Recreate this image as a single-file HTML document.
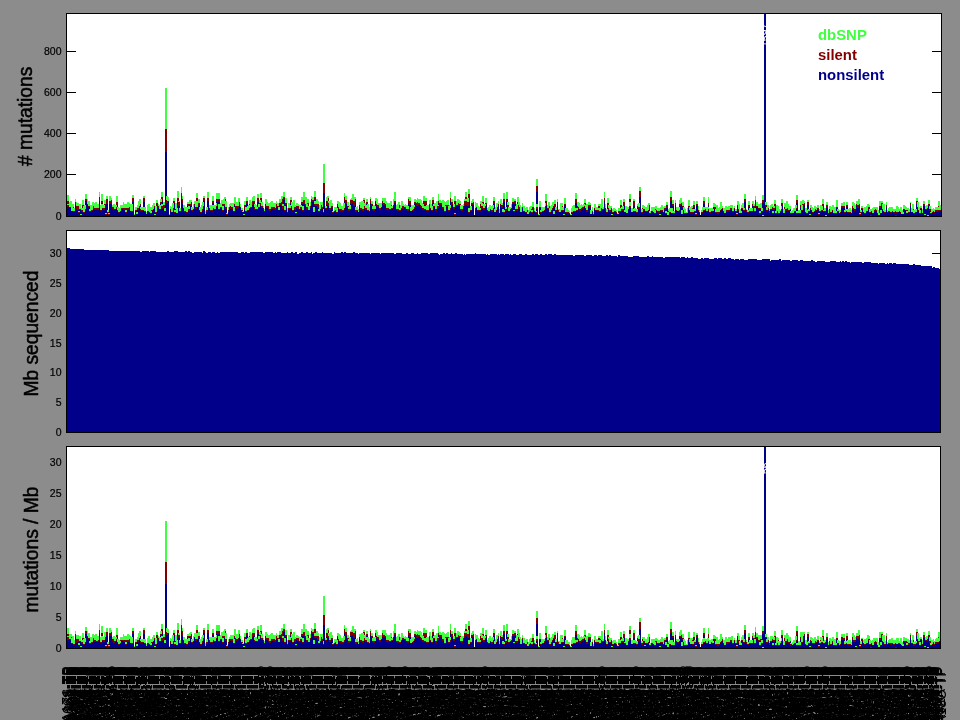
<!DOCTYPE html>
<html lang="en"><head><meta charset="utf-8"><title>Mutation rates</title>
<style>
html,body{margin:0;padding:0;background:#8c8c8c;}
body{width:960px;height:720px;overflow:hidden;}
svg{display:block;will-change:transform;font-family:"Liberation Sans",Arial,Helvetica,sans-serif;}
.tk{font-size:10.5px;fill:#000;text-anchor:end;stroke:#000;stroke-width:0.2px;}
.yl{font-size:19.2px;fill:#000;text-anchor:middle;stroke:#000;stroke-width:0.45px;}
.lg{font-size:14.9px;font-weight:bold;}
.xl{font-size:14px;fill:#000;text-anchor:end;}
.ax{fill:none;stroke:#000;stroke-width:1;shape-rendering:crispEdges;}
.bar{shape-rendering:crispEdges;stroke:none;}
</style></head><body>
<svg width="960" height="720" viewBox="0 0 960 720">
<rect width="960" height="720" fill="#8c8c8c"/>
<rect x="66.5" y="13.5" width="875" height="203" fill="#fff" stroke="none"/>
<rect x="66.5" y="230.5" width="874" height="202" fill="#fff" stroke="none"/>
<rect x="66.5" y="446.5" width="874" height="202" fill="#fff" stroke="none"/>
<path class="ax" d="M67 174.5h9M941 174.5H932M67 133.5h9M941 133.5H932M67 92.5h9M941 92.5H932M67 51.5h9M941 51.5H932"/>
<path class="ax" d="M67 402.5h9M940 402.5H932M67 372.5h9M940 372.5H932M67 343.5h9M940 343.5H932M67 313.5h9M940 313.5H932M67 283.5h9M940 283.5H932M67 253.5h9M940 253.5H932"/>
<path class="bar" fill="#00008b" d="M67 207h2V216h-2zM67 204h2V216h-2zM69 208h2V216h-2zM70 208h2V216h-2zM71 211h2V216h-2zM72 209h2V216h-2zM73 212h2V216h-2zM75 205h1V216h-1zM76 210h1V216h-1zM77 210h2V216h-2zM78 213h2V216h-2zM79 210h2V216h-2zM80 215h2V216h-2zM81 212h2V216h-2zM82 208h2V216h-2zM83 213h2V216h-2zM84 210h2V216h-2zM85 201h2V216h-2zM87 205h1V216h-1zM88 207h2V216h-2zM89 212h2V216h-2zM90 212h2V216h-2zM91 211h2V216h-2zM92 208h2V216h-2zM93 209h2V216h-2zM94 210h2V216h-2zM95 208h2V216h-2zM96 210h2V216h-2zM97 210h2V216h-2zM99 201h1V216h-1zM100 211h2V216h-2zM101 209h2V216h-2zM101 203h2V216h-2zM103 210h2V216h-2zM104 208h2V216h-2zM105 215h2V216h-2zM106 204h2V216h-2zM107 214h2V216h-2zM108 215h2V216h-2zM109 204h2V216h-2zM111 204h1V216h-1zM112 209h2V216h-2zM113 210h2V216h-2zM114 210h2V216h-2zM115 209h2V216h-2zM116 205h2V216h-2zM117 211h2V216h-2zM118 213h2V216h-2zM119 212h2V216h-2zM120 209h2V216h-2zM122 209h1V216h-1zM123 210h1V216h-1zM124 210h2V216h-2zM125 213h2V216h-2zM126 210h2V216h-2zM127 210h2V216h-2zM128 210h2V216h-2zM129 208h2V216h-2zM130 211h2V216h-2zM131 212h2V216h-2zM132 202h2V216h-2zM134 215h1V216h-1zM135 211h2V216h-2zM136 214h2V216h-2zM137 210h2V216h-2zM138 208h2V216h-2zM139 206h2V216h-2zM140 211h2V216h-2zM141 211h2V216h-2zM142 211h2V216h-2zM143 202h2V216h-2zM144 212h2V216h-2zM146 214h1V216h-1zM147 212h2V216h-2zM148 209h2V216h-2zM149 213h2V216h-2zM150 214h2V216h-2zM151 211h2V216h-2zM152 210h2V216h-2zM153 208h2V216h-2zM154 215h2V216h-2zM155 213h2V216h-2zM156 206h2V216h-2zM158 208h1V216h-1zM159 210h2V216h-2zM160 204h2V216h-2zM161 209h2V216h-2zM161 201h2V216h-2zM163 208h2V216h-2zM164 211h2V216h-2zM165 152h2V216h-2zM166 203h2V216h-2zM167 202h2V216h-2zM169 215h1V216h-1zM170 211h1V216h-1zM171 212h2V216h-2zM172 210h2V216h-2zM173 203h2V216h-2zM174 213h2V216h-2zM175 211h2V216h-2zM176 213h2V216h-2zM177 202h2V216h-2zM178 206h2V216h-2zM179 212h2V216h-2zM181 199h1V216h-1zM182 204h1V216h-1zM183 209h2V216h-2zM184 212h2V216h-2zM185 212h2V216h-2zM186 213h2V216h-2zM187 206h2V216h-2zM188 211h2V216h-2zM189 205h2V216h-2zM190 206h2V216h-2zM191 211h2V216h-2zM193 210h1V216h-1zM194 206h2V216h-2zM195 209h2V216h-2zM196 208h2V216h-2zM196 202h2V216h-2zM198 206h2V216h-2zM199 211h2V216h-2zM200 213h2V216h-2zM201 211h2V216h-2zM202 207h2V216h-2zM203 201h2V216h-2zM205 214h1V216h-1zM206 212h2V216h-2zM207 201h2V216h-2zM207 201h2V216h-2zM209 210h2V216h-2zM210 211h2V216h-2zM211 211h2V216h-2zM212 203h2V216h-2zM213 210h2V216h-2zM214 210h2V216h-2zM216 207h1V216h-1zM216 202h2V216h-2zM218 210h2V216h-2zM218 202h2V216h-2zM220 208h2V216h-2zM221 208h2V216h-2zM222 211h2V216h-2zM223 206h2V216h-2zM224 204h2V216h-2zM225 209h2V216h-2zM226 215h2V216h-2zM228 212h1V216h-1zM229 208h1V216h-1zM230 209h2V216h-2zM231 209h2V216h-2zM232 209h2V216h-2zM233 212h2V216h-2zM234 206h2V216h-2zM235 208h2V216h-2zM236 209h2V216h-2zM237 208h2V216h-2zM238 205h2V216h-2zM240 208h1V216h-1zM241 211h2V216h-2zM242 212h2V216h-2zM243 215h2V216h-2zM244 210h2V216h-2zM245 212h2V216h-2zM246 204h2V216h-2zM247 211h2V216h-2zM248 210h2V216h-2zM249 207h2V216h-2zM250 208h2V216h-2zM252 205h1V216h-1zM253 204h2V216h-2zM254 210h2V216h-2zM255 209h2V216h-2zM256 210h2V216h-2zM257 202h2V216h-2zM258 208h2V216h-2zM259 206h2V216h-2zM260 202h2V216h-2zM261 208h2V216h-2zM263 210h1V216h-1zM264 212h1V216h-1zM265 207h2V216h-2zM266 208h2V216h-2zM267 208h2V216h-2zM268 210h2V216h-2zM269 211h2V216h-2zM270 209h2V216h-2zM271 208h2V216h-2zM272 209h2V216h-2zM273 209h2V216h-2zM275 210h1V216h-1zM276 207h1V216h-1zM277 207h2V216h-2zM278 210h2V216h-2zM279 205h2V216h-2zM280 205h2V216h-2zM281 206h2V216h-2zM282 209h2V216h-2zM283 200h2V216h-2zM284 211h2V216h-2zM285 205h2V216h-2zM287 213h1V216h-1zM288 209h2V216h-2zM289 209h2V216h-2zM290 204h2V216h-2zM291 208h2V216h-2zM292 211h2V216h-2zM293 209h2V216h-2zM294 210h2V216h-2zM295 214h2V216h-2zM296 208h2V216h-2zM297 209h2V216h-2zM299 210h1V216h-1zM300 209h2V216h-2zM301 204h2V216h-2zM302 211h2V216h-2zM303 204h2V216h-2zM303 202h2V216h-2zM305 206h2V216h-2zM306 210h2V216h-2zM307 206h2V216h-2zM308 210h2V216h-2zM310 208h1V216h-1zM311 202h1V216h-1zM312 202h2V216h-2zM313 212h2V216h-2zM314 206h2V216h-2zM314 200h2V216h-2zM316 206h2V216h-2zM317 208h2V216h-2zM318 212h2V216h-2zM319 210h2V216h-2zM320 207h2V216h-2zM322 209h1V216h-1zM323 213h1V216h-1zM323 193h2V216h-2zM325 209h2V216h-2zM326 205h2V216h-2zM327 201h2V216h-2zM328 206h2V216h-2zM329 210h2V216h-2zM330 207h2V216h-2zM331 208h2V216h-2zM332 213h2V216h-2zM334 212h1V216h-1zM335 211h2V216h-2zM336 213h2V216h-2zM337 206h2V216h-2zM338 209h2V216h-2zM339 210h2V216h-2zM340 211h2V216h-2zM341 210h2V216h-2zM342 211h2V216h-2zM343 210h2V216h-2zM344 201h1V216h-1zM345 204h2V216h-2zM347 208h2V216h-2zM348 211h2V216h-2zM349 210h2V216h-2zM350 204h2V216h-2zM351 203h2V216h-2zM352 202h2V216h-2zM353 206h2V216h-2zM354 203h2V216h-2zM355 212h2V216h-2zM357 211h1V216h-1zM358 212h1V216h-1zM359 207h2V216h-2zM360 210h2V216h-2zM361 207h2V216h-2zM362 211h2V216h-2zM363 203h2V216h-2zM364 209h2V216h-2zM365 210h2V216h-2zM366 204h2V216h-2zM367 211h2V216h-2zM369 212h1V216h-1zM370 203h1V216h-1zM371 206h2V216h-2zM372 210h2V216h-2zM373 211h2V216h-2zM374 209h2V216h-2zM375 202h2V216h-2zM376 206h2V216h-2zM377 207h2V216h-2zM378 215h2V216h-2zM379 210h2V216h-2zM381 208h1V216h-1zM382 204h2V216h-2zM383 205h2V216h-2zM384 205h2V216h-2zM385 206h2V216h-2zM386 210h2V216h-2zM387 209h2V216h-2zM388 209h2V216h-2zM389 210h2V216h-2zM390 209h2V216h-2zM391 209h2V216h-2zM393 206h1V216h-1zM394 203h2V216h-2zM394 202h2V216h-2zM396 210h2V216h-2zM397 211h2V216h-2zM398 208h2V216h-2zM399 211h2V216h-2zM400 209h2V216h-2zM401 208h2V216h-2zM402 209h2V216h-2zM404 208h1V216h-1zM405 209h1V216h-1zM406 209h2V216h-2zM407 211h2V216h-2zM408 203h2V216h-2zM409 205h2V216h-2zM410 211h2V216h-2zM411 211h2V216h-2zM412 211h2V216h-2zM413 209h2V216h-2zM414 204h2V216h-2zM416 206h1V216h-1zM417 206h1V216h-1zM418 205h2V216h-2zM419 205h2V216h-2zM420 207h2V216h-2zM421 208h2V216h-2zM422 210h2V216h-2zM423 205h2V216h-2zM424 210h2V216h-2zM425 205h2V216h-2zM426 211h2V216h-2zM428 211h1V216h-1zM429 206h2V216h-2zM430 209h2V216h-2zM431 211h2V216h-2zM432 203h2V216h-2zM433 207h2V216h-2zM434 207h2V216h-2zM435 211h2V216h-2zM436 208h2V216h-2zM437 208h2V216h-2zM438 203h1V216h-1zM439 205h2V216h-2zM441 205h2V216h-2zM442 209h2V216h-2zM443 207h2V216h-2zM444 212h2V216h-2zM445 207h2V216h-2zM446 207h2V216h-2zM447 207h2V216h-2zM448 211h2V216h-2zM449 210h2V216h-2zM450 201h1V216h-1zM451 205h2V216h-2zM453 209h2V216h-2zM454 215h2V216h-2zM454 204h2V216h-2zM456 206h2V216h-2zM457 206h2V216h-2zM458 206h2V216h-2zM459 206h2V216h-2zM460 210h2V216h-2zM461 211h2V216h-2zM463 208h1V216h-1zM464 206h1V216h-1zM465 205h2V216h-2zM465 201h2V216h-2zM467 206h2V216h-2zM468 213h2V216h-2zM468 199h2V216h-2zM470 211h2V216h-2zM471 205h2V216h-2zM472 205h2V216h-2zM473 215h2V216h-2zM475 210h1V216h-1zM476 208h2V216h-2zM477 211h2V216h-2zM478 211h2V216h-2zM479 211h2V216h-2zM480 207h2V216h-2zM481 209h2V216h-2zM482 205h2V216h-2zM483 210h2V216h-2zM484 208h2V216h-2zM485 205h2V216h-2zM487 211h1V216h-1zM488 212h2V216h-2zM489 209h2V216h-2zM490 210h2V216h-2zM491 212h2V216h-2zM492 210h2V216h-2zM493 204h2V216h-2zM494 212h2V216h-2zM495 211h2V216h-2zM496 208h2V216h-2zM498 206h1V216h-1zM499 213h1V216h-1zM500 206h2V216h-2zM501 208h2V216h-2zM502 212h2V216h-2zM503 213h2V216h-2zM503 202h2V216h-2zM505 211h2V216h-2zM506 202h2V216h-2zM507 208h2V216h-2zM508 211h2V216h-2zM510 210h1V216h-1zM511 209h1V216h-1zM512 204h2V216h-2zM513 212h2V216h-2zM514 204h2V216h-2zM515 210h2V216h-2zM516 211h2V216h-2zM517 204h2V216h-2zM518 209h2V216h-2zM519 209h2V216h-2zM520 212h2V216h-2zM522 208h1V216h-1zM523 212h2V216h-2zM524 211h2V216h-2zM525 213h2V216h-2zM526 212h2V216h-2zM527 214h2V216h-2zM528 213h2V216h-2zM529 212h2V216h-2zM530 211h2V216h-2zM531 213h2V216h-2zM532 211h2V216h-2zM534 212h1V216h-1zM535 213h2V216h-2zM536 209h2V216h-2zM536 192h2V216h-2zM538 215h2V216h-2zM539 208h2V216h-2zM540 213h2V216h-2zM541 211h2V216h-2zM542 212h2V216h-2zM543 211h2V216h-2zM545 209h1V216h-1zM545 205h2V216h-2zM547 209h2V216h-2zM548 208h2V216h-2zM549 213h2V216h-2zM550 212h2V216h-2zM551 210h2V216h-2zM552 208h2V216h-2zM553 214h2V216h-2zM554 207h2V216h-2zM555 211h2V216h-2zM557 206h1V216h-1zM558 212h1V216h-1zM559 212h2V216h-2zM560 211h2V216h-2zM561 208h2V216h-2zM562 211h2V216h-2zM563 215h2V216h-2zM564 205h2V216h-2zM565 213h2V216h-2zM566 213h2V216h-2zM567 213h2V216h-2zM569 214h1V216h-1zM570 215h2V216h-2zM571 213h2V216h-2zM572 212h2V216h-2zM573 211h2V216h-2zM574 212h2V216h-2zM575 203h2V216h-2zM576 211h2V216h-2zM577 208h2V216h-2zM578 209h2V216h-2zM579 211h2V216h-2zM581 210h1V216h-1zM582 209h2V216h-2zM583 207h2V216h-2zM584 206h2V216h-2zM585 209h2V216h-2zM586 212h2V216h-2zM587 207h2V216h-2zM588 207h2V216h-2zM589 207h2V216h-2zM590 214h2V216h-2zM592 212h1V216h-1zM593 215h1V216h-1zM594 209h2V216h-2zM595 211h2V216h-2zM596 211h2V216h-2zM597 211h2V216h-2zM598 208h2V216h-2zM599 212h2V216h-2zM600 209h2V216h-2zM601 210h2V216h-2zM602 210h2V216h-2zM604 201h1V216h-1zM605 211h1V216h-1zM606 213h2V216h-2zM607 206h2V216h-2zM608 210h2V216h-2zM609 212h2V216h-2zM610 210h2V216h-2zM611 215h2V216h-2zM612 213h2V216h-2zM613 212h2V216h-2zM614 212h2V216h-2zM616 213h1V216h-1zM617 214h2V216h-2zM618 213h2V216h-2zM619 212h2V216h-2zM620 208h2V216h-2zM621 211h2V216h-2zM622 211h2V216h-2zM623 206h2V216h-2zM624 212h2V216h-2zM625 211h2V216h-2zM626 213h2V216h-2zM628 210h1V216h-1zM629 208h2V216h-2zM629 202h2V216h-2zM631 212h2V216h-2zM632 212h2V216h-2zM633 206h2V216h-2zM634 212h2V216h-2zM635 215h2V216h-2zM636 213h2V216h-2zM637 208h2V216h-2zM638 209h2V216h-2zM639 197h2V216h-2zM641 213h2V216h-2zM642 209h2V216h-2zM643 211h2V216h-2zM644 214h2V216h-2zM645 212h2V216h-2zM646 212h2V216h-2zM647 211h2V216h-2zM648 208h2V216h-2zM649 214h2V216h-2zM651 212h1V216h-1zM652 212h1V216h-1zM653 213h2V216h-2zM654 214h2V216h-2zM655 210h2V216h-2zM656 211h2V216h-2zM657 212h2V216h-2zM658 213h2V216h-2zM659 215h2V216h-2zM660 211h2V216h-2zM661 211h2V216h-2zM663 213h1V216h-1zM664 210h2V216h-2zM665 214h2V216h-2zM666 208h2V216h-2zM667 215h2V216h-2zM668 212h2V216h-2zM669 213h2V216h-2zM670 201h2V216h-2zM671 214h2V216h-2zM672 206h2V216h-2zM673 214h2V216h-2zM675 205h1V216h-1zM676 211h2V216h-2zM677 211h2V216h-2zM678 211h2V216h-2zM679 206h2V216h-2zM680 205h2V216h-2zM681 214h2V216h-2zM682 208h2V216h-2zM683 211h2V216h-2zM684 214h2V216h-2zM685 214h2V216h-2zM687 213h1V216h-1zM688 208h2V216h-2zM689 211h2V216h-2zM690 213h2V216h-2zM691 210h2V216h-2zM692 213h2V216h-2zM693 208h2V216h-2zM694 212h2V216h-2zM695 215h2V216h-2zM696 206h2V216h-2zM698 211h1V216h-1zM699 213h1V216h-1zM700 215h2V216h-2zM701 213h2V216h-2zM702 211h2V216h-2zM703 211h2V216h-2zM703 204h2V216h-2zM705 211h2V216h-2zM706 212h2V216h-2zM707 211h2V216h-2zM708 205h1V216h-1zM709 213h2V216h-2zM711 212h2V216h-2zM712 211h2V216h-2zM713 208h2V216h-2zM714 209h2V216h-2zM715 213h2V216h-2zM716 211h2V216h-2zM717 214h2V216h-2zM718 213h2V216h-2zM719 211h2V216h-2zM720 210h2V216h-2zM722 209h1V216h-1zM723 212h2V216h-2zM724 213h2V216h-2zM725 211h2V216h-2zM726 212h2V216h-2zM727 211h2V216h-2zM728 211h2V216h-2zM729 210h2V216h-2zM730 210h2V216h-2zM731 210h2V216h-2zM732 212h2V216h-2zM734 209h1V216h-1zM735 212h2V216h-2zM736 215h2V216h-2zM737 206h2V216h-2zM738 211h2V216h-2zM739 213h2V216h-2zM740 213h2V216h-2zM741 209h2V216h-2zM742 209h2V216h-2zM743 211h2V216h-2zM744 202h2V216h-2zM746 212h1V216h-1zM747 213h2V216h-2zM748 207h2V216h-2zM749 212h2V216h-2zM750 212h2V216h-2zM751 212h2V216h-2zM752 206h2V216h-2zM753 209h2V216h-2zM754 212h2V216h-2zM755 203h1V216h-1zM756 207h2V216h-2zM758 209h2V216h-2zM759 214h2V216h-2zM760 209h2V216h-2zM761 212h2V216h-2zM762 203h2V216h-2zM764 14h2V216h-2zM765 207h2V216h-2zM766 211h2V216h-2zM767 210h2V216h-2zM769 213h1V216h-1zM770 210h2V216h-2zM771 210h2V216h-2zM772 214h2V216h-2zM773 210h2V216h-2zM774 207h2V216h-2zM775 214h2V216h-2zM776 212h2V216h-2zM777 210h2V216h-2zM778 214h2V216h-2zM779 212h2V216h-2zM781 211h1V216h-1zM781 206h2V216h-2zM783 213h2V216h-2zM784 209h2V216h-2zM785 211h2V216h-2zM786 209h2V216h-2zM787 209h2V216h-2zM788 211h2V216h-2zM789 210h2V216h-2zM790 214h2V216h-2zM792 213h1V216h-1zM793 213h1V216h-1zM794 212h2V216h-2zM795 209h2V216h-2zM796 214h2V216h-2zM796 203h2V216h-2zM798 213h2V216h-2zM799 214h2V216h-2zM800 208h2V216h-2zM801 211h2V216h-2zM802 207h2V216h-2zM804 205h1V216h-1zM805 213h2V216h-2zM806 214h2V216h-2zM807 205h2V216h-2zM808 212h2V216h-2zM809 215h2V216h-2zM810 210h2V216h-2zM811 211h2V216h-2zM812 213h2V216h-2zM813 212h2V216h-2zM814 211h2V216h-2zM816 211h1V216h-1zM817 210h2V216h-2zM818 215h2V216h-2zM819 212h2V216h-2zM820 210h2V216h-2zM821 211h2V216h-2zM822 206h2V216h-2zM823 212h2V216h-2zM824 212h2V216h-2zM826 208h2V216h-2zM828 214h1V216h-1zM829 211h2V216h-2zM830 213h2V216h-2zM831 211h2V216h-2zM832 210h2V216h-2zM833 214h2V216h-2zM834 212h2V216h-2zM835 214h2V216h-2zM836 208h2V216h-2zM837 212h2V216h-2zM839 214h1V216h-1zM840 213h1V216h-1zM841 208h2V216h-2zM842 208h2V216h-2zM843 208h2V216h-2zM844 213h2V216h-2zM845 212h2V216h-2zM846 207h2V216h-2zM847 213h2V216h-2zM848 212h2V216h-2zM849 213h2V216h-2zM851 213h1V216h-1zM852 209h2V216h-2zM853 210h2V216h-2zM854 211h2V216h-2zM855 215h2V216h-2zM856 206h2V216h-2zM857 208h2V216h-2zM858 206h2V216h-2zM859 215h2V216h-2zM860 213h2V216h-2zM861 209h2V216h-2zM863 212h1V216h-1zM864 214h2V216h-2zM865 212h2V216h-2zM866 211h2V216h-2zM867 210h2V216h-2zM868 209h2V216h-2zM869 213h2V216h-2zM871 212h2V216h-2zM872 213h2V216h-2zM873 212h2V216h-2zM875 211h1V216h-1zM876 211h2V216h-2zM877 214h2V216h-2zM878 215h2V216h-2zM879 208h2V216h-2zM880 213h2V216h-2zM881 206h2V216h-2zM882 210h2V216h-2zM883 212h2V216h-2zM884 213h2V216h-2zM886 208h1V216h-1zM887 213h1V216h-1zM888 212h2V216h-2zM889 211h2V216h-2zM890 213h2V216h-2zM891 212h2V216h-2zM892 212h2V216h-2zM893 213h2V216h-2zM894 212h2V216h-2zM896 213h2V216h-2zM898 212h1V216h-1zM899 212h2V216h-2zM900 213h2V216h-2zM901 214h2V216h-2zM902 214h2V216h-2zM903 210h2V216h-2zM904 210h2V216h-2zM905 211h2V216h-2zM906 213h2V216h-2zM907 211h2V216h-2zM908 213h2V216h-2zM910 206h1V216h-1zM911 212h2V216h-2zM912 210h2V216h-2zM913 214h2V216h-2zM914 213h2V216h-2zM915 212h2V216h-2zM916 204h2V216h-2zM917 208h2V216h-2zM918 211h2V216h-2zM919 214h2V216h-2zM920 209h2V216h-2zM922 213h1V216h-1zM923 206h2V216h-2zM924 215h2V216h-2zM925 210h2V216h-2zM926 209h2V216h-2zM928 206h2V216h-2zM929 211h2V216h-2zM930 214h2V216h-2zM931 213h2V216h-2zM933 212h1V216h-1zM934 213h1V216h-1zM935 212h2V216h-2zM936 212h2V216h-2zM937 211h2V216h-2zM938 208h2V216h-2zM939 211h2V216h-2zM940 211h1V216h-1z"/>
<path class="bar" fill="#800000" d="M67 205h2V207h-2zM67 201h2V204h-2zM69 207h2V208h-2zM70 205h2V208h-2zM72 207h2V209h-2zM73 211h2V212h-2zM75 202h1V205h-1zM76 206h1V210h-1zM77 206h2V210h-2zM78 212h2V213h-2zM79 209h2V210h-2zM81 210h2V212h-2zM82 205h2V208h-2zM83 212h2V213h-2zM84 209h2V210h-2zM85 199h2V201h-2zM87 204h1V205h-1zM88 206h2V207h-2zM89 211h2V212h-2zM90 210h2V212h-2zM91 210h2V211h-2zM92 206h2V208h-2zM93 206h2V209h-2zM94 208h2V210h-2zM95 206h2V208h-2zM96 208h2V210h-2zM97 208h2V210h-2zM99 197h1V201h-1zM100 210h2V211h-2zM101 208h2V209h-2zM101 201h2V203h-2zM103 208h2V210h-2zM104 204h2V208h-2zM105 214h2V215h-2zM106 199h2V204h-2zM107 212h2V214h-2zM108 214h2V215h-2zM109 201h2V204h-2zM111 200h1V204h-1zM112 207h2V209h-2zM113 207h2V210h-2zM114 209h2V210h-2zM115 207h2V209h-2zM116 202h2V205h-2zM117 210h2V211h-2zM118 212h2V213h-2zM119 211h2V212h-2zM120 208h2V209h-2zM122 208h1V209h-1zM123 208h1V210h-1zM124 208h2V210h-2zM125 212h2V213h-2zM126 208h2V210h-2zM127 208h2V210h-2zM128 207h2V210h-2zM129 207h2V208h-2zM131 211h2V212h-2zM132 198h2V202h-2zM135 210h2V211h-2zM137 208h2V210h-2zM138 206h2V208h-2zM139 204h2V206h-2zM140 209h2V211h-2zM141 210h2V211h-2zM142 210h2V211h-2zM143 198h2V202h-2zM144 211h2V212h-2zM147 211h2V212h-2zM148 207h2V209h-2zM149 212h2V213h-2zM150 213h2V214h-2zM151 210h2V211h-2zM152 209h2V210h-2zM153 206h2V208h-2zM155 212h2V213h-2zM156 203h2V206h-2zM158 206h1V208h-1zM159 209h2V210h-2zM160 202h2V204h-2zM161 206h2V209h-2zM161 197h2V201h-2zM163 205h2V208h-2zM165 129h2V152h-2zM166 200h2V203h-2zM167 201h2V202h-2zM170 209h1V211h-1zM172 208h2V210h-2zM173 201h2V203h-2zM174 212h2V213h-2zM175 209h2V211h-2zM177 198h2V202h-2zM178 202h2V206h-2zM179 211h2V212h-2zM181 193h1V199h-1zM182 199h1V204h-1zM183 208h2V209h-2zM184 211h2V212h-2zM185 211h2V212h-2zM186 212h2V213h-2zM187 204h2V206h-2zM188 209h2V211h-2zM189 204h2V205h-2zM190 202h2V206h-2zM191 210h2V211h-2zM193 209h1V210h-1zM194 204h2V206h-2zM195 207h2V209h-2zM196 207h2V208h-2zM196 198h2V202h-2zM198 203h2V206h-2zM199 210h2V211h-2zM200 212h2V213h-2zM201 209h2V211h-2zM202 206h2V207h-2zM203 198h2V201h-2zM206 210h2V212h-2zM207 198h2V201h-2zM207 198h2V201h-2zM209 208h2V210h-2zM210 210h2V211h-2zM211 210h2V211h-2zM212 201h2V203h-2zM213 208h2V210h-2zM214 209h2V210h-2zM216 206h1V207h-1zM216 199h2V202h-2zM218 209h2V210h-2zM218 199h2V202h-2zM220 207h2V208h-2zM221 204h2V208h-2zM222 210h2V211h-2zM223 204h2V206h-2zM224 199h2V204h-2zM225 207h2V209h-2zM226 214h2V215h-2zM228 210h1V212h-1zM229 207h1V208h-1zM230 206h2V209h-2zM231 207h2V209h-2zM232 207h2V209h-2zM233 211h2V212h-2zM234 204h2V206h-2zM235 206h2V208h-2zM236 206h2V209h-2zM237 206h2V208h-2zM238 202h2V205h-2zM240 207h1V208h-1zM241 210h2V211h-2zM244 205h2V210h-2zM245 211h2V212h-2zM246 201h2V204h-2zM247 210h2V211h-2zM248 208h2V210h-2zM249 204h2V207h-2zM250 207h2V208h-2zM252 201h1V205h-1zM253 201h2V204h-2zM254 207h2V210h-2zM256 209h2V210h-2zM257 198h2V202h-2zM258 207h2V208h-2zM259 203h2V206h-2zM260 198h2V202h-2zM261 206h2V208h-2zM263 208h1V210h-1zM264 211h1V212h-1zM265 204h2V207h-2zM266 206h2V208h-2zM267 206h2V208h-2zM268 205h2V210h-2zM269 209h2V211h-2zM270 207h2V209h-2zM271 205h2V208h-2zM272 207h2V209h-2zM273 207h2V209h-2zM275 208h1V210h-1zM276 204h1V207h-1zM277 206h2V207h-2zM279 203h2V205h-2zM280 202h2V205h-2zM281 199h2V206h-2zM282 206h2V209h-2zM283 197h2V200h-2zM284 210h2V211h-2zM285 203h2V205h-2zM287 212h1V213h-1zM288 208h2V209h-2zM289 208h2V209h-2zM290 200h2V204h-2zM291 206h2V208h-2zM292 210h2V211h-2zM293 207h2V209h-2zM294 207h2V210h-2zM295 213h2V214h-2zM296 206h2V208h-2zM297 206h2V209h-2zM299 209h1V210h-1zM300 207h2V209h-2zM301 202h2V204h-2zM302 210h2V211h-2zM303 200h2V204h-2zM303 198h2V202h-2zM305 204h2V206h-2zM306 207h2V210h-2zM307 203h2V206h-2zM310 206h1V208h-1zM311 199h1V202h-1zM312 200h2V202h-2zM314 204h2V206h-2zM314 197h2V200h-2zM316 204h2V206h-2zM317 204h2V208h-2zM318 211h2V212h-2zM319 209h2V210h-2zM320 205h2V207h-2zM322 207h1V209h-1zM323 212h1V213h-1zM323 183h2V193h-2zM325 208h2V209h-2zM326 201h2V205h-2zM327 198h2V201h-2zM328 203h2V206h-2zM329 208h2V210h-2zM330 206h2V207h-2zM331 206h2V208h-2zM332 212h2V213h-2zM334 211h1V212h-1zM335 210h2V211h-2zM336 212h2V213h-2zM337 204h2V206h-2zM338 207h2V209h-2zM339 209h2V210h-2zM340 209h2V211h-2zM341 209h2V210h-2zM342 210h2V211h-2zM343 208h2V210h-2zM344 197h1V201h-1zM345 200h2V204h-2zM347 206h2V208h-2zM348 209h2V211h-2zM349 209h2V210h-2zM350 200h2V204h-2zM351 200h2V203h-2zM352 199h2V202h-2zM353 201h2V206h-2zM354 199h2V203h-2zM355 210h2V212h-2zM357 210h1V211h-1zM359 205h2V207h-2zM360 208h2V210h-2zM361 205h2V207h-2zM362 209h2V211h-2zM363 200h2V203h-2zM364 206h2V209h-2zM365 208h2V210h-2zM366 202h2V204h-2zM367 210h2V211h-2zM369 211h1V212h-1zM370 199h1V203h-1zM371 204h2V206h-2zM372 209h2V210h-2zM373 209h2V211h-2zM375 201h2V202h-2zM376 204h2V206h-2zM377 205h2V207h-2zM379 208h2V210h-2zM381 207h1V208h-1zM382 201h2V204h-2zM383 203h2V205h-2zM384 203h2V205h-2zM385 204h2V206h-2zM386 208h2V210h-2zM387 208h2V209h-2zM388 208h2V209h-2zM389 209h2V210h-2zM390 205h2V209h-2zM391 208h2V209h-2zM393 205h1V206h-1zM394 201h2V203h-2zM394 198h2V202h-2zM396 209h2V210h-2zM397 209h2V211h-2zM398 205h2V208h-2zM399 210h2V211h-2zM400 208h2V209h-2zM401 206h2V208h-2zM402 206h2V209h-2zM404 207h1V208h-1zM405 207h1V209h-1zM407 209h2V211h-2zM408 199h2V203h-2zM409 201h2V205h-2zM411 210h2V211h-2zM412 209h2V211h-2zM413 207h2V209h-2zM414 202h2V204h-2zM416 203h1V206h-1zM417 202h1V206h-1zM418 203h2V205h-2zM419 203h2V205h-2zM420 205h2V207h-2zM421 206h2V208h-2zM422 208h2V210h-2zM423 201h2V205h-2zM424 209h2V210h-2zM425 201h2V205h-2zM426 210h2V211h-2zM428 210h1V211h-1zM429 204h2V206h-2zM430 208h2V209h-2zM431 210h2V211h-2zM432 200h2V203h-2zM433 206h2V207h-2zM434 205h2V207h-2zM435 209h2V211h-2zM436 205h2V208h-2zM437 206h2V208h-2zM438 201h1V203h-1zM439 203h2V205h-2zM441 203h2V205h-2zM442 207h2V209h-2zM443 206h2V207h-2zM444 211h2V212h-2zM445 205h2V207h-2zM446 205h2V207h-2zM447 205h2V207h-2zM448 210h2V211h-2zM449 208h2V210h-2zM450 198h1V201h-1zM451 202h2V205h-2zM453 207h2V209h-2zM454 214h2V215h-2zM454 201h2V204h-2zM456 205h2V206h-2zM457 202h2V206h-2zM458 203h2V206h-2zM459 204h2V206h-2zM460 209h2V210h-2zM461 209h2V211h-2zM463 206h1V208h-1zM464 201h1V206h-1zM465 201h2V205h-2zM465 197h2V201h-2zM467 202h2V206h-2zM468 212h2V213h-2zM468 194h2V199h-2zM470 210h2V211h-2zM471 203h2V205h-2zM472 202h2V205h-2zM475 208h1V210h-1zM476 207h2V208h-2zM477 210h2V211h-2zM478 210h2V211h-2zM479 210h2V211h-2zM480 204h2V207h-2zM481 206h2V209h-2zM482 202h2V205h-2zM483 208h2V210h-2zM484 206h2V208h-2zM485 203h2V205h-2zM487 210h1V211h-1zM488 211h2V212h-2zM489 207h2V209h-2zM490 209h2V210h-2zM491 210h2V212h-2zM492 208h2V210h-2zM493 201h2V204h-2zM495 210h2V211h-2zM496 207h2V208h-2zM498 204h1V206h-1zM500 204h2V206h-2zM501 205h2V208h-2zM503 212h2V213h-2zM503 199h2V202h-2zM505 209h2V211h-2zM506 199h2V202h-2zM507 205h2V208h-2zM510 209h1V210h-1zM511 208h1V209h-1zM512 202h2V204h-2zM513 211h2V212h-2zM514 201h2V204h-2zM515 209h2V210h-2zM516 209h2V211h-2zM517 202h2V204h-2zM518 205h2V209h-2zM519 207h2V209h-2zM522 207h1V208h-1zM523 211h2V212h-2zM524 210h2V211h-2zM525 212h2V213h-2zM526 210h2V212h-2zM528 212h2V213h-2zM529 211h2V212h-2zM530 209h2V211h-2zM531 212h2V213h-2zM532 207h2V211h-2zM534 211h1V212h-1zM535 212h2V213h-2zM536 207h2V209h-2zM536 186h2V192h-2zM539 207h2V208h-2zM540 212h2V213h-2zM541 210h2V211h-2zM542 211h2V212h-2zM543 210h2V211h-2zM545 206h1V209h-1zM545 201h2V205h-2zM547 208h2V209h-2zM548 206h2V208h-2zM549 212h2V213h-2zM550 210h2V212h-2zM551 208h2V210h-2zM552 206h2V208h-2zM554 204h2V207h-2zM555 210h2V211h-2zM557 202h1V206h-1zM558 210h1V212h-1zM560 210h2V211h-2zM561 206h2V208h-2zM562 210h2V211h-2zM564 204h2V205h-2zM565 212h2V213h-2zM566 211h2V213h-2zM567 212h2V213h-2zM569 213h1V214h-1zM571 212h2V213h-2zM572 211h2V212h-2zM573 210h2V211h-2zM574 211h2V212h-2zM575 199h2V203h-2zM576 210h2V211h-2zM577 206h2V208h-2zM578 207h2V209h-2zM579 209h2V211h-2zM581 208h1V210h-1zM582 207h2V209h-2zM583 206h2V207h-2zM584 203h2V206h-2zM585 208h2V209h-2zM586 210h2V212h-2zM587 205h2V207h-2zM588 204h2V207h-2zM589 205h2V207h-2zM592 211h1V212h-1zM593 214h1V215h-1zM594 208h2V209h-2zM595 210h2V211h-2zM596 210h2V211h-2zM597 210h2V211h-2zM598 206h2V208h-2zM599 211h2V212h-2zM600 208h2V209h-2zM601 208h2V210h-2zM602 209h2V210h-2zM604 198h1V201h-1zM605 208h1V211h-1zM606 212h2V213h-2zM607 203h2V206h-2zM608 208h2V210h-2zM609 210h2V212h-2zM610 208h2V210h-2zM612 212h2V213h-2zM613 211h2V212h-2zM614 211h2V212h-2zM616 212h1V213h-1zM618 211h2V213h-2zM619 211h2V212h-2zM620 205h2V208h-2zM621 209h2V211h-2zM622 209h2V211h-2zM623 202h2V206h-2zM625 210h2V211h-2zM628 209h1V210h-1zM629 206h2V208h-2zM629 199h2V202h-2zM632 211h2V212h-2zM633 201h2V206h-2zM634 211h2V212h-2zM636 212h2V213h-2zM637 206h2V208h-2zM638 207h2V209h-2zM639 191h2V197h-2zM641 212h2V213h-2zM642 208h2V209h-2zM643 209h2V211h-2zM645 211h2V212h-2zM646 211h2V212h-2zM647 210h2V211h-2zM648 205h2V208h-2zM649 213h2V214h-2zM651 211h1V212h-1zM652 211h1V212h-1zM653 212h2V213h-2zM654 213h2V214h-2zM655 209h2V210h-2zM656 210h2V211h-2zM657 211h2V212h-2zM658 211h2V213h-2zM660 210h2V211h-2zM661 210h2V211h-2zM663 212h1V213h-1zM664 208h2V210h-2zM665 213h2V214h-2zM666 205h2V208h-2zM668 211h2V212h-2zM669 212h2V213h-2zM670 197h2V201h-2zM671 213h2V214h-2zM672 204h2V206h-2zM673 213h2V214h-2zM675 203h1V205h-1zM676 210h2V211h-2zM678 210h2V211h-2zM679 204h2V206h-2zM680 203h2V205h-2zM682 206h2V208h-2zM683 210h2V211h-2zM684 213h2V214h-2zM685 213h2V214h-2zM688 206h2V208h-2zM689 210h2V211h-2zM690 212h2V213h-2zM691 208h2V210h-2zM692 212h2V213h-2zM693 205h2V208h-2zM694 211h2V212h-2zM695 214h2V215h-2zM696 204h2V206h-2zM698 210h1V211h-1zM699 212h1V213h-1zM701 212h2V213h-2zM702 210h2V211h-2zM703 210h2V211h-2zM703 201h2V204h-2zM705 209h2V211h-2zM706 211h2V212h-2zM707 209h2V211h-2zM708 203h1V205h-1zM709 212h2V213h-2zM711 211h2V212h-2zM713 207h2V208h-2zM714 207h2V209h-2zM715 212h2V213h-2zM716 210h2V211h-2zM717 212h2V214h-2zM718 212h2V213h-2zM719 210h2V211h-2zM720 209h2V210h-2zM722 208h1V209h-1zM723 211h2V212h-2zM725 210h2V211h-2zM726 210h2V212h-2zM727 210h2V211h-2zM728 210h2V211h-2zM729 208h2V210h-2zM730 208h2V210h-2zM731 208h2V210h-2zM732 211h2V212h-2zM734 208h1V209h-1zM735 211h2V212h-2zM736 214h2V215h-2zM737 205h2V206h-2zM738 209h2V211h-2zM741 208h2V209h-2zM742 208h2V209h-2zM743 210h2V211h-2zM744 199h2V202h-2zM746 210h1V212h-1zM747 212h2V213h-2zM748 205h2V207h-2zM749 211h2V212h-2zM750 211h2V212h-2zM751 211h2V212h-2zM752 204h2V206h-2zM753 206h2V209h-2zM754 211h2V212h-2zM755 200h1V203h-1zM756 206h2V207h-2zM758 208h2V209h-2zM759 213h2V214h-2zM760 208h2V209h-2zM761 211h2V212h-2zM762 200h2V203h-2zM765 205h2V207h-2zM766 210h2V211h-2zM767 208h2V210h-2zM769 211h1V213h-1zM770 209h2V210h-2zM771 207h2V210h-2zM772 213h2V214h-2zM773 208h2V210h-2zM774 204h2V207h-2zM775 213h2V214h-2zM776 211h2V212h-2zM777 209h2V210h-2zM778 213h2V214h-2zM779 211h2V212h-2zM781 209h1V211h-1zM781 203h2V206h-2zM784 207h2V209h-2zM785 209h2V211h-2zM786 207h2V209h-2zM787 208h2V209h-2zM788 210h2V211h-2zM789 209h2V210h-2zM790 213h2V214h-2zM794 211h2V212h-2zM795 208h2V209h-2zM796 213h2V214h-2zM796 200h2V203h-2zM799 213h2V214h-2zM800 205h2V208h-2zM801 210h2V211h-2zM802 204h2V207h-2zM804 203h1V205h-1zM805 212h2V213h-2zM806 213h2V214h-2zM807 202h2V205h-2zM808 211h2V212h-2zM810 208h2V210h-2zM811 210h2V211h-2zM812 212h2V213h-2zM813 211h2V212h-2zM814 209h2V211h-2zM816 210h1V211h-1zM817 208h2V210h-2zM818 214h2V215h-2zM819 211h2V212h-2zM820 209h2V210h-2zM821 210h2V211h-2zM822 204h2V206h-2zM823 211h2V212h-2zM824 211h2V212h-2zM826 205h2V208h-2zM828 213h1V214h-1zM829 209h2V211h-2zM830 212h2V213h-2zM831 210h2V211h-2zM832 208h2V210h-2zM833 213h2V214h-2zM834 211h2V212h-2zM835 213h2V214h-2zM836 207h2V208h-2zM837 211h2V212h-2zM839 213h1V214h-1zM840 212h1V213h-1zM841 206h2V208h-2zM842 206h2V208h-2zM843 206h2V208h-2zM844 212h2V213h-2zM845 211h2V212h-2zM846 205h2V207h-2zM847 212h2V213h-2zM848 211h2V212h-2zM849 212h2V213h-2zM852 206h2V209h-2zM853 208h2V210h-2zM854 209h2V211h-2zM856 204h2V206h-2zM857 205h2V208h-2zM858 204h2V206h-2zM859 214h2V215h-2zM860 212h2V213h-2zM861 208h2V209h-2zM864 213h2V214h-2zM865 211h2V212h-2zM867 207h2V210h-2zM868 207h2V209h-2zM869 212h2V213h-2zM870 215h2V216h-2zM871 211h2V212h-2zM873 210h2V212h-2zM875 209h1V211h-1zM876 210h2V211h-2zM877 213h2V214h-2zM879 206h2V208h-2zM881 203h2V206h-2zM882 209h2V210h-2zM883 211h2V212h-2zM884 212h2V213h-2zM886 205h1V208h-1zM887 212h1V213h-1zM888 211h2V212h-2zM889 210h2V211h-2zM890 212h2V213h-2zM891 211h2V212h-2zM892 211h2V212h-2zM893 212h2V213h-2zM894 211h2V212h-2zM895 215h2V216h-2zM896 212h2V213h-2zM899 211h2V212h-2zM900 212h2V213h-2zM903 209h2V210h-2zM904 209h2V210h-2zM905 210h2V211h-2zM907 210h2V211h-2zM908 212h2V213h-2zM910 203h1V206h-1zM912 209h2V210h-2zM913 213h2V214h-2zM914 212h2V213h-2zM916 201h2V204h-2zM917 207h2V208h-2zM918 210h2V211h-2zM919 213h2V214h-2zM920 208h2V209h-2zM923 204h2V206h-2zM925 209h2V210h-2zM926 208h2V209h-2zM928 204h2V206h-2zM929 209h2V211h-2zM930 213h2V214h-2zM931 212h2V213h-2zM933 211h1V212h-1zM934 212h1V213h-1zM935 210h2V212h-2zM936 210h2V212h-2zM937 210h2V211h-2zM938 206h2V208h-2zM939 210h2V211h-2zM940 210h1V211h-1z"/>
<path class="bar" fill="#40ff40" d="M67 204h2V205h-2zM67 195h2V201h-2zM69 202h2V207h-2zM70 201h2V205h-2zM71 205h2V211h-2zM72 204h2V207h-2zM73 208h2V211h-2zM75 199h1V202h-1zM76 202h1V206h-1zM77 203h2V206h-2zM78 211h2V212h-2zM79 204h2V209h-2zM80 214h2V215h-2zM81 208h2V210h-2zM82 200h2V205h-2zM83 206h2V212h-2zM84 205h2V209h-2zM85 194h2V199h-2zM87 199h1V204h-1zM88 201h2V206h-2zM89 209h2V211h-2zM90 205h2V210h-2zM91 206h2V210h-2zM92 202h2V206h-2zM93 203h2V206h-2zM94 205h2V208h-2zM95 202h2V206h-2zM96 206h2V208h-2zM97 204h2V208h-2zM99 192h1V197h-1zM100 205h2V210h-2zM101 204h2V208h-2zM101 194h2V201h-2zM103 205h2V208h-2zM104 200h2V204h-2zM105 213h2V214h-2zM106 196h2V199h-2zM107 210h2V212h-2zM108 213h2V214h-2zM109 196h2V201h-2zM111 198h1V200h-1zM112 205h2V207h-2zM113 204h2V207h-2zM114 207h2V209h-2zM115 205h2V207h-2zM116 196h2V202h-2zM117 207h2V210h-2zM118 208h2V212h-2zM119 208h2V211h-2zM120 205h2V208h-2zM122 205h1V208h-1zM123 202h1V208h-1zM124 204h2V208h-2zM125 210h2V212h-2zM126 204h2V208h-2zM127 202h2V208h-2zM128 203h2V207h-2zM129 204h2V207h-2zM130 207h2V211h-2zM131 204h2V211h-2zM132 195h2V198h-2zM134 214h1V215h-1zM135 207h2V210h-2zM136 212h2V214h-2zM137 205h2V208h-2zM138 201h2V206h-2zM139 199h2V204h-2zM140 207h2V209h-2zM141 207h2V210h-2zM142 207h2V210h-2zM143 196h2V198h-2zM144 207h2V211h-2zM146 212h1V214h-1zM147 205h2V211h-2zM148 204h2V207h-2zM149 207h2V212h-2zM150 211h2V213h-2zM151 207h2V210h-2zM152 205h2V209h-2zM153 203h2V206h-2zM154 214h2V215h-2zM155 206h2V212h-2zM156 200h2V203h-2zM158 204h1V206h-1zM159 205h2V209h-2zM160 199h2V202h-2zM161 204h2V206h-2zM161 192h2V197h-2zM163 202h2V205h-2zM164 208h2V211h-2zM165 88h2V129h-2zM166 196h2V200h-2zM167 197h2V201h-2zM169 214h1V215h-1zM170 206h1V209h-1zM171 207h2V212h-2zM172 203h2V208h-2zM173 198h2V201h-2zM174 210h2V212h-2zM175 203h2V209h-2zM176 208h2V213h-2zM177 191h2V198h-2zM178 201h2V202h-2zM179 208h2V211h-2zM181 187h1V193h-1zM182 196h1V199h-1zM183 205h2V208h-2zM184 208h2V211h-2zM185 207h2V211h-2zM186 207h2V212h-2zM187 202h2V204h-2zM188 206h2V209h-2zM189 200h2V204h-2zM190 200h2V202h-2zM191 207h2V210h-2zM193 204h1V209h-1zM194 201h2V204h-2zM195 203h2V207h-2zM196 201h2V207h-2zM196 193h2V198h-2zM198 199h2V203h-2zM199 207h2V210h-2zM200 209h2V212h-2zM201 205h2V209h-2zM202 202h2V206h-2zM203 196h2V198h-2zM205 211h1V214h-1zM206 207h2V210h-2zM207 196h2V198h-2zM207 192h2V198h-2zM209 205h2V208h-2zM210 206h2V210h-2zM211 205h2V210h-2zM212 196h2V201h-2zM213 205h2V208h-2zM214 205h2V209h-2zM216 203h1V206h-1zM216 193h2V199h-2zM218 204h2V209h-2zM218 193h2V199h-2zM220 203h2V207h-2zM221 200h2V204h-2zM222 206h2V210h-2zM223 199h2V204h-2zM224 197h2V199h-2zM225 201h2V207h-2zM226 213h2V214h-2zM228 207h1V210h-1zM229 204h1V207h-1zM230 203h2V206h-2zM231 204h2V207h-2zM232 203h2V207h-2zM233 207h2V211h-2zM234 197h2V204h-2zM235 202h2V206h-2zM236 203h2V206h-2zM237 202h2V206h-2zM238 198h2V202h-2zM240 204h1V207h-1zM241 208h2V210h-2zM242 211h2V212h-2zM243 214h2V215h-2zM244 201h2V205h-2zM245 207h2V211h-2zM246 197h2V201h-2zM247 206h2V210h-2zM248 205h2V208h-2zM249 200h2V204h-2zM250 202h2V207h-2zM252 197h1V201h-1zM253 196h2V201h-2zM254 204h2V207h-2zM255 205h2V209h-2zM256 207h2V209h-2zM257 194h2V198h-2zM258 204h2V207h-2zM259 200h2V203h-2zM260 193h2V198h-2zM261 202h2V206h-2zM263 206h1V208h-1zM264 209h1V211h-1zM265 199h2V204h-2zM266 202h2V206h-2zM267 203h2V206h-2zM268 203h2V205h-2zM269 203h2V209h-2zM270 202h2V207h-2zM271 201h2V205h-2zM272 205h2V207h-2zM273 203h2V207h-2zM275 203h1V208h-1zM276 201h1V204h-1zM277 203h2V206h-2zM278 207h2V210h-2zM279 199h2V203h-2zM280 199h2V202h-2zM281 196h2V199h-2zM282 204h2V206h-2zM283 192h2V197h-2zM284 206h2V210h-2zM285 198h2V203h-2zM287 208h1V212h-1zM288 203h2V208h-2zM289 205h2V208h-2zM290 197h2V200h-2zM291 202h2V206h-2zM292 206h2V210h-2zM293 200h2V207h-2zM294 205h2V207h-2zM295 212h2V213h-2zM296 203h2V206h-2zM297 204h2V206h-2zM299 205h1V209h-1zM300 205h2V207h-2zM301 197h2V202h-2zM302 206h2V210h-2zM303 196h2V200h-2zM303 192h2V198h-2zM305 197h2V204h-2zM306 204h2V207h-2zM307 199h2V203h-2zM308 206h2V210h-2zM310 202h1V206h-1zM311 196h1V199h-1zM312 197h2V200h-2zM313 207h2V212h-2zM314 201h2V204h-2zM314 191h2V197h-2zM316 199h2V204h-2zM317 201h2V204h-2zM318 209h2V211h-2zM319 205h2V209h-2zM320 202h2V205h-2zM322 202h1V207h-1zM323 209h1V212h-1zM323 164h2V183h-2zM325 206h2V208h-2zM326 197h2V201h-2zM327 196h2V198h-2zM328 201h2V203h-2zM329 202h2V208h-2zM330 200h2V206h-2zM331 203h2V206h-2zM332 211h2V212h-2zM334 207h1V211h-1zM335 207h2V210h-2zM336 208h2V212h-2zM337 201h2V204h-2zM338 202h2V207h-2zM339 203h2V209h-2zM340 207h2V209h-2zM341 206h2V209h-2zM342 208h2V210h-2zM343 203h2V208h-2zM344 193h1V197h-1zM345 196h2V200h-2zM347 202h2V206h-2zM348 207h2V209h-2zM349 205h2V209h-2zM350 199h2V200h-2zM351 198h2V200h-2zM352 194h2V199h-2zM353 197h2V201h-2zM354 197h2V199h-2zM355 207h2V210h-2zM357 206h1V210h-1zM358 209h1V212h-1zM359 202h2V205h-2zM360 205h2V208h-2zM361 201h2V205h-2zM362 201h2V209h-2zM363 198h2V200h-2zM364 203h2V206h-2zM365 205h2V208h-2zM366 199h2V202h-2zM367 204h2V210h-2zM369 207h1V211h-1zM370 197h1V199h-1zM371 201h2V204h-2zM372 206h2V209h-2zM373 205h2V209h-2zM374 206h2V209h-2zM375 198h2V201h-2zM376 199h2V204h-2zM377 203h2V205h-2zM379 203h2V208h-2zM381 203h1V207h-1zM382 198h2V201h-2zM383 200h2V203h-2zM384 198h2V203h-2zM385 201h2V204h-2zM386 203h2V208h-2zM387 204h2V208h-2zM388 203h2V208h-2zM389 204h2V209h-2zM390 201h2V205h-2zM391 206h2V208h-2zM393 199h1V205h-1zM394 198h2V201h-2zM394 192h2V198h-2zM396 205h2V209h-2zM397 204h2V209h-2zM398 202h2V205h-2zM399 208h2V210h-2zM400 205h2V208h-2zM401 201h2V206h-2zM402 204h2V206h-2zM404 205h1V207h-1zM405 204h1V207h-1zM406 205h2V209h-2zM407 206h2V209h-2zM408 197h2V199h-2zM409 197h2V201h-2zM410 207h2V211h-2zM411 205h2V210h-2zM412 205h2V209h-2zM413 205h2V207h-2zM414 199h2V202h-2zM416 200h1V203h-1zM417 198h1V202h-1zM418 199h2V203h-2zM419 199h2V203h-2zM420 200h2V205h-2zM421 203h2V206h-2zM422 204h2V208h-2zM423 196h2V201h-2zM424 206h2V209h-2zM425 198h2V201h-2zM426 205h2V210h-2zM428 205h1V210h-1zM429 200h2V204h-2zM430 204h2V208h-2zM431 206h2V210h-2zM432 197h2V200h-2zM433 204h2V206h-2zM434 203h2V205h-2zM435 204h2V209h-2zM436 201h2V205h-2zM437 205h2V206h-2zM438 194h1V201h-1zM439 200h2V203h-2zM441 201h2V203h-2zM442 200h2V207h-2zM443 201h2V206h-2zM444 206h2V211h-2zM445 202h2V205h-2zM446 201h2V205h-2zM447 200h2V205h-2zM448 206h2V210h-2zM449 205h2V208h-2zM450 192h1V198h-1zM451 199h2V202h-2zM453 204h2V207h-2zM454 213h2V214h-2zM454 196h2V201h-2zM456 201h2V205h-2zM457 199h2V202h-2zM458 200h2V203h-2zM459 201h2V204h-2zM460 205h2V209h-2zM461 205h2V209h-2zM463 204h1V206h-1zM464 199h1V201h-1zM465 199h2V201h-2zM465 192h2V197h-2zM467 198h2V202h-2zM468 208h2V212h-2zM468 189h2V194h-2zM470 206h2V210h-2zM471 201h2V203h-2zM472 199h2V202h-2zM475 202h1V208h-1zM476 203h2V207h-2zM477 206h2V210h-2zM478 207h2V210h-2zM479 208h2V210h-2zM480 201h2V204h-2zM481 203h2V206h-2zM482 196h2V202h-2zM483 204h2V208h-2zM484 204h2V206h-2zM485 198h2V203h-2zM487 208h1V210h-1zM488 207h2V211h-2zM489 205h2V207h-2zM490 206h2V209h-2zM491 207h2V210h-2zM492 205h2V208h-2zM493 197h2V201h-2zM494 209h2V212h-2zM495 207h2V210h-2zM496 203h2V207h-2zM498 201h1V204h-1zM499 209h1V213h-1zM500 199h2V204h-2zM501 203h2V205h-2zM502 209h2V212h-2zM503 210h2V212h-2zM503 193h2V199h-2zM505 207h2V209h-2zM506 192h2V199h-2zM507 202h2V205h-2zM508 207h2V211h-2zM510 207h1V209h-1zM511 204h1V208h-1zM512 198h2V202h-2zM513 210h2V211h-2zM514 199h2V201h-2zM515 206h2V209h-2zM516 204h2V209h-2zM517 197h2V202h-2zM518 202h2V205h-2zM519 205h2V207h-2zM520 207h2V212h-2zM522 203h1V207h-1zM523 206h2V211h-2zM524 208h2V210h-2zM525 209h2V212h-2zM526 207h2V210h-2zM527 212h2V214h-2zM528 210h2V212h-2zM529 207h2V211h-2zM530 206h2V209h-2zM531 210h2V212h-2zM532 202h2V207h-2zM534 208h1V211h-1zM535 211h2V212h-2zM536 204h2V207h-2zM536 179h2V186h-2zM538 214h2V215h-2zM539 201h2V207h-2zM540 210h2V212h-2zM541 207h2V210h-2zM542 209h2V211h-2zM543 207h2V210h-2zM545 203h1V206h-1zM545 194h2V201h-2zM547 205h2V208h-2zM548 202h2V206h-2zM549 208h2V212h-2zM550 206h2V210h-2zM551 205h2V208h-2zM552 202h2V206h-2zM553 211h2V214h-2zM554 200h2V204h-2zM555 207h2V210h-2zM557 199h1V202h-1zM558 209h1V210h-1zM559 209h2V212h-2zM560 203h2V210h-2zM561 203h2V206h-2zM562 207h2V210h-2zM563 214h2V215h-2zM564 198h2V204h-2zM565 208h2V212h-2zM566 208h2V211h-2zM567 210h2V212h-2zM569 211h1V213h-1zM570 214h2V215h-2zM571 208h2V212h-2zM572 206h2V211h-2zM573 205h2V210h-2zM574 208h2V211h-2zM575 193h2V199h-2zM576 208h2V210h-2zM577 202h2V206h-2zM578 203h2V207h-2zM579 205h2V209h-2zM581 204h1V208h-1zM582 205h2V207h-2zM583 204h2V206h-2zM584 199h2V203h-2zM585 205h2V208h-2zM586 204h2V210h-2zM587 204h2V205h-2zM588 202h2V204h-2zM589 203h2V205h-2zM590 210h2V214h-2zM592 207h1V211h-1zM593 212h1V214h-1zM594 204h2V208h-2zM595 208h2V210h-2zM596 207h2V210h-2zM597 208h2V210h-2zM598 204h2V206h-2zM599 208h2V211h-2zM600 204h2V208h-2zM601 199h2V208h-2zM602 207h2V209h-2zM604 192h1V198h-1zM605 204h1V208h-1zM606 209h2V212h-2zM607 198h2V203h-2zM608 205h2V208h-2zM609 207h2V210h-2zM610 206h2V208h-2zM611 214h2V215h-2zM612 209h2V212h-2zM613 208h2V211h-2zM614 209h2V211h-2zM616 210h1V212h-1zM617 213h2V214h-2zM618 208h2V211h-2zM619 208h2V211h-2zM620 200h2V205h-2zM621 207h2V209h-2zM622 206h2V209h-2zM623 199h2V202h-2zM624 210h2V212h-2zM625 206h2V210h-2zM626 207h2V213h-2zM628 207h1V209h-1zM629 202h2V206h-2zM629 194h2V199h-2zM631 208h2V212h-2zM632 209h2V211h-2zM633 199h2V201h-2zM634 208h2V211h-2zM636 209h2V212h-2zM637 204h2V206h-2zM638 203h2V207h-2zM639 187h2V191h-2zM641 209h2V212h-2zM642 205h2V208h-2zM643 206h2V209h-2zM645 207h2V211h-2zM646 207h2V211h-2zM647 205h2V210h-2zM648 203h2V205h-2zM649 211h2V213h-2zM651 207h1V211h-1zM652 207h1V211h-1zM653 207h2V212h-2zM654 210h2V213h-2zM655 206h2V209h-2zM656 208h2V210h-2zM657 208h2V211h-2zM658 208h2V211h-2zM659 214h2V215h-2zM660 207h2V210h-2zM661 205h2V210h-2zM663 207h1V212h-1zM664 206h2V208h-2zM665 211h2V213h-2zM666 202h2V205h-2zM667 212h2V215h-2zM668 209h2V211h-2zM669 208h2V212h-2zM670 191h2V197h-2zM671 208h2V213h-2zM672 200h2V204h-2zM673 211h2V213h-2zM675 200h1V203h-1zM676 207h2V210h-2zM677 207h2V211h-2zM678 207h2V210h-2zM679 200h2V204h-2zM680 198h2V203h-2zM681 210h2V214h-2zM682 202h2V206h-2zM683 207h2V210h-2zM684 209h2V213h-2zM685 212h2V213h-2zM687 208h1V213h-1zM688 200h2V206h-2zM689 207h2V210h-2zM690 207h2V212h-2zM691 206h2V208h-2zM692 209h2V212h-2zM693 201h2V205h-2zM694 209h2V211h-2zM695 213h2V214h-2zM696 201h2V204h-2zM698 206h1V210h-1zM699 210h1V212h-1zM701 210h2V212h-2zM702 207h2V210h-2zM703 207h2V210h-2zM703 197h2V201h-2zM705 207h2V209h-2zM706 207h2V211h-2zM707 207h2V209h-2zM708 197h1V203h-1zM709 208h2V212h-2zM711 208h2V211h-2zM712 209h2V211h-2zM713 203h2V207h-2zM714 204h2V207h-2zM715 209h2V212h-2zM716 205h2V210h-2zM717 210h2V212h-2zM718 208h2V212h-2zM719 207h2V210h-2zM720 202h2V209h-2zM722 206h1V208h-1zM723 208h2V211h-2zM724 210h2V213h-2zM725 206h2V210h-2zM726 207h2V210h-2zM727 207h2V210h-2zM728 206h2V210h-2zM729 206h2V208h-2zM730 205h2V208h-2zM731 205h2V208h-2zM732 208h2V211h-2zM734 206h1V208h-1zM735 209h2V211h-2zM736 213h2V214h-2zM737 201h2V205h-2zM738 204h2V209h-2zM739 209h2V213h-2zM740 211h2V213h-2zM741 205h2V208h-2zM742 203h2V208h-2zM743 208h2V210h-2zM744 194h2V199h-2zM746 209h1V210h-1zM747 210h2V212h-2zM748 201h2V205h-2zM749 208h2V211h-2zM750 210h2V211h-2zM751 208h2V211h-2zM752 201h2V204h-2zM753 204h2V206h-2zM754 208h2V211h-2zM755 196h1V200h-1zM756 202h2V206h-2zM758 204h2V208h-2zM759 211h2V213h-2zM760 203h2V208h-2zM761 208h2V211h-2zM762 215h2V216h-2zM762 195h2V200h-2zM765 202h2V205h-2zM766 207h2V210h-2zM767 205h2V208h-2zM769 209h1V211h-1zM770 205h2V209h-2zM771 204h2V207h-2zM772 211h2V213h-2zM773 206h2V208h-2zM774 200h2V204h-2zM775 211h2V213h-2zM776 205h2V211h-2zM777 206h2V209h-2zM778 209h2V213h-2zM779 210h2V211h-2zM781 206h1V209h-1zM781 199h2V203h-2zM783 209h2V213h-2zM784 203h2V207h-2zM785 207h2V209h-2zM786 201h2V207h-2zM787 204h2V208h-2zM788 208h2V210h-2zM789 206h2V209h-2zM790 211h2V213h-2zM792 210h1V213h-1zM793 208h1V213h-1zM794 208h2V211h-2zM795 205h2V208h-2zM796 211h2V213h-2zM796 195h2V200h-2zM798 210h2V213h-2zM799 210h2V213h-2zM800 201h2V205h-2zM801 205h2V210h-2zM802 200h2V204h-2zM804 201h1V203h-1zM805 208h2V212h-2zM806 210h2V213h-2zM807 200h2V202h-2zM808 209h2V211h-2zM809 214h2V215h-2zM810 205h2V208h-2zM811 207h2V210h-2zM812 209h2V212h-2zM813 208h2V211h-2zM814 206h2V209h-2zM816 207h1V210h-1zM817 205h2V208h-2zM818 213h2V214h-2zM819 209h2V211h-2zM820 205h2V209h-2zM821 206h2V210h-2zM822 199h2V204h-2zM823 210h2V211h-2zM824 208h2V211h-2zM825 215h2V216h-2zM826 202h2V205h-2zM828 210h1V213h-1zM829 206h2V209h-2zM830 208h2V212h-2zM831 207h2V210h-2zM832 205h2V208h-2zM833 208h2V213h-2zM834 207h2V211h-2zM835 211h2V213h-2zM836 200h2V207h-2zM837 209h2V211h-2zM839 210h1V213h-1zM840 210h1V212h-1zM841 203h2V206h-2zM842 203h2V206h-2zM843 202h2V206h-2zM844 210h2V212h-2zM845 209h2V211h-2zM846 202h2V205h-2zM847 209h2V212h-2zM848 209h2V211h-2zM849 208h2V212h-2zM851 210h1V213h-1zM852 202h2V206h-2zM853 203h2V208h-2zM854 205h2V209h-2zM856 201h2V204h-2zM857 202h2V205h-2zM858 199h2V204h-2zM859 213h2V214h-2zM860 210h2V212h-2zM861 206h2V208h-2zM863 208h1V212h-1zM864 207h2V213h-2zM865 208h2V211h-2zM866 206h2V211h-2zM867 204h2V207h-2zM868 205h2V207h-2zM869 209h2V212h-2zM871 209h2V211h-2zM872 208h2V213h-2zM873 207h2V210h-2zM875 207h1V209h-1zM876 207h2V210h-2zM877 210h2V213h-2zM878 213h2V215h-2zM879 201h2V206h-2zM880 210h2V213h-2zM881 201h2V203h-2zM882 204h2V209h-2zM883 204h2V211h-2zM884 210h2V212h-2zM886 202h1V205h-1zM887 210h1V212h-1zM888 208h2V211h-2zM889 207h2V210h-2zM890 209h2V212h-2zM891 207h2V211h-2zM892 209h2V211h-2zM893 210h2V212h-2zM894 209h2V211h-2zM896 206h2V212h-2zM898 207h1V212h-1zM899 209h2V211h-2zM900 207h2V212h-2zM901 210h2V214h-2zM902 212h2V214h-2zM903 205h2V209h-2zM904 206h2V209h-2zM905 207h2V210h-2zM906 211h2V213h-2zM907 208h2V210h-2zM908 209h2V212h-2zM910 202h1V203h-1zM911 208h2V212h-2zM912 204h2V209h-2zM913 210h2V213h-2zM914 210h2V212h-2zM915 209h2V212h-2zM916 198h2V201h-2zM917 202h2V207h-2zM918 207h2V210h-2zM919 210h2V213h-2zM920 206h2V208h-2zM922 209h1V213h-1zM923 201h2V204h-2zM924 214h2V215h-2zM925 206h2V209h-2zM926 205h2V208h-2zM927 215h2V216h-2zM928 200h2V204h-2zM929 206h2V209h-2zM930 212h2V213h-2zM931 209h2V212h-2zM933 208h1V211h-1zM934 209h1V212h-1zM935 207h2V210h-2zM936 207h2V210h-2zM937 207h2V210h-2zM938 201h2V206h-2zM939 206h2V210h-2zM940 205h1V210h-1z"/>
<path class="bar" fill="#00008b" d="M67 248h2V432h-2zM68 248h2V432h-2zM69 249h2V432h-2zM70 249h2V432h-2zM71 249h2V432h-2zM72 249h2V432h-2zM73 249h2V432h-2zM75 249h1V432h-1zM76 249h1V432h-1zM77 249h2V432h-2zM78 249h2V432h-2zM79 249h2V432h-2zM80 249h2V432h-2zM81 249h2V432h-2zM82 249h2V432h-2zM83 250h2V432h-2zM84 250h2V432h-2zM85 250h2V432h-2zM87 250h1V432h-1zM88 250h2V432h-2zM89 250h2V432h-2zM90 250h2V432h-2zM91 250h2V432h-2zM92 250h2V432h-2zM93 250h2V432h-2zM94 250h2V432h-2zM95 250h2V432h-2zM96 250h2V432h-2zM97 250h2V432h-2zM99 250h1V432h-1zM100 250h2V432h-2zM101 250h2V432h-2zM102 250h2V432h-2zM103 250h2V432h-2zM104 250h2V432h-2zM105 250h2V432h-2zM106 250h2V432h-2zM107 250h2V432h-2zM108 251h2V432h-2zM109 251h2V432h-2zM111 251h1V432h-1zM112 251h2V432h-2zM113 251h2V432h-2zM114 251h2V432h-2zM115 251h2V432h-2zM116 251h2V432h-2zM117 251h2V432h-2zM118 251h2V432h-2zM119 251h2V432h-2zM120 251h2V432h-2zM122 251h1V432h-1zM123 251h1V432h-1zM124 251h2V432h-2zM125 251h2V432h-2zM126 251h2V432h-2zM127 251h2V432h-2zM128 251h2V432h-2zM129 251h2V432h-2zM130 251h2V432h-2zM131 251h2V432h-2zM132 251h2V432h-2zM134 251h1V432h-1zM135 251h2V432h-2zM136 251h2V432h-2zM137 251h2V432h-2zM138 251h2V432h-2zM139 252h2V432h-2zM140 252h2V432h-2zM141 252h2V432h-2zM142 251h2V432h-2zM143 252h2V432h-2zM144 251h2V432h-2zM146 251h1V432h-1zM147 251h2V432h-2zM148 252h2V432h-2zM149 252h2V432h-2zM150 251h2V432h-2zM151 251h2V432h-2zM152 251h2V432h-2zM153 251h2V432h-2zM154 251h2V432h-2zM155 252h2V432h-2zM156 252h2V432h-2zM158 252h1V432h-1zM159 252h2V432h-2zM160 252h2V432h-2zM161 252h2V432h-2zM162 252h2V432h-2zM163 252h2V432h-2zM164 252h2V432h-2zM165 252h2V432h-2zM166 252h2V432h-2zM167 251h2V432h-2zM169 252h1V432h-1zM170 252h1V432h-1zM171 252h2V432h-2zM172 252h2V432h-2zM173 252h2V432h-2zM174 251h2V432h-2zM175 252h2V432h-2zM176 251h2V432h-2zM177 252h2V432h-2zM178 252h2V432h-2zM179 252h2V432h-2zM181 252h1V432h-1zM182 252h1V432h-1zM183 252h2V432h-2zM184 252h2V432h-2zM185 251h2V432h-2zM186 252h2V432h-2zM187 252h2V432h-2zM188 251h2V432h-2zM189 252h2V432h-2zM190 252h2V432h-2zM191 253h2V432h-2zM193 253h1V432h-1zM194 252h2V432h-2zM195 252h2V432h-2zM196 252h2V432h-2zM197 252h2V432h-2zM198 252h2V432h-2zM199 252h2V432h-2zM200 252h2V432h-2zM201 253h2V432h-2zM202 253h2V432h-2zM203 251h2V432h-2zM205 252h1V432h-1zM206 253h2V432h-2zM207 253h2V432h-2zM208 252h2V432h-2zM209 252h2V432h-2zM210 253h2V432h-2zM211 253h2V432h-2zM212 252h2V432h-2zM213 252h2V432h-2zM214 253h2V432h-2zM216 253h1V432h-1zM217 252h1V432h-1zM218 253h2V432h-2zM219 253h2V432h-2zM220 252h2V432h-2zM221 252h2V432h-2zM222 252h2V432h-2zM223 252h2V432h-2zM224 253h2V432h-2zM225 252h2V432h-2zM226 252h2V432h-2zM228 252h1V432h-1zM229 252h1V432h-1zM230 252h2V432h-2zM231 252h2V432h-2zM232 252h2V432h-2zM233 253h2V432h-2zM234 252h2V432h-2zM235 252h2V432h-2zM236 252h2V432h-2zM237 253h2V432h-2zM238 253h2V432h-2zM240 253h1V432h-1zM241 252h2V432h-2zM242 252h2V432h-2zM243 253h2V432h-2zM244 253h2V432h-2zM245 252h2V432h-2zM246 253h2V432h-2zM247 253h2V432h-2zM248 253h2V432h-2zM249 253h2V432h-2zM250 252h2V432h-2zM252 252h1V432h-1zM253 252h2V432h-2zM254 252h2V432h-2zM255 253h2V432h-2zM256 252h2V432h-2zM257 253h2V432h-2zM258 252h2V432h-2zM259 252h2V432h-2zM260 252h2V432h-2zM261 252h2V432h-2zM263 253h1V432h-1zM264 253h1V432h-1zM265 252h2V432h-2zM266 253h2V432h-2zM267 252h2V432h-2zM268 252h2V432h-2zM269 252h2V432h-2zM270 252h2V432h-2zM271 252h2V432h-2zM272 253h2V432h-2zM273 253h2V432h-2zM275 252h1V432h-1zM276 253h1V432h-1zM277 252h2V432h-2zM278 253h2V432h-2zM279 252h2V432h-2zM280 253h2V432h-2zM281 253h2V432h-2zM282 253h2V432h-2zM283 253h2V432h-2zM284 253h2V432h-2zM285 253h2V432h-2zM287 252h1V432h-1zM288 253h2V432h-2zM289 253h2V432h-2zM290 253h2V432h-2zM291 252h2V432h-2zM292 253h2V432h-2zM293 253h2V432h-2zM294 253h2V432h-2zM295 252h2V432h-2zM296 254h2V432h-2zM297 254h2V432h-2zM299 253h1V432h-1zM300 253h2V432h-2zM301 252h2V432h-2zM302 254h2V432h-2zM303 253h2V432h-2zM304 253h2V432h-2zM305 253h2V432h-2zM306 252h2V432h-2zM307 253h2V432h-2zM308 253h2V432h-2zM310 253h1V432h-1zM311 252h1V432h-1zM312 254h2V432h-2zM313 253h2V432h-2zM314 253h2V432h-2zM315 252h2V432h-2zM316 253h2V432h-2zM317 253h2V432h-2zM318 253h2V432h-2zM319 253h2V432h-2zM320 253h2V432h-2zM322 252h1V432h-1zM323 253h1V432h-1zM324 253h2V432h-2zM325 253h2V432h-2zM326 253h2V432h-2zM327 253h2V432h-2zM328 253h2V432h-2zM329 254h2V432h-2zM330 253h2V432h-2zM331 254h2V432h-2zM332 254h2V432h-2zM334 252h1V432h-1zM335 253h2V432h-2zM336 253h2V432h-2zM337 253h2V432h-2zM338 253h2V432h-2zM339 253h2V432h-2zM340 254h2V432h-2zM341 252h2V432h-2zM342 253h2V432h-2zM343 253h2V432h-2zM344 252h2V432h-2zM346 253h1V432h-1zM347 253h2V432h-2zM348 254h2V432h-2zM349 253h2V432h-2zM350 253h2V432h-2zM351 254h2V432h-2zM352 253h2V432h-2zM353 252h2V432h-2zM354 254h2V432h-2zM355 253h2V432h-2zM357 253h1V432h-1zM358 254h1V432h-1zM359 253h2V432h-2zM360 254h2V432h-2zM361 253h2V432h-2zM362 253h2V432h-2zM363 253h2V432h-2zM364 253h2V432h-2zM365 254h2V432h-2zM366 253h2V432h-2zM367 253h2V432h-2zM369 253h1V432h-1zM370 254h1V432h-1zM371 253h2V432h-2zM372 254h2V432h-2zM373 253h2V432h-2zM374 254h2V432h-2zM375 253h2V432h-2zM376 253h2V432h-2zM377 254h2V432h-2zM378 253h2V432h-2zM379 254h2V432h-2zM381 253h1V432h-1zM382 253h2V432h-2zM383 253h2V432h-2zM384 253h2V432h-2zM385 253h2V432h-2zM386 253h2V432h-2zM387 253h2V432h-2zM388 254h2V432h-2zM389 253h2V432h-2zM390 253h2V432h-2zM391 253h2V432h-2zM393 253h1V432h-1zM394 254h2V432h-2zM395 254h2V432h-2zM396 253h2V432h-2zM397 253h2V432h-2zM398 254h2V432h-2zM399 253h2V432h-2zM400 253h2V432h-2zM401 254h2V432h-2zM402 254h2V432h-2zM404 254h1V432h-1zM405 254h1V432h-1zM406 253h2V432h-2zM407 254h2V432h-2zM408 254h2V432h-2zM409 254h2V432h-2zM410 254h2V432h-2zM411 253h2V432h-2zM412 253h2V432h-2zM413 254h2V432h-2zM414 254h2V432h-2zM416 254h1V432h-1zM417 253h1V432h-1zM418 254h2V432h-2zM419 254h2V432h-2zM420 254h2V432h-2zM421 253h2V432h-2zM422 254h2V432h-2zM423 253h2V432h-2zM424 253h2V432h-2zM425 254h2V432h-2zM426 253h2V432h-2zM428 254h1V432h-1zM429 254h2V432h-2zM430 253h2V432h-2zM431 254h2V432h-2zM432 253h2V432h-2zM433 254h2V432h-2zM434 253h2V432h-2zM435 254h2V432h-2zM436 253h2V432h-2zM437 254h2V432h-2zM438 255h2V432h-2zM440 254h1V432h-1zM441 254h2V432h-2zM442 254h2V432h-2zM443 253h2V432h-2zM444 254h2V432h-2zM445 255h2V432h-2zM446 253h2V432h-2zM447 254h2V432h-2zM448 254h2V432h-2zM449 254h2V432h-2zM451 253h1V432h-1zM452 254h1V432h-1zM453 254h2V432h-2zM454 254h2V432h-2zM455 253h2V432h-2zM456 255h2V432h-2zM457 254h2V432h-2zM458 254h2V432h-2zM459 254h2V432h-2zM460 254h2V432h-2zM461 254h2V432h-2zM463 255h1V432h-1zM464 254h1V432h-1zM465 255h2V432h-2zM466 254h2V432h-2zM467 254h2V432h-2zM468 254h2V432h-2zM469 254h2V432h-2zM470 254h2V432h-2zM471 254h2V432h-2zM472 254h2V432h-2zM473 254h2V432h-2zM475 253h1V432h-1zM476 254h2V432h-2zM477 254h2V432h-2zM478 254h2V432h-2zM479 255h2V432h-2zM480 254h2V432h-2zM481 254h2V432h-2zM482 254h2V432h-2zM483 254h2V432h-2zM484 254h2V432h-2zM485 255h2V432h-2zM487 254h1V432h-1zM488 255h2V432h-2zM489 255h2V432h-2zM490 254h2V432h-2zM491 255h2V432h-2zM492 254h2V432h-2zM493 254h2V432h-2zM494 255h2V432h-2zM495 254h2V432h-2zM496 255h2V432h-2zM498 254h1V432h-1zM499 255h1V432h-1zM500 254h2V432h-2zM501 254h2V432h-2zM502 254h2V432h-2zM503 255h2V432h-2zM504 255h2V432h-2zM505 254h2V432h-2zM506 254h2V432h-2zM507 254h2V432h-2zM508 255h2V432h-2zM510 254h1V432h-1zM511 255h1V432h-1zM512 255h2V432h-2zM513 254h2V432h-2zM514 254h2V432h-2zM515 255h2V432h-2zM516 255h2V432h-2zM517 255h2V432h-2zM518 255h2V432h-2zM519 254h2V432h-2zM520 254h2V432h-2zM522 255h1V432h-1zM523 255h2V432h-2zM524 255h2V432h-2zM525 254h2V432h-2zM526 255h2V432h-2zM527 255h2V432h-2zM528 255h2V432h-2zM529 255h2V432h-2zM530 255h2V432h-2zM531 255h2V432h-2zM532 254h2V432h-2zM534 255h1V432h-1zM535 254h2V432h-2zM536 254h2V432h-2zM537 255h2V432h-2zM538 255h2V432h-2zM539 255h2V432h-2zM540 254h2V432h-2zM541 255h2V432h-2zM542 255h2V432h-2zM543 255h2V432h-2zM545 254h1V432h-1zM546 254h1V432h-1zM547 255h2V432h-2zM548 254h2V432h-2zM549 255h2V432h-2zM550 254h2V432h-2zM551 255h2V432h-2zM552 256h2V432h-2zM553 255h2V432h-2zM554 254h2V432h-2zM555 255h2V432h-2zM557 255h1V432h-1zM558 255h1V432h-1zM559 255h2V432h-2zM560 255h2V432h-2zM561 255h2V432h-2zM562 255h2V432h-2zM563 256h2V432h-2zM564 255h2V432h-2zM565 255h2V432h-2zM566 255h2V432h-2zM567 255h2V432h-2zM569 255h1V432h-1zM570 255h2V432h-2zM571 255h2V432h-2zM572 256h2V432h-2zM573 256h2V432h-2zM574 256h2V432h-2zM575 255h2V432h-2zM576 255h2V432h-2zM577 255h2V432h-2zM578 255h2V432h-2zM579 255h2V432h-2zM581 255h1V432h-1zM582 255h2V432h-2zM583 256h2V432h-2zM584 256h2V432h-2zM585 256h2V432h-2zM586 255h2V432h-2zM587 255h2V432h-2zM588 255h2V432h-2zM589 255h2V432h-2zM590 255h2V432h-2zM592 256h1V432h-1zM593 256h1V432h-1zM594 255h2V432h-2zM595 255h2V432h-2zM596 256h2V432h-2zM597 256h2V432h-2zM598 255h2V432h-2zM599 256h2V432h-2zM600 255h2V432h-2zM601 256h2V432h-2zM602 256h2V432h-2zM604 256h1V432h-1zM605 256h1V432h-1zM606 255h2V432h-2zM607 256h2V432h-2zM608 257h2V432h-2zM609 255h2V432h-2zM610 256h2V432h-2zM611 256h2V432h-2zM612 256h2V432h-2zM613 257h2V432h-2zM614 256h2V432h-2zM616 256h1V432h-1zM617 257h2V432h-2zM618 255h2V432h-2zM619 257h2V432h-2zM620 256h2V432h-2zM621 256h2V432h-2zM622 256h2V432h-2zM623 256h2V432h-2zM624 256h2V432h-2zM625 256h2V432h-2zM626 256h2V432h-2zM628 257h1V432h-1zM629 257h2V432h-2zM630 257h2V432h-2zM631 257h2V432h-2zM632 257h2V432h-2zM633 256h2V432h-2zM634 256h2V432h-2zM635 257h2V432h-2zM636 256h2V432h-2zM637 256h2V432h-2zM638 257h2V432h-2zM640 257h1V432h-1zM641 257h2V432h-2zM642 257h2V432h-2zM643 257h2V432h-2zM644 257h2V432h-2zM645 257h2V432h-2zM646 257h2V432h-2zM647 256h2V432h-2zM648 257h2V432h-2zM649 257h2V432h-2zM651 257h1V432h-1zM652 256h1V432h-1zM653 257h2V432h-2zM654 257h2V432h-2zM655 257h2V432h-2zM656 258h2V432h-2zM657 257h2V432h-2zM658 257h2V432h-2zM659 258h2V432h-2zM660 257h2V432h-2zM661 257h2V432h-2zM663 258h1V432h-1zM664 258h2V432h-2zM665 257h2V432h-2zM666 258h2V432h-2zM667 257h2V432h-2zM668 257h2V432h-2zM669 257h2V432h-2zM670 257h2V432h-2zM671 257h2V432h-2zM672 258h2V432h-2zM673 257h2V432h-2zM675 257h1V432h-1zM676 257h2V432h-2zM677 257h2V432h-2zM678 257h2V432h-2zM679 258h2V432h-2zM680 258h2V432h-2zM681 257h2V432h-2zM682 258h2V432h-2zM683 257h2V432h-2zM684 258h2V432h-2zM685 258h2V432h-2zM687 257h1V432h-1zM688 258h2V432h-2zM689 258h2V432h-2zM690 258h2V432h-2zM691 257h2V432h-2zM692 258h2V432h-2zM693 258h2V432h-2zM694 259h2V432h-2zM695 258h2V432h-2zM696 258h2V432h-2zM698 259h1V432h-1zM699 259h1V432h-1zM700 259h2V432h-2zM701 258h2V432h-2zM702 259h2V432h-2zM703 259h2V432h-2zM704 258h2V432h-2zM705 258h2V432h-2zM706 259h2V432h-2zM707 258h2V432h-2zM708 259h2V432h-2zM710 259h1V432h-1zM711 259h2V432h-2zM712 259h2V432h-2zM713 259h2V432h-2zM714 258h2V432h-2zM715 258h2V432h-2zM716 259h2V432h-2zM717 259h2V432h-2zM718 258h2V432h-2zM719 258h2V432h-2zM720 258h2V432h-2zM722 259h1V432h-1zM723 259h2V432h-2zM724 258h2V432h-2zM725 259h2V432h-2zM726 259h2V432h-2zM727 259h2V432h-2zM728 258h2V432h-2zM729 258h2V432h-2zM730 259h2V432h-2zM731 259h2V432h-2zM732 259h2V432h-2zM734 260h1V432h-1zM735 259h2V432h-2zM736 259h2V432h-2zM737 259h2V432h-2zM738 260h2V432h-2zM739 260h2V432h-2zM740 259h2V432h-2zM741 260h2V432h-2zM742 259h2V432h-2zM743 260h2V432h-2zM745 260h1V432h-1zM746 260h1V432h-1zM747 260h2V432h-2zM748 259h2V432h-2zM749 260h2V432h-2zM750 259h2V432h-2zM751 260h2V432h-2zM752 259h2V432h-2zM753 259h2V432h-2zM754 260h2V432h-2zM755 259h2V432h-2zM757 260h1V432h-1zM758 260h2V432h-2zM759 260h2V432h-2zM760 260h2V432h-2zM761 260h2V432h-2zM762 259h2V432h-2zM763 259h2V432h-2zM764 260h2V432h-2zM765 259h2V432h-2zM766 260h2V432h-2zM767 259h2V432h-2zM769 259h1V432h-1zM770 261h2V432h-2zM771 260h2V432h-2zM772 260h2V432h-2zM773 260h2V432h-2zM774 261h2V432h-2zM775 260h2V432h-2zM776 260h2V432h-2zM777 260h2V432h-2zM778 261h2V432h-2zM779 259h2V432h-2zM781 261h1V432h-1zM782 260h2V432h-2zM783 260h2V432h-2zM784 261h2V432h-2zM785 260h2V432h-2zM786 260h2V432h-2zM787 260h2V432h-2zM788 260h2V432h-2zM789 261h2V432h-2zM790 261h2V432h-2zM792 260h1V432h-1zM793 260h1V432h-1zM794 260h2V432h-2zM795 261h2V432h-2zM796 260h2V432h-2zM797 261h2V432h-2zM798 261h2V432h-2zM799 261h2V432h-2zM800 260h2V432h-2zM801 260h2V432h-2zM802 261h2V432h-2zM804 261h1V432h-1zM805 261h2V432h-2zM806 261h2V432h-2zM807 261h2V432h-2zM808 261h2V432h-2zM809 261h2V432h-2zM810 261h2V432h-2zM811 260h2V432h-2zM812 261h2V432h-2zM813 261h2V432h-2zM814 262h2V432h-2zM816 262h1V432h-1zM817 261h2V432h-2zM818 261h2V432h-2zM819 262h2V432h-2zM820 261h2V432h-2zM821 261h2V432h-2zM822 261h2V432h-2zM823 261h2V432h-2zM824 262h2V432h-2zM825 262h2V432h-2zM826 262h2V432h-2zM828 262h1V432h-1zM829 262h2V432h-2zM830 261h2V432h-2zM831 261h2V432h-2zM832 261h2V432h-2zM833 262h2V432h-2zM834 261h2V432h-2zM835 262h2V432h-2zM836 262h2V432h-2zM837 262h2V432h-2zM839 262h1V432h-1zM840 261h1V432h-1zM841 262h2V432h-2zM842 261h2V432h-2zM843 262h2V432h-2zM844 262h2V432h-2zM845 261h2V432h-2zM846 263h2V432h-2zM847 262h2V432h-2zM848 262h2V432h-2zM849 263h2V432h-2zM851 262h1V432h-1zM852 262h2V432h-2zM853 263h2V432h-2zM854 262h2V432h-2zM855 263h2V432h-2zM856 262h2V432h-2zM857 262h2V432h-2zM858 263h2V432h-2zM859 262h2V432h-2zM860 262h2V432h-2zM861 263h2V432h-2zM863 263h1V432h-1zM864 262h2V432h-2zM865 262h2V432h-2zM866 263h2V432h-2zM867 262h2V432h-2zM868 263h2V432h-2zM869 262h2V432h-2zM870 263h2V432h-2zM871 263h2V432h-2zM872 263h2V432h-2zM873 263h2V432h-2zM875 263h1V432h-1zM876 263h2V432h-2zM877 264h2V432h-2zM878 264h2V432h-2zM879 263h2V432h-2zM880 264h2V432h-2zM881 263h2V432h-2zM882 263h2V432h-2zM883 263h2V432h-2zM884 264h2V432h-2zM886 264h1V432h-1zM887 263h1V432h-1zM888 264h2V432h-2zM889 263h2V432h-2zM890 263h2V432h-2zM891 264h2V432h-2zM892 264h2V432h-2zM893 263h2V432h-2zM894 263h2V432h-2zM895 264h2V432h-2zM896 264h2V432h-2zM898 264h1V432h-1zM899 264h2V432h-2zM900 264h2V432h-2zM901 264h2V432h-2zM902 265h2V432h-2zM903 264h2V432h-2zM904 265h2V432h-2zM905 264h2V432h-2zM906 264h2V432h-2zM907 264h2V432h-2zM908 265h2V432h-2zM910 265h1V432h-1zM911 265h2V432h-2zM912 265h2V432h-2zM913 264h2V432h-2zM914 265h2V432h-2zM915 265h2V432h-2zM916 265h2V432h-2zM917 265h2V432h-2zM918 265h2V432h-2zM919 265h2V432h-2zM920 266h2V432h-2zM922 266h1V432h-1zM923 266h2V432h-2zM924 266h2V432h-2zM925 266h2V432h-2zM926 267h2V432h-2zM927 266h2V432h-2zM928 267h2V432h-2zM929 266h2V432h-2zM930 266h2V432h-2zM931 268h2V432h-2zM933 267h1V432h-1zM934 267h1V432h-1zM935 268h2V432h-2zM936 268h2V432h-2zM937 268h2V432h-2zM938 269h2V432h-2zM939 269h1V432h-1z"/>
<path class="bar" fill="#00008b" d="M67 640h2V648h-2zM67 636h2V648h-2zM69 640h2V648h-2zM70 640h2V648h-2zM71 644h2V648h-2zM72 641h2V648h-2zM73 645h2V648h-2zM75 637h1V648h-1zM76 643h1V648h-1zM77 642h2V648h-2zM78 645h2V648h-2zM79 642h2V648h-2zM80 647h2V648h-2zM81 644h2V648h-2zM82 640h2V648h-2zM83 645h2V648h-2zM84 642h2V648h-2zM85 634h2V648h-2zM87 637h1V648h-1zM88 639h2V648h-2zM89 644h2V648h-2zM90 644h2V648h-2zM91 643h2V648h-2zM92 640h2V648h-2zM93 641h2V648h-2zM94 642h2V648h-2zM95 640h2V648h-2zM96 642h2V648h-2zM97 642h2V648h-2zM99 633h1V648h-1zM100 643h2V648h-2zM101 641h2V648h-2zM101 636h2V648h-2zM103 642h2V648h-2zM104 640h2V648h-2zM105 647h2V648h-2zM106 636h2V648h-2zM107 646h2V648h-2zM108 647h2V648h-2zM109 636h2V648h-2zM111 636h1V648h-1zM112 641h2V648h-2zM113 643h2V648h-2zM114 642h2V648h-2zM115 641h2V648h-2zM116 637h2V648h-2zM117 643h2V648h-2zM118 645h2V648h-2zM119 644h2V648h-2zM120 641h2V648h-2zM122 641h1V648h-1zM123 642h1V648h-1zM124 642h2V648h-2zM125 645h2V648h-2zM126 642h2V648h-2zM127 642h2V648h-2zM128 642h2V648h-2zM129 641h2V648h-2zM130 643h2V648h-2zM131 644h2V648h-2zM132 634h2V648h-2zM134 647h1V648h-1zM135 643h2V648h-2zM136 646h2V648h-2zM137 642h2V648h-2zM138 640h2V648h-2zM139 638h2V648h-2zM140 643h2V648h-2zM141 643h2V648h-2zM142 643h2V648h-2zM143 634h2V648h-2zM144 644h2V648h-2zM146 646h1V648h-1zM147 644h2V648h-2zM148 641h2V648h-2zM149 645h2V648h-2zM150 646h2V648h-2zM151 643h2V648h-2zM152 642h2V648h-2zM153 640h2V648h-2zM154 647h2V648h-2zM155 645h2V648h-2zM156 638h2V648h-2zM158 640h1V648h-1zM159 642h2V648h-2zM160 636h2V648h-2zM161 641h2V648h-2zM161 633h2V648h-2zM163 640h2V648h-2zM164 643h2V648h-2zM165 584h2V648h-2zM166 635h2V648h-2zM167 634h2V648h-2zM169 647h1V648h-1zM170 643h1V648h-1zM171 644h2V648h-2zM172 642h2V648h-2zM173 635h2V648h-2zM174 645h2V648h-2zM175 643h2V648h-2zM176 645h2V648h-2zM177 634h2V648h-2zM178 638h2V648h-2zM179 644h2V648h-2zM181 631h1V648h-1zM182 636h1V648h-1zM183 641h2V648h-2zM184 644h2V648h-2zM185 644h2V648h-2zM186 645h2V648h-2zM187 639h2V648h-2zM188 643h2V648h-2zM189 637h2V648h-2zM190 638h2V648h-2zM191 643h2V648h-2zM193 642h1V648h-1zM194 638h2V648h-2zM195 641h2V648h-2zM196 640h2V648h-2zM196 634h2V648h-2zM198 638h2V648h-2zM199 643h2V648h-2zM200 645h2V648h-2zM201 643h2V648h-2zM202 640h2V648h-2zM203 633h2V648h-2zM205 646h1V648h-1zM206 644h2V648h-2zM207 633h2V648h-2zM207 633h2V648h-2zM209 642h2V648h-2zM210 643h2V648h-2zM211 643h2V648h-2zM212 635h2V648h-2zM213 642h2V648h-2zM214 642h2V648h-2zM216 639h1V648h-1zM216 634h2V648h-2zM218 642h2V648h-2zM218 634h2V648h-2zM220 640h2V648h-2zM221 640h2V648h-2zM222 643h2V648h-2zM223 638h2V648h-2zM224 636h2V648h-2zM225 641h2V648h-2zM226 647h2V648h-2zM228 644h1V648h-1zM229 640h1V648h-1zM230 641h2V648h-2zM231 641h2V648h-2zM232 641h2V648h-2zM233 644h2V648h-2zM234 638h2V648h-2zM235 640h2V648h-2zM236 641h2V648h-2zM237 640h2V648h-2zM238 637h2V648h-2zM240 640h1V648h-1zM241 643h2V648h-2zM242 644h2V648h-2zM243 647h2V648h-2zM244 642h2V648h-2zM245 644h2V648h-2zM246 636h2V648h-2zM247 643h2V648h-2zM248 642h2V648h-2zM249 639h2V648h-2zM250 640h2V648h-2zM252 637h1V648h-1zM253 636h2V648h-2zM254 642h2V648h-2zM255 641h2V648h-2zM256 642h2V648h-2zM257 634h2V648h-2zM258 640h2V648h-2zM259 638h2V648h-2zM260 634h2V648h-2zM261 640h2V648h-2zM263 642h1V648h-1zM264 644h1V648h-1zM265 639h2V648h-2zM266 640h2V648h-2zM267 640h2V648h-2zM268 642h2V648h-2zM269 643h2V648h-2zM270 641h2V648h-2zM271 640h2V648h-2zM272 641h2V648h-2zM273 641h2V648h-2zM275 642h1V648h-1zM276 639h1V648h-1zM277 640h2V648h-2zM278 642h2V648h-2zM279 637h2V648h-2zM280 637h2V648h-2zM281 638h2V648h-2zM282 641h2V648h-2zM283 632h2V648h-2zM284 643h2V648h-2zM285 637h2V648h-2zM287 645h1V648h-1zM288 641h2V648h-2zM289 641h2V648h-2zM290 636h2V648h-2zM291 640h2V648h-2zM292 643h2V648h-2zM293 641h2V648h-2zM294 642h2V648h-2zM295 646h2V648h-2zM296 640h2V648h-2zM297 641h2V648h-2zM299 642h1V648h-1zM300 641h2V648h-2zM301 636h2V648h-2zM302 643h2V648h-2zM303 636h2V648h-2zM303 634h2V648h-2zM305 638h2V648h-2zM306 642h2V648h-2zM307 638h2V648h-2zM308 642h2V648h-2zM310 640h1V648h-1zM311 634h1V648h-1zM312 634h2V648h-2zM313 644h2V648h-2zM314 638h2V648h-2zM314 633h2V648h-2zM316 638h2V648h-2zM317 640h2V648h-2zM318 644h2V648h-2zM319 642h2V648h-2zM320 639h2V648h-2zM322 641h1V648h-1zM323 645h1V648h-1zM323 625h2V648h-2zM325 641h2V648h-2zM326 637h2V648h-2zM327 634h2V648h-2zM328 638h2V648h-2zM329 642h2V648h-2zM330 639h2V648h-2zM331 640h2V648h-2zM332 645h2V648h-2zM334 644h1V648h-1zM335 643h2V648h-2zM336 645h2V648h-2zM337 638h2V648h-2zM338 641h2V648h-2zM339 642h2V648h-2zM340 643h2V648h-2zM341 642h2V648h-2zM342 643h2V648h-2zM343 642h2V648h-2zM344 633h1V648h-1zM345 636h2V648h-2zM347 640h2V648h-2zM348 643h2V648h-2zM349 642h2V648h-2zM350 636h2V648h-2zM351 635h2V648h-2zM352 634h2V648h-2zM353 638h2V648h-2zM354 635h2V648h-2zM355 644h2V648h-2zM357 643h1V648h-1zM358 644h1V648h-1zM359 639h2V648h-2zM360 642h2V648h-2zM361 639h2V648h-2zM362 643h2V648h-2zM363 635h2V648h-2zM364 641h2V648h-2zM365 642h2V648h-2zM366 636h2V648h-2zM367 643h2V648h-2zM369 644h1V648h-1zM370 635h1V648h-1zM371 638h2V648h-2zM372 642h2V648h-2zM373 643h2V648h-2zM374 641h2V648h-2zM375 634h2V648h-2zM376 638h2V648h-2zM377 639h2V648h-2zM378 647h2V648h-2zM379 642h2V648h-2zM381 640h1V648h-1zM382 637h2V648h-2zM383 637h2V648h-2zM384 637h2V648h-2zM385 638h2V648h-2zM386 642h2V648h-2zM387 641h2V648h-2zM388 641h2V648h-2zM389 642h2V648h-2zM390 641h2V648h-2zM391 641h2V648h-2zM393 638h1V648h-1zM394 635h2V648h-2zM394 633h2V648h-2zM396 642h2V648h-2zM397 643h2V648h-2zM398 639h2V648h-2zM399 643h2V648h-2zM400 641h2V648h-2zM401 640h2V648h-2zM402 640h2V648h-2zM404 640h1V648h-1zM405 641h1V648h-1zM406 641h2V648h-2zM407 643h2V648h-2zM408 635h2V648h-2zM409 637h2V648h-2zM410 643h2V648h-2zM411 643h2V648h-2zM412 643h2V648h-2zM413 641h2V648h-2zM414 636h2V648h-2zM416 638h1V648h-1zM417 638h1V648h-1zM418 637h2V648h-2zM419 637h2V648h-2zM420 639h2V648h-2zM421 640h2V648h-2zM422 642h2V648h-2zM423 637h2V648h-2zM424 642h2V648h-2zM425 637h2V648h-2zM426 643h2V648h-2zM428 643h1V648h-1zM429 638h2V648h-2zM430 641h2V648h-2zM431 643h2V648h-2zM432 635h2V648h-2zM433 639h2V648h-2zM434 639h2V648h-2zM435 643h2V648h-2zM436 640h2V648h-2zM437 640h2V648h-2zM438 635h1V648h-1zM439 637h2V648h-2zM441 637h2V648h-2zM442 641h2V648h-2zM443 639h2V648h-2zM444 644h2V648h-2zM445 639h2V648h-2zM446 639h2V648h-2zM447 639h2V648h-2zM448 643h2V648h-2zM449 642h2V648h-2zM450 633h1V648h-1zM451 637h2V648h-2zM453 641h2V648h-2zM454 647h2V648h-2zM454 636h2V648h-2zM456 638h2V648h-2zM457 638h2V648h-2zM458 638h2V648h-2zM459 638h2V648h-2zM460 642h2V648h-2zM461 643h2V648h-2zM463 640h1V648h-1zM464 638h1V648h-1zM465 636h2V648h-2zM465 633h2V648h-2zM467 638h2V648h-2zM468 645h2V648h-2zM468 631h2V648h-2zM470 643h2V648h-2zM471 637h2V648h-2zM472 637h2V648h-2zM473 647h2V648h-2zM475 642h1V648h-1zM476 640h2V648h-2zM477 643h2V648h-2zM478 643h2V648h-2zM479 643h2V648h-2zM480 639h2V648h-2zM481 641h2V648h-2zM482 636h2V648h-2zM483 642h2V648h-2zM484 640h2V648h-2zM485 637h2V648h-2zM487 643h1V648h-1zM488 644h2V648h-2zM489 641h2V648h-2zM490 642h2V648h-2zM491 644h2V648h-2zM492 642h2V648h-2zM493 636h2V648h-2zM494 644h2V648h-2zM495 643h2V648h-2zM496 640h2V648h-2zM498 638h1V648h-1zM499 645h1V648h-1zM500 638h2V648h-2zM501 640h2V648h-2zM502 644h2V648h-2zM503 645h2V648h-2zM503 634h2V648h-2zM505 643h2V648h-2zM506 634h2V648h-2zM507 640h2V648h-2zM508 643h2V648h-2zM510 642h1V648h-1zM511 641h1V648h-1zM512 636h2V648h-2zM513 644h2V648h-2zM514 636h2V648h-2zM515 642h2V648h-2zM516 643h2V648h-2zM517 636h2V648h-2zM518 641h2V648h-2zM519 641h2V648h-2zM520 644h2V648h-2zM522 640h1V648h-1zM523 644h2V648h-2zM524 643h2V648h-2zM525 645h2V648h-2zM526 644h2V648h-2zM527 646h2V648h-2zM528 645h2V648h-2zM529 644h2V648h-2zM530 643h2V648h-2zM531 645h2V648h-2zM532 643h2V648h-2zM534 644h1V648h-1zM535 645h2V648h-2zM536 641h2V648h-2zM536 624h2V648h-2zM538 647h2V648h-2zM539 640h2V648h-2zM540 645h2V648h-2zM541 643h2V648h-2zM542 644h2V648h-2zM543 643h2V648h-2zM545 641h1V648h-1zM545 637h2V648h-2zM547 641h2V648h-2zM548 640h2V648h-2zM549 645h2V648h-2zM550 644h2V648h-2zM551 641h2V648h-2zM552 639h2V648h-2zM553 646h2V648h-2zM554 639h2V648h-2zM555 643h2V648h-2zM557 638h1V648h-1zM558 644h1V648h-1zM559 644h2V648h-2zM560 643h2V648h-2zM561 640h2V648h-2zM562 643h2V648h-2zM563 647h2V648h-2zM564 637h2V648h-2zM565 645h2V648h-2zM566 645h2V648h-2zM567 645h2V648h-2zM569 646h1V648h-1zM570 647h2V648h-2zM571 645h2V648h-2zM572 644h2V648h-2zM573 643h2V648h-2zM574 644h2V648h-2zM575 635h2V648h-2zM576 643h2V648h-2zM577 640h2V648h-2zM578 641h2V648h-2zM579 643h2V648h-2zM581 642h1V648h-1zM582 641h2V648h-2zM583 639h2V648h-2zM584 638h2V648h-2zM585 641h2V648h-2zM586 644h2V648h-2zM587 639h2V648h-2zM588 638h2V648h-2zM589 639h2V648h-2zM590 646h2V648h-2zM592 643h1V648h-1zM593 647h1V648h-1zM594 641h2V648h-2zM595 643h2V648h-2zM596 643h2V648h-2zM597 643h2V648h-2zM598 640h2V648h-2zM599 644h2V648h-2zM600 640h2V648h-2zM601 642h2V648h-2zM602 642h2V648h-2zM604 633h1V648h-1zM605 643h1V648h-1zM606 645h2V648h-2zM607 638h2V648h-2zM608 641h2V648h-2zM609 643h2V648h-2zM610 641h2V648h-2zM611 647h2V648h-2zM612 645h2V648h-2zM613 643h2V648h-2zM614 644h2V648h-2zM616 645h1V648h-1zM617 646h2V648h-2zM618 645h2V648h-2zM619 644h2V648h-2zM620 640h2V648h-2zM621 642h2V648h-2zM622 643h2V648h-2zM623 638h2V648h-2zM624 644h2V648h-2zM625 643h2V648h-2zM626 645h2V648h-2zM628 642h1V648h-1zM629 640h2V648h-2zM629 634h2V648h-2zM631 644h2V648h-2zM632 644h2V648h-2zM633 638h2V648h-2zM634 644h2V648h-2zM635 647h2V648h-2zM636 645h2V648h-2zM637 640h2V648h-2zM638 641h2V648h-2zM639 629h2V648h-2zM641 645h2V648h-2zM642 641h2V648h-2zM643 643h2V648h-2zM644 646h2V648h-2zM645 644h2V648h-2zM646 644h2V648h-2zM647 643h2V648h-2zM648 640h2V648h-2zM649 646h2V648h-2zM651 644h1V648h-1zM652 644h1V648h-1zM653 645h2V648h-2zM654 646h2V648h-2zM655 642h2V648h-2zM656 643h2V648h-2zM657 644h2V648h-2zM658 644h2V648h-2zM659 647h2V648h-2zM660 643h2V648h-2zM661 643h2V648h-2zM663 645h1V648h-1zM664 642h2V648h-2zM665 645h2V648h-2zM666 640h2V648h-2zM667 647h2V648h-2zM668 644h2V648h-2zM669 645h2V648h-2zM670 633h2V648h-2zM671 646h2V648h-2zM672 638h2V648h-2zM673 646h2V648h-2zM675 637h1V648h-1zM676 642h2V648h-2zM677 643h2V648h-2zM678 642h2V648h-2zM679 637h2V648h-2zM680 637h2V648h-2zM681 646h2V648h-2zM682 640h2V648h-2zM683 643h2V648h-2zM684 646h2V648h-2zM685 646h2V648h-2zM687 645h1V648h-1zM688 640h2V648h-2zM689 643h2V648h-2zM690 644h2V648h-2zM691 642h2V648h-2zM692 645h2V648h-2zM693 640h2V648h-2zM694 644h2V648h-2zM695 647h2V648h-2zM696 638h2V648h-2zM698 643h1V648h-1zM699 645h1V648h-1zM700 647h2V648h-2zM701 645h2V648h-2zM702 643h2V648h-2zM703 643h2V648h-2zM703 635h2V648h-2zM705 643h2V648h-2zM706 644h2V648h-2zM707 642h2V648h-2zM708 637h1V648h-1zM709 644h2V648h-2zM711 643h2V648h-2zM712 643h2V648h-2zM713 640h2V648h-2zM714 641h2V648h-2zM715 645h2V648h-2zM716 643h2V648h-2zM717 646h2V648h-2zM718 645h2V648h-2zM719 643h2V648h-2zM720 642h2V648h-2zM722 641h1V648h-1zM723 644h2V648h-2zM724 645h2V648h-2zM725 643h2V648h-2zM726 644h2V648h-2zM727 642h2V648h-2zM728 643h2V648h-2zM729 642h2V648h-2zM730 642h2V648h-2zM731 641h2V648h-2zM732 644h2V648h-2zM734 641h1V648h-1zM735 644h2V648h-2zM736 647h2V648h-2zM737 638h2V648h-2zM738 643h2V648h-2zM739 645h2V648h-2zM740 645h2V648h-2zM741 641h2V648h-2zM742 641h2V648h-2zM743 643h2V648h-2zM744 633h2V648h-2zM746 644h1V648h-1zM747 645h2V648h-2zM748 639h2V648h-2zM749 644h2V648h-2zM750 644h2V648h-2zM751 644h2V648h-2zM752 638h2V648h-2zM753 641h2V648h-2zM754 644h2V648h-2zM755 635h1V648h-1zM756 639h2V648h-2zM758 641h2V648h-2zM759 646h2V648h-2zM760 641h2V648h-2zM761 644h2V648h-2zM762 634h2V648h-2zM764 447h2V648h-2zM765 638h2V648h-2zM766 643h2V648h-2zM767 642h2V648h-2zM769 645h1V648h-1zM770 642h2V648h-2zM771 641h2V648h-2zM772 646h2V648h-2zM773 642h2V648h-2zM774 639h2V648h-2zM775 646h2V648h-2zM776 644h2V648h-2zM777 642h2V648h-2zM778 646h2V648h-2zM779 644h2V648h-2zM781 643h1V648h-1zM781 637h2V648h-2zM783 645h2V648h-2zM784 641h2V648h-2zM785 643h2V648h-2zM786 640h2V648h-2zM787 640h2V648h-2zM788 643h2V648h-2zM789 642h2V648h-2zM790 646h2V648h-2zM792 645h1V648h-1zM793 645h1V648h-1zM794 644h2V648h-2zM795 641h2V648h-2zM796 646h2V648h-2zM796 635h2V648h-2zM798 645h2V648h-2zM799 646h2V648h-2zM800 639h2V648h-2zM801 643h2V648h-2zM802 639h2V648h-2zM804 636h1V648h-1zM805 645h2V648h-2zM806 646h2V648h-2zM807 637h2V648h-2zM808 644h2V648h-2zM809 647h2V648h-2zM810 642h2V648h-2zM811 643h2V648h-2zM812 644h2V648h-2zM813 644h2V648h-2zM814 643h2V648h-2zM816 643h1V648h-1zM817 642h2V648h-2zM818 647h2V648h-2zM819 644h2V648h-2zM820 642h2V648h-2zM821 643h2V648h-2zM822 638h2V648h-2zM823 644h2V648h-2zM824 643h2V648h-2zM826 639h2V648h-2zM828 645h1V648h-1zM829 643h2V648h-2zM830 645h2V648h-2zM831 643h2V648h-2zM832 642h2V648h-2zM833 646h2V648h-2zM834 644h2V648h-2zM835 646h2V648h-2zM836 640h2V648h-2zM837 644h2V648h-2zM839 646h1V648h-1zM840 645h1V648h-1zM841 640h2V648h-2zM842 639h2V648h-2zM843 640h2V648h-2zM844 645h2V648h-2zM845 644h2V648h-2zM846 639h2V648h-2zM847 645h2V648h-2zM848 644h2V648h-2zM849 645h2V648h-2zM851 645h1V648h-1zM852 640h2V648h-2zM853 642h2V648h-2zM854 642h2V648h-2zM855 647h2V648h-2zM856 638h2V648h-2zM857 639h2V648h-2zM858 638h2V648h-2zM859 647h2V648h-2zM860 645h2V648h-2zM861 641h2V648h-2zM863 644h1V648h-1zM864 645h2V648h-2zM865 644h2V648h-2zM866 643h2V648h-2zM867 641h2V648h-2zM868 641h2V648h-2zM869 645h2V648h-2zM871 644h2V648h-2zM872 645h2V648h-2zM873 644h2V648h-2zM875 642h1V648h-1zM876 643h2V648h-2zM877 646h2V648h-2zM878 647h2V648h-2zM879 640h2V648h-2zM880 645h2V648h-2zM881 638h2V648h-2zM882 642h2V648h-2zM883 644h2V648h-2zM884 645h2V648h-2zM886 640h1V648h-1zM887 645h1V648h-1zM888 644h2V648h-2zM889 643h2V648h-2zM890 645h2V648h-2zM891 644h2V648h-2zM892 644h2V648h-2zM893 645h2V648h-2zM894 644h2V648h-2zM896 644h2V648h-2zM898 644h1V648h-1zM899 644h2V648h-2zM900 644h2V648h-2zM901 646h2V648h-2zM902 646h2V648h-2zM903 642h2V648h-2zM904 642h2V648h-2zM905 643h2V648h-2zM906 645h2V648h-2zM907 643h2V648h-2zM908 645h2V648h-2zM910 638h1V648h-1zM911 644h2V648h-2zM912 642h2V648h-2zM913 646h2V648h-2zM914 645h2V648h-2zM915 644h2V648h-2zM916 636h2V648h-2zM917 640h2V648h-2zM918 643h2V648h-2zM919 646h2V648h-2zM920 640h2V648h-2zM922 645h1V648h-1zM923 638h2V648h-2zM924 647h2V648h-2zM925 641h2V648h-2zM926 641h2V648h-2zM928 638h2V648h-2zM929 643h2V648h-2zM930 646h2V648h-2zM931 645h2V648h-2zM933 643h1V648h-1zM934 645h1V648h-1zM935 644h2V648h-2zM936 643h2V648h-2zM937 643h2V648h-2zM938 639h2V648h-2zM939 642h1V648h-1z"/>
<path class="bar" fill="#800000" d="M67 637h2V640h-2zM67 634h2V636h-2zM69 639h2V640h-2zM70 637h2V640h-2zM71 643h2V644h-2zM72 640h2V641h-2zM73 644h2V645h-2zM75 634h1V637h-1zM76 639h1V643h-1zM77 639h2V642h-2zM79 641h2V642h-2zM81 642h2V644h-2zM82 638h2V640h-2zM83 644h2V645h-2zM85 631h2V634h-2zM87 636h1V637h-1zM88 638h2V639h-2zM89 643h2V644h-2zM90 642h2V644h-2zM91 642h2V643h-2zM92 638h2V640h-2zM93 638h2V641h-2zM94 640h2V642h-2zM95 638h2V640h-2zM96 641h2V642h-2zM97 640h2V642h-2zM99 630h1V633h-1zM100 642h2V643h-2zM101 640h2V641h-2zM101 633h2V636h-2zM103 640h2V642h-2zM104 637h2V640h-2zM105 646h2V647h-2zM106 632h2V636h-2zM107 644h2V646h-2zM108 646h2V647h-2zM109 633h2V636h-2zM111 632h1V636h-1zM112 639h2V641h-2zM113 639h2V643h-2zM114 641h2V642h-2zM115 639h2V641h-2zM116 635h2V637h-2zM117 642h2V643h-2zM118 644h2V645h-2zM119 643h2V644h-2zM120 640h2V641h-2zM122 640h1V641h-1zM123 640h1V642h-1zM124 640h2V642h-2zM125 644h2V645h-2zM126 640h2V642h-2zM127 640h2V642h-2zM128 639h2V642h-2zM129 639h2V641h-2zM131 643h2V644h-2zM132 631h2V634h-2zM135 642h2V643h-2zM137 640h2V642h-2zM138 638h2V640h-2zM139 636h2V638h-2zM140 641h2V643h-2zM141 642h2V643h-2zM142 642h2V643h-2zM143 630h2V634h-2zM144 643h2V644h-2zM147 643h2V644h-2zM148 639h2V641h-2zM149 644h2V645h-2zM150 645h2V646h-2zM151 642h2V643h-2zM152 641h2V642h-2zM153 638h2V640h-2zM155 644h2V645h-2zM156 635h2V638h-2zM158 638h1V640h-1zM159 641h2V642h-2zM160 634h2V636h-2zM161 638h2V641h-2zM161 629h2V633h-2zM163 637h2V640h-2zM165 562h2V584h-2zM166 632h2V635h-2zM167 633h2V634h-2zM170 641h1V643h-1zM172 641h2V642h-2zM173 633h2V635h-2zM174 644h2V645h-2zM175 641h2V643h-2zM177 630h2V634h-2zM178 635h2V638h-2zM179 643h2V644h-2zM181 625h1V631h-1zM182 631h1V636h-1zM183 640h2V641h-2zM184 643h2V644h-2zM185 643h2V644h-2zM186 644h2V645h-2zM187 636h2V639h-2zM188 641h2V643h-2zM189 636h2V637h-2zM190 634h2V638h-2zM191 642h2V643h-2zM193 641h1V642h-1zM194 637h2V638h-2zM195 639h2V641h-2zM196 639h2V640h-2zM196 630h2V634h-2zM198 636h2V638h-2zM199 642h2V643h-2zM200 644h2V645h-2zM201 641h2V643h-2zM202 638h2V640h-2zM203 630h2V633h-2zM206 642h2V644h-2zM207 630h2V633h-2zM207 630h2V633h-2zM209 640h2V642h-2zM210 642h2V643h-2zM211 642h2V643h-2zM212 633h2V635h-2zM213 640h2V642h-2zM214 641h2V642h-2zM216 638h1V639h-1zM216 631h2V634h-2zM218 641h2V642h-2zM218 631h2V634h-2zM220 639h2V640h-2zM221 636h2V640h-2zM222 642h2V643h-2zM223 636h2V638h-2zM224 631h2V636h-2zM225 639h2V641h-2zM226 646h2V647h-2zM228 642h1V644h-1zM229 639h1V640h-1zM230 639h2V641h-2zM231 639h2V641h-2zM232 639h2V641h-2zM233 643h2V644h-2zM234 636h2V638h-2zM235 638h2V640h-2zM236 639h2V641h-2zM237 638h2V640h-2zM238 634h2V637h-2zM240 639h1V640h-1zM241 642h2V643h-2zM244 637h2V642h-2zM245 643h2V644h-2zM246 633h2V636h-2zM247 642h2V643h-2zM248 640h2V642h-2zM249 636h2V639h-2zM250 639h2V640h-2zM252 633h1V637h-1zM253 633h2V636h-2zM254 640h2V642h-2zM256 641h2V642h-2zM257 630h2V634h-2zM258 639h2V640h-2zM259 635h2V638h-2zM260 631h2V634h-2zM261 638h2V640h-2zM263 640h1V642h-1zM264 643h1V644h-1zM265 636h2V639h-2zM266 638h2V640h-2zM267 638h2V640h-2zM268 637h2V642h-2zM269 641h2V643h-2zM270 639h2V641h-2zM271 637h2V640h-2zM272 639h2V641h-2zM273 639h2V641h-2zM275 640h1V642h-1zM276 636h1V639h-1zM277 638h2V640h-2zM279 635h2V637h-2zM280 634h2V637h-2zM281 631h2V638h-2zM282 638h2V641h-2zM283 629h2V632h-2zM284 642h2V643h-2zM285 635h2V637h-2zM287 644h1V645h-1zM288 640h2V641h-2zM289 640h2V641h-2zM290 632h2V636h-2zM291 638h2V640h-2zM292 642h2V643h-2zM293 639h2V641h-2zM294 639h2V642h-2zM295 645h2V646h-2zM296 638h2V640h-2zM297 638h2V641h-2zM299 641h1V642h-1zM300 639h2V641h-2zM301 634h2V636h-2zM302 642h2V643h-2zM303 632h2V636h-2zM303 630h2V634h-2zM305 636h2V638h-2zM306 640h2V642h-2zM307 635h2V638h-2zM310 638h1V640h-1zM311 631h1V634h-1zM312 632h2V634h-2zM314 636h2V638h-2zM314 629h2V633h-2zM316 636h2V638h-2zM317 636h2V640h-2zM318 643h2V644h-2zM319 641h2V642h-2zM320 637h2V639h-2zM322 639h1V641h-1zM323 644h1V645h-1zM323 615h2V625h-2zM325 640h2V641h-2zM326 633h2V637h-2zM327 630h2V634h-2zM328 636h2V638h-2zM329 640h2V642h-2zM330 638h2V639h-2zM331 638h2V640h-2zM332 644h2V645h-2zM334 643h1V644h-1zM335 642h2V643h-2zM336 644h2V645h-2zM337 636h2V638h-2zM338 639h2V641h-2zM339 641h2V642h-2zM340 641h2V643h-2zM341 641h2V642h-2zM342 642h2V643h-2zM343 640h2V642h-2zM344 629h1V633h-1zM345 632h2V636h-2zM347 638h2V640h-2zM348 641h2V643h-2zM349 641h2V642h-2zM350 632h2V636h-2zM351 632h2V635h-2zM352 631h2V634h-2zM353 633h2V638h-2zM354 631h2V635h-2zM355 642h2V644h-2zM357 642h1V643h-1zM359 637h2V639h-2zM360 640h2V642h-2zM361 637h2V639h-2zM362 641h2V643h-2zM363 632h2V635h-2zM364 638h2V641h-2zM365 640h2V642h-2zM366 634h2V636h-2zM367 642h2V643h-2zM369 643h1V644h-1zM370 631h1V635h-1zM371 636h2V638h-2zM372 641h2V642h-2zM373 641h2V643h-2zM375 633h2V634h-2zM376 636h2V638h-2zM377 637h2V639h-2zM379 640h2V642h-2zM381 639h1V640h-1zM382 633h2V637h-2zM383 635h2V637h-2zM384 635h2V637h-2zM385 636h2V638h-2zM386 640h2V642h-2zM387 640h2V641h-2zM388 640h2V641h-2zM389 641h2V642h-2zM390 637h2V641h-2zM391 640h2V641h-2zM393 637h1V638h-1zM394 633h2V635h-2zM394 630h2V633h-2zM396 641h2V642h-2zM397 641h2V643h-2zM398 637h2V639h-2zM399 642h2V643h-2zM400 640h2V641h-2zM401 638h2V640h-2zM402 638h2V640h-2zM404 639h1V640h-1zM405 639h1V641h-1zM407 641h2V643h-2zM408 631h2V635h-2zM409 633h2V637h-2zM411 642h2V643h-2zM412 641h2V643h-2zM413 639h2V641h-2zM414 634h2V636h-2zM416 635h1V638h-1zM417 634h1V638h-1zM418 635h2V637h-2zM419 635h2V637h-2zM420 637h2V639h-2zM421 638h2V640h-2zM422 640h2V642h-2zM423 633h2V637h-2zM424 641h2V642h-2zM425 633h2V637h-2zM426 642h2V643h-2zM428 642h1V643h-1zM429 636h2V638h-2zM430 640h2V641h-2zM431 642h2V643h-2zM432 632h2V635h-2zM433 638h2V639h-2zM434 637h2V639h-2zM435 641h2V643h-2zM436 637h2V640h-2zM437 638h2V640h-2zM438 633h1V635h-1zM439 635h2V637h-2zM441 635h2V637h-2zM442 639h2V641h-2zM443 638h2V639h-2zM444 643h2V644h-2zM445 637h2V639h-2zM446 637h2V639h-2zM447 637h2V639h-2zM448 642h2V643h-2zM449 640h2V642h-2zM450 630h1V633h-1zM451 634h2V637h-2zM453 639h2V641h-2zM454 646h2V647h-2zM454 633h2V636h-2zM456 637h2V638h-2zM457 634h2V638h-2zM458 635h2V638h-2zM459 636h2V638h-2zM460 641h2V642h-2zM461 641h2V643h-2zM463 638h1V640h-1zM464 633h1V638h-1zM465 633h2V636h-2zM465 629h2V633h-2zM467 634h2V638h-2zM468 644h2V645h-2zM468 626h2V631h-2zM470 642h2V643h-2zM471 635h2V637h-2zM472 634h2V637h-2zM475 640h1V642h-1zM476 639h2V640h-2zM477 642h2V643h-2zM478 642h2V643h-2zM479 642h2V643h-2zM480 636h2V639h-2zM481 638h2V641h-2zM482 634h2V636h-2zM483 640h2V642h-2zM484 638h2V640h-2zM485 635h2V637h-2zM487 642h1V643h-1zM488 643h2V644h-2zM489 639h2V641h-2zM490 641h2V642h-2zM491 642h2V644h-2zM492 640h2V642h-2zM493 633h2V636h-2zM495 642h2V643h-2zM496 639h2V640h-2zM498 636h1V638h-1zM499 644h1V645h-1zM500 636h2V638h-2zM501 637h2V640h-2zM503 644h2V645h-2zM503 631h2V634h-2zM505 641h2V643h-2zM506 631h2V634h-2zM507 637h2V640h-2zM508 642h2V643h-2zM510 641h1V642h-1zM511 640h1V641h-1zM512 634h2V636h-2zM513 643h2V644h-2zM514 633h2V636h-2zM515 641h2V642h-2zM516 641h2V643h-2zM517 634h2V636h-2zM518 637h2V641h-2zM519 639h2V641h-2zM522 638h1V640h-1zM523 643h2V644h-2zM524 642h2V643h-2zM525 644h2V645h-2zM526 642h2V644h-2zM528 644h2V645h-2zM529 643h2V644h-2zM530 641h2V643h-2zM531 644h2V645h-2zM532 638h2V643h-2zM534 643h1V644h-1zM535 644h2V645h-2zM536 639h2V641h-2zM536 618h2V624h-2zM539 639h2V640h-2zM540 644h2V645h-2zM541 642h2V643h-2zM542 643h2V644h-2zM543 641h2V643h-2zM545 638h1V641h-1zM545 633h2V637h-2zM547 640h2V641h-2zM548 638h2V640h-2zM549 644h2V645h-2zM550 642h2V644h-2zM551 640h2V641h-2zM552 638h2V639h-2zM554 635h2V639h-2zM555 642h2V643h-2zM557 633h1V638h-1zM558 642h1V644h-1zM560 642h2V643h-2zM561 638h2V640h-2zM562 642h2V643h-2zM564 636h2V637h-2zM565 644h2V645h-2zM566 643h2V645h-2zM567 644h2V645h-2zM569 645h1V646h-1zM571 644h2V645h-2zM572 643h2V644h-2zM573 641h2V643h-2zM574 643h2V644h-2zM575 631h2V635h-2zM576 642h2V643h-2zM577 638h2V640h-2zM578 639h2V641h-2zM579 641h2V643h-2zM581 640h1V642h-1zM582 639h2V641h-2zM583 638h2V639h-2zM584 635h2V638h-2zM585 640h2V641h-2zM586 642h2V644h-2zM587 637h2V639h-2zM588 636h2V638h-2zM589 637h2V639h-2zM592 642h1V643h-1zM593 646h1V647h-1zM594 640h2V641h-2zM595 642h2V643h-2zM596 642h2V643h-2zM597 642h2V643h-2zM598 638h2V640h-2zM599 643h2V644h-2zM600 639h2V640h-2zM601 640h2V642h-2zM602 641h2V642h-2zM604 630h1V633h-1zM605 640h1V643h-1zM606 644h2V645h-2zM607 635h2V638h-2zM608 639h2V641h-2zM609 642h2V643h-2zM610 640h2V641h-2zM612 644h2V645h-2zM614 643h2V644h-2zM616 644h1V645h-1zM618 643h2V645h-2zM619 643h2V644h-2zM620 637h2V640h-2zM621 641h2V642h-2zM622 641h2V643h-2zM623 634h2V638h-2zM624 643h2V644h-2zM625 642h2V643h-2zM628 641h1V642h-1zM629 638h2V640h-2zM629 630h2V634h-2zM632 643h2V644h-2zM633 633h2V638h-2zM634 643h2V644h-2zM636 644h2V645h-2zM637 638h2V640h-2zM638 639h2V641h-2zM639 622h2V629h-2zM641 643h2V645h-2zM642 639h2V641h-2zM643 641h2V643h-2zM645 643h2V644h-2zM646 643h2V644h-2zM647 642h2V643h-2zM648 637h2V640h-2zM649 645h2V646h-2zM651 643h1V644h-1zM652 643h1V644h-1zM653 644h2V645h-2zM654 645h2V646h-2zM655 641h2V642h-2zM656 641h2V643h-2zM657 643h2V644h-2zM658 643h2V644h-2zM660 642h2V643h-2zM661 642h2V643h-2zM663 644h1V645h-1zM664 640h2V642h-2zM666 637h2V640h-2zM668 643h2V644h-2zM669 644h2V645h-2zM670 629h2V633h-2zM671 645h2V646h-2zM672 636h2V638h-2zM673 645h2V646h-2zM675 635h1V637h-1zM676 641h2V642h-2zM677 642h2V643h-2zM678 641h2V642h-2zM679 636h2V637h-2zM680 635h2V637h-2zM682 638h2V640h-2zM683 642h2V643h-2zM684 645h2V646h-2zM685 645h2V646h-2zM688 638h2V640h-2zM689 642h2V643h-2zM691 640h2V642h-2zM692 644h2V645h-2zM693 637h2V640h-2zM694 642h2V644h-2zM695 646h2V647h-2zM696 635h2V638h-2zM698 642h1V643h-1zM699 644h1V645h-1zM701 644h2V645h-2zM702 642h2V643h-2zM703 642h2V643h-2zM703 633h2V635h-2zM705 641h2V643h-2zM706 643h2V644h-2zM707 641h2V642h-2zM708 634h1V637h-1zM711 642h2V643h-2zM713 639h2V640h-2zM714 639h2V641h-2zM715 644h2V645h-2zM716 642h2V643h-2zM717 644h2V646h-2zM718 644h2V645h-2zM719 642h2V643h-2zM720 641h2V642h-2zM722 639h1V641h-1zM723 643h2V644h-2zM725 642h2V643h-2zM726 642h2V644h-2zM728 642h2V643h-2zM729 640h2V642h-2zM730 640h2V642h-2zM731 640h2V641h-2zM732 643h2V644h-2zM734 640h1V641h-1zM735 643h2V644h-2zM736 646h2V647h-2zM737 636h2V638h-2zM738 640h2V643h-2zM741 640h2V641h-2zM742 639h2V641h-2zM743 642h2V643h-2zM744 630h2V633h-2zM746 642h1V644h-1zM747 644h2V645h-2zM748 637h2V639h-2zM749 643h2V644h-2zM750 643h2V644h-2zM751 643h2V644h-2zM752 636h2V638h-2zM753 638h2V641h-2zM754 643h2V644h-2zM755 632h1V635h-1zM756 637h2V639h-2zM758 640h2V641h-2zM759 645h2V646h-2zM760 639h2V641h-2zM761 643h2V644h-2zM762 631h2V634h-2zM765 637h2V638h-2zM766 642h2V643h-2zM767 640h2V642h-2zM769 643h1V645h-1zM770 641h2V642h-2zM771 639h2V641h-2zM772 645h2V646h-2zM773 640h2V642h-2zM774 636h2V639h-2zM775 645h2V646h-2zM776 643h2V644h-2zM777 640h2V642h-2zM778 645h2V646h-2zM779 643h2V644h-2zM781 641h1V643h-1zM781 635h2V637h-2zM784 638h2V641h-2zM785 641h2V643h-2zM786 639h2V640h-2zM787 639h2V640h-2zM788 642h2V643h-2zM789 641h2V642h-2zM790 644h2V646h-2zM793 644h1V645h-1zM794 643h2V644h-2zM795 640h2V641h-2zM796 645h2V646h-2zM796 631h2V635h-2zM799 645h2V646h-2zM800 637h2V639h-2zM801 642h2V643h-2zM802 636h2V639h-2zM804 634h1V636h-1zM805 644h2V645h-2zM806 645h2V646h-2zM807 634h2V637h-2zM808 643h2V644h-2zM810 640h2V642h-2zM811 641h2V643h-2zM812 643h2V644h-2zM813 643h2V644h-2zM814 641h2V643h-2zM816 642h1V643h-1zM817 640h2V642h-2zM818 646h2V647h-2zM819 643h2V644h-2zM820 640h2V642h-2zM821 642h2V643h-2zM822 636h2V638h-2zM823 643h2V644h-2zM824 642h2V643h-2zM826 637h2V639h-2zM829 641h2V643h-2zM830 644h2V645h-2zM831 641h2V643h-2zM832 640h2V642h-2zM833 645h2V646h-2zM834 643h2V644h-2zM835 645h2V646h-2zM836 638h2V640h-2zM837 643h2V644h-2zM839 645h1V646h-1zM840 644h1V645h-1zM841 637h2V640h-2zM842 637h2V639h-2zM843 638h2V640h-2zM844 644h2V645h-2zM845 643h2V644h-2zM846 636h2V639h-2zM847 644h2V645h-2zM848 642h2V644h-2zM849 644h2V645h-2zM852 637h2V640h-2zM853 640h2V642h-2zM854 640h2V642h-2zM856 636h2V638h-2zM857 636h2V639h-2zM858 635h2V638h-2zM859 646h2V647h-2zM860 644h2V645h-2zM861 639h2V641h-2zM863 643h1V644h-1zM864 644h2V645h-2zM865 643h2V644h-2zM867 639h2V641h-2zM868 639h2V641h-2zM869 644h2V645h-2zM870 647h2V648h-2zM871 643h2V644h-2zM873 642h2V644h-2zM875 641h1V642h-1zM876 642h2V643h-2zM877 645h2V646h-2zM879 638h2V640h-2zM881 634h2V638h-2zM882 641h2V642h-2zM883 642h2V644h-2zM884 644h2V645h-2zM886 636h1V640h-1zM887 644h1V645h-1zM888 643h2V644h-2zM889 642h2V643h-2zM890 643h2V645h-2zM891 643h2V644h-2zM892 643h2V644h-2zM893 644h2V645h-2zM894 643h2V644h-2zM895 647h2V648h-2zM898 643h1V644h-1zM899 643h2V644h-2zM901 645h2V646h-2zM903 641h2V642h-2zM904 641h2V642h-2zM905 641h2V643h-2zM907 642h2V643h-2zM908 643h2V645h-2zM910 635h1V638h-1zM911 643h2V644h-2zM912 640h2V642h-2zM913 644h2V646h-2zM914 644h2V645h-2zM915 643h2V644h-2zM916 632h2V636h-2zM917 639h2V640h-2zM918 641h2V643h-2zM919 645h2V646h-2zM920 639h2V640h-2zM922 644h1V645h-1zM923 635h2V638h-2zM925 640h2V641h-2zM926 639h2V641h-2zM928 635h2V638h-2zM929 641h2V643h-2zM930 645h2V646h-2zM931 644h2V645h-2zM933 642h1V643h-1zM934 644h1V645h-1zM935 642h2V644h-2zM936 641h2V643h-2zM937 642h2V643h-2zM938 637h2V639h-2zM939 641h1V642h-1z"/>
<path class="bar" fill="#40ff40" d="M67 636h2V637h-2zM67 628h2V634h-2zM69 634h2V639h-2zM70 634h2V637h-2zM71 638h2V643h-2zM72 636h2V640h-2zM73 640h2V644h-2zM75 631h1V634h-1zM76 635h1V639h-1zM77 635h2V639h-2zM78 643h2V645h-2zM79 636h2V641h-2zM80 646h2V647h-2zM81 640h2V642h-2zM82 633h2V638h-2zM83 639h2V644h-2zM84 638h2V642h-2zM85 627h2V631h-2zM87 631h1V636h-1zM88 633h2V638h-2zM89 641h2V643h-2zM90 637h2V642h-2zM91 638h2V642h-2zM92 634h2V638h-2zM93 635h2V638h-2zM94 637h2V640h-2zM95 634h2V638h-2zM96 638h2V641h-2zM97 636h2V640h-2zM99 624h1V630h-1zM100 637h2V642h-2zM101 636h2V640h-2zM101 626h2V633h-2zM103 637h2V640h-2zM104 632h2V637h-2zM105 645h2V646h-2zM106 628h2V632h-2zM107 642h2V644h-2zM108 645h2V646h-2zM109 628h2V633h-2zM111 630h1V632h-1zM112 637h2V639h-2zM113 636h2V639h-2zM114 639h2V641h-2zM115 637h2V639h-2zM116 628h2V635h-2zM117 639h2V642h-2zM118 640h2V644h-2zM119 641h2V643h-2zM120 637h2V640h-2zM122 637h1V640h-1zM123 634h1V640h-1zM124 636h2V640h-2zM125 642h2V644h-2zM126 636h2V640h-2zM127 634h2V640h-2zM128 635h2V639h-2zM129 636h2V639h-2zM130 639h2V643h-2zM131 637h2V643h-2zM132 628h2V631h-2zM134 646h1V647h-1zM135 639h2V642h-2zM136 644h2V646h-2zM137 637h2V640h-2zM138 633h2V638h-2zM139 631h2V636h-2zM140 639h2V641h-2zM141 639h2V642h-2zM142 639h2V642h-2zM143 628h2V630h-2zM144 639h2V643h-2zM146 644h1V646h-1zM147 638h2V643h-2zM148 636h2V639h-2zM149 639h2V644h-2zM150 643h2V645h-2zM151 639h2V642h-2zM152 637h2V641h-2zM153 635h2V638h-2zM154 646h2V647h-2zM155 638h2V644h-2zM156 632h2V635h-2zM158 636h1V638h-1zM159 637h2V641h-2zM160 631h2V634h-2zM161 636h2V638h-2zM161 624h2V629h-2zM163 634h2V637h-2zM164 640h2V643h-2zM165 521h2V562h-2zM166 628h2V632h-2zM167 629h2V633h-2zM169 646h1V647h-1zM170 638h1V641h-1zM171 639h2V644h-2zM172 635h2V641h-2zM173 630h2V633h-2zM174 642h2V644h-2zM175 635h2V641h-2zM176 640h2V645h-2zM177 623h2V630h-2zM178 633h2V635h-2zM179 640h2V643h-2zM181 619h1V625h-1zM182 628h1V631h-1zM183 637h2V640h-2zM184 640h2V643h-2zM185 639h2V643h-2zM186 639h2V644h-2zM187 634h2V636h-2zM188 638h2V641h-2zM189 633h2V636h-2zM190 632h2V634h-2zM191 639h2V642h-2zM193 636h1V641h-1zM194 633h2V637h-2zM195 635h2V639h-2zM196 633h2V639h-2zM196 625h2V630h-2zM198 632h2V636h-2zM199 639h2V642h-2zM200 641h2V644h-2zM201 637h2V641h-2zM202 635h2V638h-2zM203 628h2V630h-2zM205 643h1V646h-1zM206 639h2V642h-2zM207 628h2V630h-2zM207 624h2V630h-2zM209 637h2V640h-2zM210 638h2V642h-2zM211 637h2V642h-2zM212 629h2V633h-2zM213 637h2V640h-2zM214 637h2V641h-2zM216 635h1V638h-1zM216 625h2V631h-2zM218 636h2V641h-2zM218 625h2V631h-2zM220 635h2V639h-2zM221 632h2V636h-2zM222 638h2V642h-2zM223 631h2V636h-2zM224 629h2V631h-2zM225 633h2V639h-2zM226 645h2V646h-2zM228 639h1V642h-1zM229 637h1V639h-1zM230 635h2V639h-2zM231 637h2V639h-2zM232 635h2V639h-2zM233 639h2V643h-2zM234 629h2V636h-2zM235 634h2V638h-2zM236 635h2V639h-2zM237 634h2V638h-2zM238 630h2V634h-2zM240 636h1V639h-1zM241 640h2V642h-2zM242 643h2V644h-2zM243 646h2V647h-2zM244 633h2V637h-2zM245 639h2V643h-2zM246 629h2V633h-2zM247 638h2V642h-2zM248 637h2V640h-2zM249 632h2V636h-2zM250 634h2V639h-2zM252 629h1V633h-1zM253 628h2V633h-2zM254 637h2V640h-2zM255 637h2V641h-2zM256 639h2V641h-2zM257 626h2V630h-2zM258 636h2V639h-2zM259 632h2V635h-2zM260 625h2V631h-2zM261 634h2V638h-2zM263 638h1V640h-1zM264 641h1V643h-1zM265 632h2V636h-2zM266 634h2V638h-2zM267 635h2V638h-2zM268 635h2V637h-2zM269 635h2V641h-2zM270 634h2V639h-2zM271 633h2V637h-2zM272 637h2V639h-2zM273 635h2V639h-2zM275 635h1V640h-1zM276 633h1V636h-1zM277 635h2V638h-2zM278 639h2V642h-2zM279 631h2V635h-2zM280 631h2V634h-2zM281 628h2V631h-2zM282 636h2V638h-2zM283 624h2V629h-2zM284 638h2V642h-2zM285 630h2V635h-2zM287 640h1V644h-1zM288 635h2V640h-2zM289 637h2V640h-2zM290 629h2V632h-2zM291 634h2V638h-2zM292 638h2V642h-2zM293 632h2V639h-2zM294 637h2V639h-2zM295 644h2V645h-2zM296 635h2V638h-2zM297 636h2V638h-2zM299 637h1V641h-1zM300 637h2V639h-2zM301 629h2V634h-2zM302 638h2V642h-2zM303 628h2V632h-2zM303 624h2V630h-2zM305 629h2V636h-2zM306 636h2V640h-2zM307 631h2V635h-2zM308 638h2V642h-2zM310 634h1V638h-1zM311 628h1V631h-1zM312 629h2V632h-2zM313 640h2V644h-2zM314 633h2V636h-2zM314 623h2V629h-2zM316 631h2V636h-2zM317 633h2V636h-2zM318 641h2V643h-2zM319 637h2V641h-2zM320 634h2V637h-2zM322 634h1V639h-1zM323 641h1V644h-1zM323 596h2V615h-2zM325 638h2V640h-2zM326 629h2V633h-2zM327 628h2V630h-2zM328 633h2V636h-2zM329 634h2V640h-2zM330 632h2V638h-2zM331 635h2V638h-2zM332 643h2V644h-2zM334 639h1V643h-1zM335 639h2V642h-2zM336 640h2V644h-2zM337 633h2V636h-2zM338 634h2V639h-2zM339 635h2V641h-2zM340 639h2V641h-2zM341 638h2V641h-2zM342 640h2V642h-2zM343 636h2V640h-2zM344 625h1V629h-1zM345 628h2V632h-2zM347 635h2V638h-2zM348 639h2V641h-2zM349 637h2V641h-2zM350 631h2V632h-2zM351 630h2V632h-2zM352 626h2V631h-2zM353 629h2V633h-2zM354 629h2V631h-2zM355 639h2V642h-2zM357 638h1V642h-1zM358 641h1V644h-1zM359 634h2V637h-2zM360 637h2V640h-2zM361 633h2V637h-2zM362 633h2V641h-2zM363 630h2V632h-2zM364 635h2V638h-2zM365 637h2V640h-2zM366 631h2V634h-2zM367 637h2V642h-2zM369 639h1V643h-1zM370 629h1V631h-1zM371 633h2V636h-2zM372 638h2V641h-2zM373 637h2V641h-2zM374 637h2V641h-2zM375 630h2V633h-2zM376 632h2V636h-2zM377 635h2V637h-2zM379 635h2V640h-2zM381 635h1V639h-1zM382 630h2V633h-2zM383 632h2V635h-2zM384 630h2V635h-2zM385 633h2V636h-2zM386 635h2V640h-2zM387 636h2V640h-2zM388 635h2V640h-2zM389 636h2V641h-2zM390 633h2V637h-2zM391 638h2V640h-2zM393 631h1V637h-1zM394 630h2V633h-2zM394 624h2V630h-2zM396 637h2V641h-2zM397 636h2V641h-2zM398 634h2V637h-2zM399 640h2V642h-2zM400 637h2V640h-2zM401 633h2V638h-2zM402 636h2V638h-2zM404 637h1V639h-1zM405 636h1V639h-1zM406 637h2V641h-2zM407 638h2V641h-2zM408 629h2V631h-2zM409 629h2V633h-2zM410 639h2V643h-2zM411 637h2V642h-2zM412 637h2V641h-2zM413 637h2V639h-2zM414 631h2V634h-2zM416 632h1V635h-1zM417 630h1V634h-1zM418 631h2V635h-2zM419 631h2V635h-2zM420 632h2V637h-2zM421 635h2V638h-2zM422 636h2V640h-2zM423 628h2V633h-2zM424 638h2V641h-2zM425 630h2V633h-2zM426 637h2V642h-2zM428 637h1V642h-1zM429 632h2V636h-2zM430 636h2V640h-2zM431 638h2V642h-2zM432 629h2V632h-2zM433 636h2V638h-2zM434 635h2V637h-2zM435 636h2V641h-2zM436 633h2V637h-2zM437 637h2V638h-2zM438 626h1V633h-1zM439 632h2V635h-2zM441 633h2V635h-2zM442 632h2V639h-2zM443 633h2V638h-2zM444 638h2V643h-2zM445 634h2V637h-2zM446 633h2V637h-2zM447 632h2V637h-2zM448 638h2V642h-2zM449 637h2V640h-2zM450 624h1V630h-1zM451 631h2V634h-2zM453 636h2V639h-2zM454 645h2V646h-2zM454 628h2V633h-2zM456 633h2V637h-2zM457 631h2V634h-2zM458 632h2V635h-2zM459 633h2V636h-2zM460 637h2V641h-2zM461 636h2V641h-2zM463 636h1V638h-1zM464 631h1V633h-1zM465 631h2V633h-2zM465 624h2V629h-2zM467 630h2V634h-2zM468 640h2V644h-2zM468 621h2V626h-2zM470 638h2V642h-2zM471 633h2V635h-2zM472 631h2V634h-2zM475 634h1V640h-1zM476 635h2V639h-2zM477 638h2V642h-2zM478 639h2V642h-2zM479 640h2V642h-2zM480 633h2V636h-2zM481 635h2V638h-2zM482 628h2V634h-2zM483 636h2V640h-2zM484 636h2V638h-2zM485 630h2V635h-2zM487 640h1V642h-1zM488 638h2V643h-2zM489 636h2V639h-2zM490 638h2V641h-2zM491 639h2V642h-2zM492 637h2V640h-2zM493 629h2V633h-2zM494 641h2V644h-2zM495 639h2V642h-2zM496 635h2V639h-2zM498 633h1V636h-1zM499 641h1V644h-1zM500 631h2V636h-2zM501 635h2V637h-2zM502 641h2V644h-2zM503 642h2V644h-2zM503 625h2V631h-2zM505 639h2V641h-2zM506 624h2V631h-2zM507 634h2V637h-2zM508 639h2V642h-2zM510 639h1V641h-1zM511 636h1V640h-1zM512 630h2V634h-2zM513 642h2V643h-2zM514 631h2V633h-2zM515 638h2V641h-2zM516 635h2V641h-2zM517 629h2V634h-2zM518 633h2V637h-2zM519 637h2V639h-2zM520 639h2V644h-2zM522 635h1V638h-1zM523 638h2V643h-2zM524 640h2V642h-2zM525 641h2V644h-2zM526 639h2V642h-2zM527 644h2V646h-2zM528 642h2V644h-2zM529 639h2V643h-2zM530 638h2V641h-2zM531 642h2V644h-2zM532 634h2V638h-2zM534 640h1V643h-1zM535 643h2V644h-2zM536 636h2V639h-2zM536 611h2V618h-2zM538 646h2V647h-2zM539 633h2V639h-2zM540 642h2V644h-2zM541 639h2V642h-2zM542 641h2V643h-2zM543 639h2V641h-2zM545 635h1V638h-1zM545 626h2V633h-2zM547 637h2V640h-2zM548 634h2V638h-2zM549 640h2V644h-2zM550 638h2V642h-2zM551 637h2V640h-2zM552 634h2V638h-2zM553 643h2V646h-2zM554 632h2V635h-2zM555 639h2V642h-2zM557 631h1V633h-1zM558 641h1V642h-1zM559 641h2V644h-2zM560 635h2V642h-2zM561 635h2V638h-2zM562 639h2V642h-2zM563 646h2V647h-2zM564 630h2V636h-2zM565 640h2V644h-2zM566 640h2V643h-2zM567 642h2V644h-2zM569 642h1V645h-1zM570 646h2V647h-2zM571 640h2V644h-2zM572 637h2V643h-2zM573 637h2V641h-2zM574 640h2V643h-2zM575 625h2V631h-2zM576 640h2V642h-2zM577 634h2V638h-2zM578 635h2V639h-2zM579 637h2V641h-2zM581 636h1V640h-1zM582 637h2V639h-2zM583 636h2V638h-2zM584 630h2V635h-2zM585 637h2V640h-2zM586 636h2V642h-2zM587 636h2V637h-2zM588 633h2V636h-2zM589 634h2V637h-2zM590 642h2V646h-2zM592 639h1V642h-1zM593 644h1V646h-1zM594 636h2V640h-2zM595 640h2V642h-2zM596 639h2V642h-2zM597 640h2V642h-2zM598 636h2V638h-2zM599 640h2V643h-2zM600 636h2V639h-2zM601 631h2V640h-2zM602 639h2V641h-2zM604 624h1V630h-1zM605 636h1V640h-1zM606 641h2V644h-2zM607 630h2V635h-2zM608 637h2V639h-2zM609 638h2V642h-2zM610 638h2V640h-2zM611 646h2V647h-2zM612 641h2V644h-2zM613 640h2V643h-2zM614 640h2V643h-2zM616 642h1V644h-1zM617 645h2V646h-2zM618 639h2V643h-2zM619 640h2V643h-2zM620 632h2V637h-2zM621 639h2V641h-2zM622 638h2V641h-2zM623 631h2V634h-2zM624 642h2V643h-2zM625 638h2V642h-2zM626 639h2V645h-2zM628 639h1V641h-1zM629 634h2V638h-2zM629 626h2V630h-2zM631 640h2V644h-2zM632 640h2V643h-2zM633 630h2V633h-2zM634 640h2V643h-2zM636 641h2V644h-2zM637 636h2V638h-2zM638 635h2V639h-2zM639 618h2V622h-2zM641 641h2V643h-2zM642 637h2V639h-2zM643 637h2V641h-2zM644 645h2V646h-2zM645 639h2V643h-2zM646 639h2V643h-2zM647 637h2V642h-2zM648 634h2V637h-2zM649 643h2V645h-2zM651 639h1V643h-1zM652 639h1V643h-1zM653 639h2V644h-2zM654 642h2V645h-2zM655 638h2V641h-2zM656 639h2V641h-2zM657 640h2V643h-2zM658 640h2V643h-2zM659 646h2V647h-2zM660 639h2V642h-2zM661 637h2V642h-2zM663 639h1V644h-1zM664 638h2V640h-2zM665 642h2V645h-2zM666 634h2V637h-2zM667 644h2V647h-2zM668 641h2V643h-2zM669 640h2V644h-2zM670 622h2V629h-2zM671 640h2V645h-2zM672 632h2V636h-2zM673 642h2V645h-2zM675 631h1V635h-1zM676 639h2V641h-2zM677 639h2V642h-2zM678 639h2V641h-2zM679 632h2V636h-2zM680 630h2V635h-2zM681 642h2V646h-2zM682 634h2V638h-2zM683 639h2V642h-2zM684 641h2V645h-2zM685 644h2V645h-2zM687 640h1V645h-1zM688 632h2V638h-2zM689 639h2V642h-2zM690 638h2V644h-2zM691 638h2V640h-2zM692 641h2V644h-2zM693 632h2V637h-2zM694 640h2V642h-2zM695 645h2V646h-2zM696 633h2V635h-2zM698 638h1V642h-1zM699 642h1V644h-1zM701 642h2V644h-2zM702 639h2V642h-2zM703 638h2V642h-2zM703 628h2V633h-2zM705 639h2V641h-2zM706 639h2V643h-2zM707 638h2V641h-2zM708 628h1V634h-1zM709 640h2V644h-2zM711 639h2V642h-2zM712 641h2V643h-2zM713 635h2V639h-2zM714 636h2V639h-2zM715 641h2V644h-2zM716 637h2V642h-2zM717 642h2V644h-2zM718 640h2V644h-2zM719 639h2V642h-2zM720 634h2V641h-2zM722 637h1V639h-1zM723 640h2V643h-2zM724 641h2V645h-2zM725 637h2V642h-2zM726 639h2V642h-2zM727 639h2V642h-2zM728 637h2V642h-2zM729 637h2V640h-2zM730 637h2V640h-2zM731 636h2V640h-2zM732 640h2V643h-2zM734 638h1V640h-1zM735 640h2V643h-2zM736 645h2V646h-2zM737 633h2V636h-2zM738 636h2V640h-2zM739 641h2V645h-2zM740 643h2V645h-2zM741 637h2V640h-2zM742 635h2V639h-2zM743 639h2V642h-2zM744 625h2V630h-2zM746 640h1V642h-1zM747 642h2V644h-2zM748 633h2V637h-2zM749 640h2V643h-2zM750 641h2V643h-2zM751 640h2V643h-2zM752 633h2V636h-2zM753 635h2V638h-2zM754 639h2V643h-2zM755 627h1V632h-1zM756 633h2V637h-2zM758 635h2V640h-2zM759 642h2V645h-2zM760 635h2V639h-2zM761 640h2V643h-2zM762 647h2V648h-2zM762 626h2V631h-2zM765 634h2V637h-2zM766 639h2V642h-2zM767 637h2V640h-2zM769 641h1V643h-1zM770 636h2V641h-2zM771 636h2V639h-2zM772 643h2V645h-2zM773 637h2V640h-2zM774 631h2V636h-2zM775 643h2V645h-2zM776 637h2V643h-2zM777 638h2V640h-2zM778 641h2V645h-2zM779 641h2V643h-2zM781 638h1V641h-1zM781 630h2V635h-2zM783 641h2V645h-2zM784 635h2V638h-2zM785 638h2V641h-2zM786 633h2V639h-2zM787 635h2V639h-2zM788 639h2V642h-2zM789 637h2V641h-2zM790 643h2V644h-2zM792 642h1V645h-1zM793 640h1V644h-1zM794 640h2V643h-2zM795 636h2V640h-2zM796 643h2V645h-2zM796 626h2V631h-2zM798 641h2V645h-2zM799 642h2V645h-2zM800 632h2V637h-2zM801 636h2V642h-2zM802 632h2V636h-2zM804 632h1V634h-1zM805 640h2V644h-2zM806 642h2V645h-2zM807 632h2V634h-2zM808 641h2V643h-2zM809 646h2V647h-2zM810 637h2V640h-2zM811 638h2V641h-2zM812 641h2V643h-2zM813 639h2V643h-2zM814 637h2V641h-2zM816 639h1V642h-1zM817 636h2V640h-2zM818 645h2V646h-2zM819 641h2V643h-2zM820 637h2V640h-2zM821 637h2V642h-2zM822 630h2V636h-2zM823 641h2V643h-2zM824 640h2V642h-2zM825 647h2V648h-2zM826 633h2V637h-2zM828 642h1V645h-1zM829 638h2V641h-2zM830 639h2V644h-2zM831 639h2V641h-2zM832 637h2V640h-2zM833 640h2V645h-2zM834 639h2V643h-2zM835 643h2V645h-2zM836 632h2V638h-2zM837 640h2V643h-2zM839 641h1V645h-1zM840 641h1V644h-1zM841 634h2V637h-2zM842 635h2V637h-2zM843 634h2V638h-2zM844 641h2V644h-2zM845 641h2V643h-2zM846 633h2V636h-2zM847 640h2V644h-2zM848 641h2V642h-2zM849 640h2V644h-2zM851 642h1V645h-1zM852 633h2V637h-2zM853 635h2V640h-2zM854 637h2V640h-2zM855 646h2V647h-2zM856 633h2V636h-2zM857 634h2V636h-2zM858 630h2V635h-2zM859 645h2V646h-2zM860 641h2V644h-2zM861 638h2V639h-2zM863 640h1V643h-1zM864 639h2V644h-2zM865 639h2V643h-2zM866 638h2V643h-2zM867 635h2V639h-2zM868 636h2V639h-2zM869 640h2V644h-2zM871 641h2V643h-2zM872 640h2V645h-2zM873 638h2V642h-2zM875 638h1V641h-1zM876 638h2V642h-2zM877 642h2V645h-2zM878 645h2V647h-2zM879 632h2V638h-2zM880 642h2V645h-2zM881 632h2V634h-2zM882 635h2V641h-2zM883 635h2V642h-2zM884 641h2V644h-2zM886 633h1V636h-1zM887 642h1V644h-1zM888 640h2V643h-2zM889 639h2V642h-2zM890 640h2V643h-2zM891 638h2V643h-2zM892 640h2V643h-2zM893 641h2V644h-2zM894 640h2V643h-2zM896 638h2V644h-2zM898 638h1V643h-1zM899 641h2V643h-2zM900 638h2V644h-2zM901 642h2V645h-2zM902 644h2V646h-2zM903 637h2V641h-2zM904 638h2V641h-2zM905 638h2V641h-2zM906 643h2V645h-2zM907 639h2V642h-2zM908 640h2V643h-2zM910 633h1V635h-1zM911 640h2V643h-2zM912 635h2V640h-2zM913 642h2V644h-2zM914 642h2V644h-2zM915 641h2V643h-2zM916 629h2V632h-2zM917 633h2V639h-2zM918 638h2V641h-2zM919 642h2V645h-2zM920 637h2V639h-2zM922 640h1V644h-1zM923 632h2V635h-2zM924 646h2V647h-2zM925 637h2V640h-2zM926 636h2V639h-2zM927 647h2V648h-2zM928 631h2V635h-2zM929 637h2V641h-2zM930 643h2V645h-2zM931 640h2V644h-2zM933 639h1V642h-1zM934 641h1V644h-1zM935 639h2V642h-2zM936 638h2V641h-2zM937 638h2V642h-2zM938 632h2V637h-2zM939 637h1V641h-1z"/>
<text transform="translate(768.5 47) rotate(-90)" font-size="10.5" fill="#fff">1597</text>
<text transform="translate(768.5 474) rotate(-90)" font-size="10.5" fill="#fff">56</text>
<rect class="ax" x="66.5" y="13.5" width="875" height="203"/>
<text class="tk" x="61.5" y="220.2">0</text>
<text class="tk" x="61.5" y="178.2">200</text>
<text class="tk" x="61.5" y="137.2">400</text>
<text class="tk" x="61.5" y="96.2">600</text>
<text class="tk" x="61.5" y="55.2">800</text>
<rect class="ax" x="66.5" y="230.5" width="874" height="202"/>
<text class="tk" x="61.5" y="436.2">0</text>
<text class="tk" x="61.5" y="406.2">5</text>
<text class="tk" x="61.5" y="376.2">10</text>
<text class="tk" x="61.5" y="347.2">15</text>
<text class="tk" x="61.5" y="317.2">20</text>
<text class="tk" x="61.5" y="287.2">25</text>
<text class="tk" x="61.5" y="257.2">30</text>
<rect class="ax" x="66.5" y="446.5" width="874" height="202"/>
<text class="tk" x="61.5" y="652.2">0</text>
<text class="tk" x="61.5" y="621.2">5</text>
<text class="tk" x="61.5" y="590.2">10</text>
<text class="tk" x="61.5" y="559.2">15</text>
<text class="tk" x="61.5" y="528.2">20</text>
<text class="tk" x="61.5" y="497.2">25</text>
<text class="tk" x="61.5" y="466.2">30</text>
<text class="yl" transform="translate(31.8 116.3) rotate(-90) scale(1 1.07)"># mutations</text>
<text class="yl" transform="translate(37.7 333.6) rotate(-90) scale(1 1.07)">Mb sequenced</text>
<text class="yl" transform="translate(37.7 549.5) rotate(-90) scale(1 1.07)">mutations / Mb</text>
<text class="lg" x="818" y="40" fill="#40ff40">dbSNP</text>
<text class="lg" x="818" y="60" fill="#800000">silent</text>
<text class="lg" x="818" y="80" fill="#00008b">nonsilent</text>
<g class="xl" transform="rotate(-90) scale(1 1.08)">
<text x="-666.4" y="66.67">BRCA-B6-A1Z6-TP</text><text x="-666.4" y="67.59">BRCA-A7-A06S-TP</text><text x="-666.4" y="68.52">BRCA-AR-A361-TP</text><text x="-666.4" y="70.37">BRCA-AN-A1K9-TP</text><text x="-666.4" y="71.30">BRCA-A1-A0LC-TP</text><text x="-666.4" y="72.22">BRCA-A1-A260-TP</text><text x="-666.4" y="73.15">BRCA-EW-A34J-TP</text><text x="-666.4" y="74.07">BRCA-A8-A0J7-TP</text>
<text x="-666.4" y="75.00">BRCA-S3-A3V2-TP</text><text x="-666.4" y="75.93">BRCA-E9-A22Q-TP</text><text x="-666.4" y="76.85">BRCA-S3-A0TL-TP</text><text x="-666.4" y="77.78">BRCA-D8-A0PT-TP</text><text x="-666.4" y="78.70">BRCA-A7-A36F-TP</text><text x="-666.4" y="80.56">BRCA-A7-A3KB-TP</text><text x="-666.4" y="81.48">BRCA-EW-A0CC-TP</text><text x="-666.4" y="82.41">BRCA-LL-A2T8-TP</text>
<text x="-666.4" y="83.33">BRCA-A2-A2AE-TP</text><text x="-666.4" y="84.26">BRCA-AQ-A0N2-TP</text><text x="-666.4" y="85.19">BRCA-BH-A1CX-TP</text><text x="-666.4" y="86.11">BRCA-AN-A305-TP</text><text x="-666.4" y="87.04">BRCA-E9-A08T-TP</text><text x="-666.4" y="87.96">BRCA-B6-A23S-TP</text><text x="-667.4" y="88.89">BRCA-AQ-A2A2-TP</text><text x="-666.4" y="89.81">BRCA-D8-A00J-TP</text>
<text x="-666.4" y="91.67">BRCA-PE-A25Y-TP</text><text x="-666.4" y="92.59">BRCA-E2-A27B-TP</text><text x="-666.4" y="93.52">BRCA-S3-A0ZS-TP</text><text x="-666.4" y="94.44">BRCA-C8-A2MZ-TP</text><text x="-666.4" y="95.37">BRCA-E2-A2V0-TP</text><text x="-666.4" y="96.30">BRCA-A1-A1V8-TP</text><text x="-666.4" y="97.22">BRCA-BH-A1WM-TP</text><text x="-667.4" y="98.15">BRCA-PE-A0GW-TP</text>
<text x="-666.4" y="99.07">BRCA-S3-A14L-TP</text><text x="-666.4" y="100.00">BRCA-PE-A14T-TP</text><text x="-666.4" y="100.93">BRCA-A8-A09N-TP</text><text x="-666.4" y="102.78">BRCA-LL-A1TX-TP</text><text x="-666.4" y="103.70">BRCA-PE-A0YJ-TP</text><text x="-666.4" y="104.63">BRCA-AC-A25Y-TP</text><text x="-667.4" y="105.56">BRCA-C8-A32C-TP</text><text x="-667.4" y="106.48">BRCA-AN-A1A6-TP</text>
<text x="-666.4" y="107.41">BRCA-OL-A3QC-TP</text><text x="-666.4" y="108.33">BRCA-S3-A2XQ-TP</text><text x="-666.4" y="109.26">BRCA-LL-A2HR-TP</text><text x="-665.4" y="110.19">BRCA-AC-A13D-TP</text><text x="-666.4" y="111.11">BRCA-A8-A18V-TP</text><text x="-666.4" y="112.04">BRCA-A1-A3DH-TP</text><text x="-666.4" y="113.89">BRCA-BH-A3DY-TP</text><text x="-666.4" y="114.81">BRCA-A8-A0LR-TP</text>
<text x="-666.4" y="115.74">BRCA-AN-A071-TP</text><text x="-666.4" y="116.67">BRCA-BH-A1T9-TP</text><text x="-666.4" y="117.59">BRCA-A2-A3WA-TP</text><text x="-666.4" y="118.52">BRCA-AN-A0HD-TP</text><text x="-666.4" y="119.44">BRCA-A2-A088-TP</text><text x="-666.4" y="120.37">BRCA-AO-A2EY-TP</text><text x="-666.4" y="121.30">BRCA-E9-A2ZS-TP</text><text x="-666.4" y="122.22">BRCA-D8-A3HJ-TP</text>
<text x="-666.4" y="124.07">BRCA-E9-A0MC-TP</text><text x="-666.4" y="125.00">BRCA-OL-A3C3-TP</text><text x="-667.4" y="125.93">BRCA-PE-A3W2-TP</text><text x="-666.4" y="126.85">BRCA-EW-A3BR-TP</text><text x="-666.4" y="127.78">BRCA-BH-A03Q-TP</text><text x="-666.4" y="128.70">BRCA-A1-A2ZS-TP</text><text x="-666.4" y="129.63">BRCA-A8-A3GW-TP</text><text x="-666.4" y="130.56">BRCA-A8-A06K-TP</text>
<text x="-666.4" y="131.48">BRCA-E9-A09F-TP</text><text x="-666.4" y="132.41">BRCA-S3-A3MB-TP</text><text x="-666.4" y="133.33">BRCA-A8-A0H6-TP</text><text x="-667.4" y="135.19">BRCA-C8-A2FC-TP</text><text x="-667.4" y="136.11">BRCA-LL-A1GG-TP</text><text x="-666.4" y="137.04">BRCA-A2-A2ME-TP</text><text x="-666.4" y="137.96">BRCA-AO-A151-TP</text><text x="-667.4" y="138.89">BRCA-OL-A3Y2-TP</text>
<text x="-666.4" y="139.81">BRCA-E9-A12L-TP</text><text x="-666.4" y="140.74">BRCA-LL-A3K1-TP</text><text x="-666.4" y="141.67">BRCA-AN-A1G7-TP</text><text x="-666.4" y="142.59">BRCA-AC-A3MJ-TP</text><text x="-667.4" y="143.52">BRCA-AR-A18W-TP</text><text x="-666.4" y="144.44">BRCA-AQ-A22T-TP</text><text x="-666.4" y="146.30">BRCA-C8-A0T6-TP</text><text x="-666.4" y="147.22">BRCA-AR-A1ZR-TP</text>
<text x="-666.4" y="148.15">BRCA-AN-A36P-TP</text><text x="-666.4" y="149.07">BRCA-PE-A06E-TP</text><text x="-666.4" y="150.00">BRCA-E9-A05Q-TP</text><text x="-666.4" y="150.93">BRCA-PE-A0PS-TP</text><text x="-666.4" y="151.85">BRCA-AR-A2JM-TP</text><text x="-666.4" y="152.78">BRCA-S3-A0SL-TP</text><text x="-666.4" y="153.70">BRCA-D8-A13F-TP</text><text x="-666.4" y="154.63">BRCA-A7-A0FS-TP</text>
<text x="-666.4" y="155.56">BRCA-C8-A0Y4-TP</text><text x="-666.4" y="157.41">BRCA-S3-A2AB-TP</text><text x="-666.4" y="158.33">BRCA-EW-A37E-TP</text><text x="-666.4" y="159.26">BRCA-LL-A31J-TP</text><text x="-666.4" y="160.19">BRCA-A8-A2E3-TP</text><text x="-667.4" y="161.11">BRCA-AC-A2G9-TP</text><text x="-666.4" y="162.04">BRCA-E2-A24U-TP</text><text x="-666.4" y="162.96">BRCA-S3-A2GX-TP</text>
<text x="-666.4" y="163.89">BRCA-AQ-A078-TP</text><text x="-666.4" y="164.81">BRCA-C8-A1KM-TP</text><text x="-667.4" y="165.74">BRCA-PE-A3HG-TP</text><text x="-666.4" y="167.59">BRCA-AN-A22V-TP</text><text x="-666.4" y="168.52">BRCA-GM-A3VM-TP</text><text x="-666.4" y="169.44">BRCA-A8-A11Y-TP</text><text x="-666.4" y="170.37">BRCA-BH-A3DJ-TP</text><text x="-666.4" y="171.30">BRCA-AC-A2R8-TP</text>
<text x="-666.4" y="172.22">BRCA-D8-A34E-TP</text><text x="-666.4" y="173.15">BRCA-A8-A1TG-TP</text><text x="-666.4" y="174.07">BRCA-LL-A0MN-TP</text><text x="-666.4" y="175.00">BRCA-S3-A3JK-TP</text><text x="-666.4" y="175.93">BRCA-AR-A1MN-TP</text><text x="-666.4" y="176.85">BRCA-E2-A2B4-TP</text><text x="-667.4" y="178.70">BRCA-E9-A2V7-TP</text><text x="-666.4" y="179.63">BRCA-S3-A26B-TP</text>
<text x="-666.4" y="180.56">BRCA-PE-A0GQ-TP</text><text x="-666.4" y="181.48">BRCA-AC-A3NN-TP</text><text x="-666.4" y="182.41">BRCA-AR-A084-TP</text><text x="-666.4" y="183.33">BRCA-C8-A1J5-TP</text><text x="-666.4" y="184.26">BRCA-OL-A0BZ-TP</text><text x="-667.4" y="185.19">BRCA-AC-A07B-TP</text><text x="-666.4" y="186.11">BRCA-D8-A2YJ-TP</text><text x="-667.4" y="187.04">BRCA-OL-A0FX-TP</text>
<text x="-666.4" y="187.96">BRCA-AR-A0N3-TP</text><text x="-666.4" y="189.81">BRCA-B6-A3WG-TP</text><text x="-666.4" y="190.74">BRCA-EW-A0NL-TP</text><text x="-666.4" y="191.67">BRCA-A5-A03P-TP</text><text x="-666.4" y="192.59">BRCA-C8-A055-TP</text><text x="-666.4" y="193.52">BRCA-E9-A3M5-TP</text><text x="-666.4" y="194.44">BRCA-BH-A2Z4-TP</text><text x="-666.4" y="195.37">BRCA-OL-A3QA-TP</text>
<text x="-666.4" y="196.30">BRCA-BH-A2K5-TP</text><text x="-666.4" y="197.22">BRCA-AO-A1BL-TP</text><text x="-666.4" y="198.15">BRCA-AC-A1BJ-TP</text><text x="-666.4" y="199.07">BRCA-AO-A37M-TP</text><text x="-666.4" y="200.93">BRCA-A1-A34W-TP</text><text x="-666.4" y="201.85">BRCA-A2-A11C-TP</text><text x="-666.4" y="202.78">BRCA-A1-A1RG-TP</text><text x="-666.4" y="203.70">BRCA-AR-A1XH-TP</text>
<text x="-667.4" y="204.63">BRCA-A8-A0UT-TP</text><text x="-666.4" y="205.56">BRCA-GM-A27R-TP</text><text x="-666.4" y="206.48">BRCA-A1-A2YW-TP</text><text x="-666.4" y="207.41">BRCA-S3-A3FA-TP</text><text x="-666.4" y="208.33">BRCA-S3-A0BL-TP</text><text x="-666.4" y="209.26">BRCA-A5-A0N8-TP</text><text x="-666.4" y="211.11">BRCA-AR-A3X6-TP</text><text x="-666.4" y="212.04">BRCA-S3-A00V-TP</text>
<text x="-666.4" y="212.96">BRCA-PE-A3FU-TP</text><text x="-666.4" y="213.89">BRCA-EW-A080-TP</text><text x="-666.4" y="214.81">BRCA-AQ-A3M0-TP</text><text x="-666.4" y="215.74">BRCA-AQ-A2MZ-TP</text><text x="-666.4" y="216.67">BRCA-GM-A146-TP</text><text x="-666.4" y="217.59">BRCA-AO-A37C-TP</text><text x="-666.4" y="218.52">BRCA-A1-A3FG-TP</text><text x="-666.4" y="219.44">BRCA-OL-A0D4-TP</text>
<text x="-666.4" y="220.37">BRCA-PE-A2ZA-TP</text><text x="-666.4" y="222.22">BRCA-E9-A0XV-TP</text><text x="-667.4" y="223.15">BRCA-A7-A1RD-TP</text><text x="-666.4" y="224.07">BRCA-PE-A1AH-TP</text><text x="-666.4" y="225.00">BRCA-AR-A182-TP</text><text x="-666.4" y="225.93">BRCA-OL-A2N5-TP</text><text x="-666.4" y="226.85">BRCA-A7-A0HB-TP</text><text x="-666.4" y="227.78">BRCA-A8-A1SF-TP</text>
<text x="-666.4" y="228.70">BRCA-E9-A1G7-TP</text><text x="-666.4" y="229.63">BRCA-E2-A34H-TP</text><text x="-666.4" y="230.56">BRCA-OL-A30P-TP</text><text x="-666.4" y="231.48">BRCA-A1-A3VE-TP</text><text x="-666.4" y="233.33">BRCA-AR-A3EZ-TP</text><text x="-666.4" y="234.26">BRCA-PE-A09P-TP</text><text x="-666.4" y="235.19">BRCA-A2-A2R3-TP</text><text x="-666.4" y="236.11">BRCA-BH-A1WL-TP</text>
<text x="-666.4" y="237.04">BRCA-AR-A152-TP</text><text x="-666.4" y="237.96">BRCA-AR-A362-TP</text><text x="-666.4" y="238.89">BRCA-LL-A0UB-TP</text><text x="-666.4" y="239.81">BRCA-A8-A0KU-TP</text><text x="-666.4" y="240.74">BRCA-A2-A3CN-TP</text><text x="-666.4" y="241.67">BRCA-BH-A33C-TP</text><text x="-666.4" y="242.59">BRCA-AR-A2KG-TP</text><text x="-666.4" y="244.44">BRCA-EW-A3EP-TP</text>
<text x="-666.4" y="245.37">BRCA-C8-A3ZL-TP</text><text x="-666.4" y="246.30">BRCA-GM-A39Q-TP</text><text x="-666.4" y="247.22">BRCA-C8-A2B5-TP</text><text x="-665.4" y="248.15">BRCA-E2-A2R9-TP</text><text x="-667.4" y="249.07">BRCA-AN-A1BL-TP</text><text x="-667.4" y="250.00">BRCA-A1-A15Y-TP</text><text x="-666.4" y="250.93">BRCA-E2-A07M-TP</text><text x="-666.4" y="251.85">BRCA-BH-A3XD-TP</text>
<text x="-666.4" y="252.78">BRCA-A8-A3VS-TP</text><text x="-666.4" y="254.63">BRCA-A5-A3SX-TP</text><text x="-667.4" y="255.56">BRCA-EW-A0LR-TP</text><text x="-665.4" y="256.48">BRCA-EW-A2JT-TP</text><text x="-666.4" y="257.41">BRCA-A2-A07D-TP</text><text x="-666.4" y="258.33">BRCA-GM-A398-TP</text><text x="-666.4" y="259.26">BRCA-AC-A1UM-TP</text><text x="-666.4" y="260.19">BRCA-AN-A02Y-TP</text>
<text x="-667.4" y="261.11">BRCA-BH-A24U-TP</text><text x="-666.4" y="262.04">BRCA-AN-A2J9-TP</text><text x="-666.4" y="262.96">BRCA-A5-A15T-TP</text><text x="-666.4" y="263.89">BRCA-LL-A07J-TP</text><text x="-666.4" y="265.74">BRCA-BH-A03E-TP</text><text x="-666.4" y="266.67">BRCA-AC-A34N-TP</text><text x="-666.4" y="267.59">BRCA-E2-A101-TP</text><text x="-666.4" y="268.52">BRCA-BH-A1CW-TP</text>
<text x="-666.4" y="269.44">BRCA-E9-A2CJ-TP</text><text x="-667.4" y="270.37">BRCA-EW-A07Q-TP</text><text x="-667.4" y="271.30">BRCA-A7-A0HA-TP</text><text x="-666.4" y="272.22">BRCA-A7-A3T6-TP</text><text x="-666.4" y="273.15">BRCA-C8-A0MR-TP</text><text x="-666.4" y="274.07">BRCA-AO-A1KM-TP</text><text x="-666.4" y="275.00">BRCA-GM-A3AK-TP</text><text x="-666.4" y="276.85">BRCA-AO-A1VN-TP</text>
<text x="-667.4" y="277.78">BRCA-AN-A1D9-TP</text><text x="-666.4" y="278.70">BRCA-AQ-A10G-TP</text><text x="-666.4" y="279.63">BRCA-AO-A0TG-TP</text><text x="-666.4" y="280.56">BRCA-AN-A2J0-TP</text><text x="-667.4" y="281.48">BRCA-OL-A0NA-TP</text><text x="-666.4" y="282.41">BRCA-AN-A3RE-TP</text><text x="-666.4" y="283.33">BRCA-A5-A0W6-TP</text><text x="-666.4" y="284.26">BRCA-E2-A325-TP</text>
<text x="-666.4" y="285.19">BRCA-C8-A3K5-TP</text><text x="-667.4" y="286.11">BRCA-AR-A2MV-TP</text><text x="-666.4" y="287.96">BRCA-AO-A2TN-TP</text><text x="-666.4" y="288.89">BRCA-OL-A02M-TP</text><text x="-667.4" y="289.81">BRCA-A1-A1H1-TP</text><text x="-666.4" y="290.74">BRCA-S3-A29T-TP</text><text x="-666.4" y="291.67">BRCA-AQ-A3WK-TP</text><text x="-666.4" y="292.59">BRCA-AR-A258-TP</text>
<text x="-666.4" y="293.52">BRCA-PE-A2YY-TP</text><text x="-666.4" y="294.44">BRCA-D8-A2VT-TP</text><text x="-666.4" y="295.37">BRCA-OL-A1XR-TP</text><text x="-666.4" y="296.30">BRCA-BH-A3J6-TP</text><text x="-666.4" y="298.15">BRCA-AO-A3DE-TP</text><text x="-666.4" y="299.07">BRCA-AQ-A2DR-TP</text><text x="-666.4" y="300.00">BRCA-E9-A1EZ-TP</text><text x="-666.4" y="300.93">BRCA-A2-A3H3-TP</text>
<text x="-666.4" y="301.85">BRCA-E9-A2AV-TP</text><text x="-666.4" y="302.78">BRCA-E2-A34Z-TP</text><text x="-666.4" y="303.70">BRCA-S3-A07K-TP</text><text x="-666.4" y="304.63">BRCA-A1-A2EA-TP</text><text x="-666.4" y="305.56">BRCA-A7-A1W3-TP</text><text x="-666.4" y="306.48">BRCA-A1-A0W4-TP</text><text x="-666.4" y="307.41">BRCA-AR-A3XH-TP</text><text x="-666.4" y="309.26">BRCA-E9-A16J-TP</text>
<text x="-666.4" y="310.19">BRCA-C8-A1HM-TP</text><text x="-666.4" y="311.11">BRCA-A7-A3BY-TP</text><text x="-666.4" y="312.04">BRCA-A5-A16T-TP</text><text x="-666.4" y="312.96">BRCA-AR-A3V3-TP</text><text x="-666.4" y="313.89">BRCA-PE-A0E4-TP</text><text x="-666.4" y="314.81">BRCA-D8-A0AW-TP</text><text x="-666.4" y="315.74">BRCA-EW-A0X2-TP</text><text x="-667.4" y="316.67">BRCA-B6-A2N1-TP</text>
<text x="-666.4" y="317.59">BRCA-A2-A089-TP</text><text x="-666.4" y="318.52">BRCA-A7-A1Q6-TP</text><text x="-667.4" y="320.37">BRCA-AQ-A3UY-TP</text><text x="-666.4" y="321.30">BRCA-S3-A1NV-TP</text><text x="-666.4" y="322.22">BRCA-LL-A1Z9-TP</text><text x="-666.4" y="323.15">BRCA-LL-A14D-TP</text><text x="-666.4" y="324.07">BRCA-C8-A17P-TP</text><text x="-666.4" y="325.00">BRCA-A8-A3H8-TP</text>
<text x="-666.4" y="325.93">BRCA-AR-A2MC-TP</text><text x="-666.4" y="326.85">BRCA-B6-A3DR-TP</text><text x="-666.4" y="327.78">BRCA-E9-A1MU-TP</text><text x="-666.4" y="328.70">BRCA-BH-A0XH-TP</text><text x="-666.4" y="329.63">BRCA-C8-A3ML-TP</text><text x="-666.4" y="331.48">BRCA-AR-A1ZQ-TP</text><text x="-666.4" y="332.41">BRCA-AC-A33M-TP</text><text x="-666.4" y="333.33">BRCA-GM-A2DF-TP</text>
<text x="-666.4" y="334.26">BRCA-GM-A3BM-TP</text><text x="-666.4" y="335.19">BRCA-EW-A3Q0-TP</text><text x="-666.4" y="336.11">BRCA-A5-A216-TP</text><text x="-666.4" y="337.04">BRCA-A8-A3XK-TP</text><text x="-666.4" y="337.96">BRCA-A8-A29K-TP</text><text x="-666.4" y="338.89">BRCA-A5-A14Z-TP</text><text x="-666.4" y="339.81">BRCA-LL-A2NF-TP</text><text x="-667.4" y="341.67">BRCA-AQ-A2UW-TP</text>
<text x="-666.4" y="342.59">BRCA-PE-A2A3-TP</text><text x="-666.4" y="343.52">BRCA-E2-A36Z-TP</text><text x="-666.4" y="344.44">BRCA-B6-A2N0-TP</text><text x="-666.4" y="345.37">BRCA-D8-A1W7-TP</text><text x="-666.4" y="346.30">BRCA-E9-A3N2-TP</text><text x="-666.4" y="347.22">BRCA-E2-A0D6-TP</text><text x="-666.4" y="348.15">BRCA-AO-A1HG-TP</text><text x="-666.4" y="349.07">BRCA-A8-A38W-TP</text>
<text x="-666.4" y="350.00">BRCA-A7-A3TW-TP</text><text x="-666.4" y="350.93">BRCA-BH-A0PH-TP</text><text x="-667.4" y="352.78">BRCA-EW-A1SZ-TP</text><text x="-666.4" y="353.70">BRCA-AO-A28N-TP</text><text x="-666.4" y="354.63">BRCA-B6-A2YX-TP</text><text x="-667.4" y="355.56">BRCA-A8-A1FQ-TP</text><text x="-666.4" y="356.48">BRCA-D8-A0WK-TP</text><text x="-666.4" y="357.41">BRCA-S3-A3T8-TP</text>
<text x="-667.4" y="358.33">BRCA-GM-A383-TP</text><text x="-666.4" y="359.26">BRCA-EW-A2UT-TP</text><text x="-666.4" y="360.19">BRCA-E9-A1CC-TP</text><text x="-666.4" y="361.11">BRCA-PE-A0PJ-TP</text><text x="-666.4" y="362.04">BRCA-AR-A2SC-TP</text><text x="-666.4" y="363.89">BRCA-LL-A2NH-TP</text><text x="-666.4" y="364.81">BRCA-A7-A33U-TP</text><text x="-666.4" y="365.74">BRCA-AQ-A2LS-TP</text>
<text x="-665.4" y="366.67">BRCA-OL-A0JG-TP</text><text x="-666.4" y="367.59">BRCA-A7-A354-TP</text><text x="-666.4" y="368.52">BRCA-A1-A0U2-TP</text><text x="-666.4" y="369.44">BRCA-A2-A29W-TP</text><text x="-666.4" y="370.37">BRCA-E2-A0CP-TP</text><text x="-666.4" y="371.30">BRCA-AQ-A3WQ-TP</text><text x="-666.4" y="372.22">BRCA-B6-A0YP-TP</text><text x="-666.4" y="373.15">BRCA-EW-A3G1-TP</text>
<text x="-666.4" y="375.00">BRCA-LL-A0RU-TP</text><text x="-666.4" y="375.93">BRCA-E9-A0XQ-TP</text><text x="-666.4" y="376.85">BRCA-LL-A20P-TP</text><text x="-666.4" y="377.78">BRCA-EW-A2EM-TP</text><text x="-666.4" y="378.70">BRCA-AC-A0UK-TP</text><text x="-666.4" y="379.63">BRCA-AN-A29L-TP</text><text x="-666.4" y="380.56">BRCA-AC-A2HE-TP</text><text x="-665.4" y="381.48">BRCA-A5-A12B-TP</text>
<text x="-666.4" y="382.41">BRCA-A5-A0D8-TP</text><text x="-666.4" y="383.33">BRCA-A1-A0YU-TP</text><text x="-666.4" y="384.26">BRCA-A5-A3VV-TP</text><text x="-666.4" y="386.11">BRCA-C8-A01C-TP</text><text x="-666.4" y="387.04">BRCA-S3-A1RF-TP</text><text x="-667.4" y="387.96">BRCA-E9-A1LF-TP</text><text x="-666.4" y="388.89">BRCA-C8-A07E-TP</text><text x="-666.4" y="389.81">BRCA-A5-A02X-TP</text>
<text x="-666.4" y="390.74">BRCA-E9-A35X-TP</text><text x="-666.4" y="391.67">BRCA-A1-A2V6-TP</text><text x="-666.4" y="392.59">BRCA-BH-A3SP-TP</text><text x="-666.4" y="393.52">BRCA-PE-A262-TP</text><text x="-667.4" y="394.44">BRCA-AR-A2DR-TP</text><text x="-666.4" y="396.30">BRCA-A2-A3R0-TP</text><text x="-666.4" y="397.22">BRCA-A8-A184-TP</text><text x="-666.4" y="398.15">BRCA-EW-A203-TP</text>
<text x="-666.4" y="399.07">BRCA-E2-A3Z1-TP</text><text x="-666.4" y="400.00">BRCA-B6-A1QN-TP</text><text x="-666.4" y="400.93">BRCA-A1-A3G1-TP</text><text x="-666.4" y="401.85">BRCA-E9-A3N6-TP</text><text x="-666.4" y="402.78">BRCA-PE-A1BN-TP</text><text x="-666.4" y="403.70">BRCA-S3-A0J1-TP</text><text x="-667.4" y="404.63">BRCA-A8-A0GP-TP</text><text x="-667.4" y="405.56">BRCA-C8-A133-TP</text>
<text x="-666.4" y="407.41">BRCA-AO-A137-TP</text><text x="-666.4" y="408.33">BRCA-GM-A0SB-TP</text><text x="-667.4" y="409.26">BRCA-D8-A20P-TP</text><text x="-666.4" y="410.19">BRCA-C8-A1FP-TP</text><text x="-666.4" y="411.11">BRCA-B6-A1XQ-TP</text><text x="-666.4" y="412.04">BRCA-A7-A2VP-TP</text><text x="-666.4" y="412.96">BRCA-AR-A3A8-TP</text><text x="-666.4" y="413.89">BRCA-B6-A1TE-TP</text>
<text x="-666.4" y="414.81">BRCA-E2-A1UK-TP</text><text x="-666.4" y="415.74">BRCA-AR-A1H5-TP</text><text x="-666.4" y="416.67">BRCA-A2-A3SU-TP</text><text x="-666.4" y="418.52">BRCA-AC-A14P-TP</text><text x="-666.4" y="419.44">BRCA-S3-A0G2-TP</text><text x="-666.4" y="420.37">BRCA-E9-A2RS-TP</text><text x="-666.4" y="421.30">BRCA-OL-A0BM-TP</text><text x="-666.4" y="422.22">BRCA-E2-A1QW-TP</text>
<text x="-666.4" y="423.15">BRCA-D8-A02X-TP</text><text x="-667.4" y="424.07">BRCA-A1-A344-TP</text><text x="-666.4" y="425.00">BRCA-AO-A3AH-TP</text><text x="-666.4" y="425.93">BRCA-E2-A3T0-TP</text><text x="-666.4" y="426.85">BRCA-AR-A306-TP</text><text x="-666.4" y="427.78">BRCA-E2-A0X6-TP</text><text x="-666.4" y="429.63">BRCA-AQ-A3A6-TP</text><text x="-666.4" y="430.56">BRCA-C8-A1QH-TP</text>
<text x="-666.4" y="431.48">BRCA-AO-A1SW-TP</text><text x="-666.4" y="432.41">BRCA-AQ-A0QX-TP</text><text x="-666.4" y="433.33">BRCA-OL-A00L-TP</text><text x="-666.4" y="434.26">BRCA-AC-A3Y7-TP</text><text x="-666.4" y="435.19">BRCA-GM-A3FG-TP</text><text x="-666.4" y="436.11">BRCA-A7-A0NG-TP</text><text x="-666.4" y="437.04">BRCA-S3-A2BP-TP</text><text x="-666.4" y="437.96">BRCA-GM-A0H8-TP</text>
<text x="-666.4" y="439.81">BRCA-AR-A24V-TP</text><text x="-666.4" y="440.74">BRCA-A1-A1AP-TP</text><text x="-666.4" y="441.67">BRCA-EW-A1Y4-TP</text><text x="-666.4" y="442.59">BRCA-EW-A3JV-TP</text><text x="-666.4" y="443.52">BRCA-C8-A0QL-TP</text><text x="-666.4" y="444.44">BRCA-D8-A30R-TP</text><text x="-666.4" y="445.37">BRCA-AQ-A2UX-TP</text><text x="-666.4" y="446.30">BRCA-AO-A2ZE-TP</text>
<text x="-667.4" y="447.22">BRCA-E9-A251-TP</text><text x="-666.4" y="448.15">BRCA-AC-A3PG-TP</text><text x="-666.4" y="449.07">BRCA-A1-A24D-TP</text><text x="-666.4" y="450.93">BRCA-GM-A279-TP</text><text x="-666.4" y="451.85">BRCA-AR-A2FE-TP</text><text x="-666.4" y="452.78">BRCA-GM-A3LN-TP</text><text x="-667.4" y="453.70">BRCA-AN-A2AM-TP</text><text x="-666.4" y="454.63">BRCA-PE-A15H-TP</text>
<text x="-665.4" y="455.56">BRCA-S3-A19G-TP</text><text x="-666.4" y="456.48">BRCA-GM-A27C-TP</text><text x="-666.4" y="457.41">BRCA-PE-A2UM-TP</text><text x="-666.4" y="458.33">BRCA-LL-A3V9-TP</text><text x="-666.4" y="459.26">BRCA-B6-A0NC-TP</text><text x="-666.4" y="460.19">BRCA-AQ-A0YA-TP</text><text x="-666.4" y="462.04">BRCA-A5-A1WG-TP</text><text x="-666.4" y="462.96">BRCA-E2-A168-TP</text>
<text x="-666.4" y="463.89">BRCA-A2-A0QW-TP</text><text x="-666.4" y="464.81">BRCA-C8-A1YY-TP</text><text x="-666.4" y="465.74">BRCA-AN-A331-TP</text><text x="-666.4" y="466.67">BRCA-E9-A0FT-TP</text><text x="-667.4" y="467.59">BRCA-E2-A0AM-TP</text><text x="-666.4" y="468.52">BRCA-A8-A3C1-TP</text><text x="-666.4" y="469.44">BRCA-EW-A1E3-TP</text><text x="-666.4" y="470.37">BRCA-BH-A2M3-TP</text>
<text x="-666.4" y="471.30">BRCA-E2-A3BQ-TP</text><text x="-666.4" y="473.15">BRCA-E2-A10Z-TP</text><text x="-666.4" y="474.07">BRCA-C8-A1QZ-TP</text><text x="-666.4" y="475.00">BRCA-A1-A1L7-TP</text><text x="-666.4" y="475.93">BRCA-AN-A394-TP</text><text x="-666.4" y="476.85">BRCA-AO-A3S0-TP</text><text x="-666.4" y="477.78">BRCA-E9-A0P0-TP</text><text x="-666.4" y="478.70">BRCA-AR-A2YS-TP</text>
<text x="-666.4" y="479.63">BRCA-S3-A33K-TP</text><text x="-666.4" y="480.56">BRCA-AC-A0UW-TP</text><text x="-666.4" y="481.48">BRCA-BH-A1N1-TP</text><text x="-666.4" y="483.33">BRCA-AR-A19Q-TP</text><text x="-666.4" y="484.26">BRCA-LL-A24R-TP</text><text x="-666.4" y="485.19">BRCA-A8-A08B-TP</text><text x="-666.4" y="486.11">BRCA-LL-A3CV-TP</text><text x="-666.4" y="487.04">BRCA-E2-A19J-TP</text>
<text x="-666.4" y="487.96">BRCA-AO-A30S-TP</text><text x="-666.4" y="488.89">BRCA-AO-A3FN-TP</text><text x="-666.4" y="489.81">BRCA-A1-A3D2-TP</text><text x="-666.4" y="490.74">BRCA-A8-A3W2-TP</text><text x="-667.4" y="491.67">BRCA-E2-A3E5-TP</text><text x="-666.4" y="492.59">BRCA-A7-A24H-TP</text><text x="-666.4" y="494.44">BRCA-A7-A1YT-TP</text><text x="-667.4" y="495.37">BRCA-B6-A22D-TP</text>
<text x="-666.4" y="496.30">BRCA-LL-A0KN-TP</text><text x="-666.4" y="497.22">BRCA-PE-A0NY-TP</text><text x="-666.4" y="498.15">BRCA-A7-A118-TP</text><text x="-666.4" y="499.07">BRCA-A8-A2P0-TP</text><text x="-666.4" y="500.00">BRCA-EW-A1GC-TP</text><text x="-666.4" y="500.93">BRCA-A7-A2NM-TP</text><text x="-666.4" y="501.85">BRCA-A7-A2E7-TP</text><text x="-666.4" y="502.78">BRCA-AN-A1RQ-TP</text>
<text x="-666.4" y="503.70">BRCA-BH-A3DQ-TP</text><text x="-666.4" y="505.56">BRCA-S3-A2EM-TP</text><text x="-666.4" y="506.48">BRCA-OL-A04H-TP</text><text x="-666.4" y="507.41">BRCA-B6-A0MJ-TP</text><text x="-666.4" y="508.33">BRCA-D8-A13B-TP</text><text x="-666.4" y="509.26">BRCA-GM-A185-TP</text><text x="-666.4" y="510.19">BRCA-E9-A1Q9-TP</text><text x="-666.4" y="511.11">BRCA-AN-A32B-TP</text>
<text x="-666.4" y="512.04">BRCA-A8-A12L-TP</text><text x="-666.4" y="512.96">BRCA-A5-A0MR-TP</text><text x="-666.4" y="513.89">BRCA-OL-A265-TP</text><text x="-667.4" y="514.81">BRCA-A8-A2DB-TP</text><text x="-666.4" y="516.67">BRCA-D8-A0EM-TP</text><text x="-666.4" y="517.59">BRCA-A1-A26A-TP</text><text x="-666.4" y="518.52">BRCA-EW-A3DS-TP</text><text x="-666.4" y="519.44">BRCA-AQ-A2PE-TP</text>
<text x="-666.4" y="520.37">BRCA-LL-A20K-TP</text><text x="-667.4" y="521.30">BRCA-A7-A178-TP</text><text x="-666.4" y="522.22">BRCA-E9-A2E9-TP</text><text x="-666.4" y="523.15">BRCA-D8-A1NQ-TP</text><text x="-666.4" y="524.07">BRCA-LL-A35U-TP</text><text x="-666.4" y="525.00">BRCA-AN-A1AR-TP</text><text x="-666.4" y="526.85">BRCA-GM-A221-TP</text><text x="-666.4" y="527.78">BRCA-AC-A210-TP</text>
<text x="-666.4" y="528.70">BRCA-C8-A0WG-TP</text><text x="-666.4" y="529.63">BRCA-E9-A3S5-TP</text><text x="-666.4" y="530.56">BRCA-B6-A36L-TP</text><text x="-666.4" y="531.48">BRCA-LL-A37P-TP</text><text x="-666.4" y="532.41">BRCA-C8-A0UU-TP</text><text x="-666.4" y="533.33">BRCA-LL-A1CC-TP</text><text x="-666.4" y="534.26">BRCA-AC-A303-TP</text><text x="-666.4" y="535.19">BRCA-AN-A002-TP</text>
<text x="-666.4" y="536.11">BRCA-B6-A1MZ-TP</text><text x="-666.4" y="537.96">BRCA-LL-A2YB-TP</text><text x="-666.4" y="538.89">BRCA-PE-A0T7-TP</text><text x="-666.4" y="539.81">BRCA-A1-A10C-TP</text><text x="-666.4" y="540.74">BRCA-A1-A0RW-TP</text><text x="-666.4" y="541.67">BRCA-A7-A31A-TP</text><text x="-666.4" y="542.59">BRCA-A1-A24J-TP</text><text x="-666.4" y="543.52">BRCA-B6-A138-TP</text>
<text x="-666.4" y="544.44">BRCA-A7-A0RB-TP</text><text x="-666.4" y="545.37">BRCA-D8-A24C-TP</text><text x="-666.4" y="546.30">BRCA-A7-A2H6-TP</text><text x="-666.4" y="547.22">BRCA-B6-A3MW-TP</text><text x="-666.4" y="549.07">BRCA-E2-A2XG-TP</text><text x="-666.4" y="550.00">BRCA-AO-A3FX-TP</text><text x="-666.4" y="550.93">BRCA-E2-A1FJ-TP</text><text x="-666.4" y="551.85">BRCA-C8-A39U-TP</text>
<text x="-666.4" y="552.78">BRCA-E9-A0NG-TP</text><text x="-666.4" y="553.70">BRCA-LL-A1SW-TP</text><text x="-666.4" y="554.63">BRCA-AR-A1L9-TP</text><text x="-666.4" y="555.56">BRCA-AN-A1XW-TP</text><text x="-666.4" y="556.48">BRCA-B6-A0M1-TP</text><text x="-666.4" y="557.41">BRCA-B6-A2VD-TP</text><text x="-666.4" y="558.33">BRCA-E2-A2VX-TP</text><text x="-666.4" y="560.19">BRCA-GM-A0XN-TP</text>
<text x="-666.4" y="561.11">BRCA-BH-A3Q4-TP</text><text x="-667.4" y="562.04">BRCA-AR-A2G6-TP</text><text x="-666.4" y="562.96">BRCA-AC-A3MX-TP</text><text x="-665.4" y="563.89">BRCA-A2-A2DT-TP</text><text x="-666.4" y="564.81">BRCA-B6-A2ZS-TP</text><text x="-666.4" y="565.74">BRCA-GM-A1KW-TP</text><text x="-666.4" y="566.67">BRCA-E2-A1VW-TP</text><text x="-666.4" y="567.59">BRCA-A7-A3QH-TP</text>
<text x="-666.4" y="568.52">BRCA-A8-A18B-TP</text><text x="-666.4" y="570.37">BRCA-BH-A2UP-TP</text><text x="-666.4" y="571.30">BRCA-A7-A0H3-TP</text><text x="-666.4" y="572.22">BRCA-AC-A1L8-TP</text><text x="-666.4" y="573.15">BRCA-BH-A23D-TP</text><text x="-666.4" y="574.07">BRCA-A1-A38T-TP</text><text x="-666.4" y="575.00">BRCA-BH-A1YB-TP</text><text x="-666.4" y="575.93">BRCA-A7-A1JP-TP</text>
<text x="-666.4" y="576.85">BRCA-A7-A3A4-TP</text><text x="-666.4" y="577.78">BRCA-AC-A3RF-TP</text><text x="-666.4" y="578.70">BRCA-AC-A28Y-TP</text><text x="-666.4" y="579.63">BRCA-LL-A146-TP</text><text x="-666.4" y="581.48">BRCA-PE-A075-TP</text><text x="-666.4" y="582.41">BRCA-AO-A2FY-TP</text><text x="-666.4" y="583.33">BRCA-BH-A34W-TP</text><text x="-666.4" y="584.26">BRCA-A8-A0SK-TP</text>
<text x="-666.4" y="585.19">BRCA-AC-A0U4-TP</text><text x="-666.4" y="586.11">BRCA-GM-A3F8-TP</text><text x="-666.4" y="587.04">BRCA-A2-A23T-TP</text><text x="-666.4" y="587.96">BRCA-PE-A2KR-TP</text><text x="-666.4" y="588.89">BRCA-AQ-A2EA-TP</text><text x="-666.4" y="589.81">BRCA-A5-A3U1-TP</text><text x="-666.4" y="590.74">BRCA-E9-A2Z5-TP</text><text x="-666.4" y="592.59">BRCA-LL-A083-TP</text>
<text x="-666.4" y="593.52">BRCA-AO-A1KW-TP</text><text x="-666.4" y="594.44">BRCA-AR-A289-TP</text><text x="-665.4" y="595.37">BRCA-BH-A2WP-TP</text><text x="-666.4" y="596.30">BRCA-A1-A3FW-TP</text><text x="-666.4" y="597.22">BRCA-C8-A3GJ-TP</text><text x="-666.4" y="598.15">BRCA-A8-A2HM-TP</text><text x="-666.4" y="599.07">BRCA-OL-A1N5-TP</text><text x="-666.4" y="600.00">BRCA-A5-A2PW-TP</text>
<text x="-666.4" y="600.93">BRCA-E2-A2NZ-TP</text><text x="-666.4" y="601.85">BRCA-AN-A2TN-TP</text><text x="-666.4" y="603.70">BRCA-E2-A35G-TP</text><text x="-666.4" y="604.63">BRCA-A1-A344-TP</text><text x="-667.4" y="605.56">BRCA-OL-A3YU-TP</text><text x="-666.4" y="606.48">BRCA-E2-A0SL-TP</text><text x="-666.4" y="607.41">BRCA-A8-A0FD-TP</text><text x="-666.4" y="608.33">BRCA-E2-A395-TP</text>
<text x="-666.4" y="609.26">BRCA-D8-A0AP-TP</text><text x="-666.4" y="610.19">BRCA-PE-A3V0-TP</text><text x="-666.4" y="611.11">BRCA-D8-A3YN-TP</text><text x="-667.4" y="612.04">BRCA-A5-A1N8-TP</text><text x="-666.4" y="613.89">BRCA-AR-A1ES-TP</text><text x="-666.4" y="614.81">BRCA-GM-A2J8-TP</text><text x="-666.4" y="615.74">BRCA-A8-A305-TP</text><text x="-666.4" y="616.67">BRCA-A2-A3FS-TP</text>
<text x="-666.4" y="617.59">BRCA-B6-A3B4-TP</text><text x="-666.4" y="618.52">BRCA-E9-A0H7-TP</text><text x="-666.4" y="619.44">BRCA-PE-A3XC-TP</text><text x="-666.4" y="620.37">BRCA-A8-A0TY-TP</text><text x="-666.4" y="621.30">BRCA-B6-A0Y9-TP</text><text x="-666.4" y="622.22">BRCA-A7-A3SE-TP</text><text x="-666.4" y="623.15">BRCA-AQ-A3FA-TP</text><text x="-666.4" y="625.00">BRCA-D8-A2W1-TP</text>
<text x="-666.4" y="625.93">BRCA-AN-A2ZT-TP</text><text x="-666.4" y="626.85">BRCA-AC-A3HK-TP</text><text x="-666.4" y="627.78">BRCA-LL-A1ZF-TP</text><text x="-666.4" y="628.70">BRCA-PE-A2PV-TP</text><text x="-666.4" y="629.63">BRCA-AR-A1BF-TP</text><text x="-667.4" y="630.56">BRCA-AC-A3HD-TP</text><text x="-666.4" y="631.48">BRCA-AR-A32Y-TP</text><text x="-666.4" y="632.41">BRCA-LL-A3E2-TP</text>
<text x="-666.4" y="633.33">BRCA-AR-A36N-TP</text><text x="-666.4" y="634.26">BRCA-E2-A2CD-TP</text><text x="-666.4" y="636.11">BRCA-A8-A195-TP</text><text x="-666.4" y="637.04">BRCA-LL-A2ZY-TP</text><text x="-667.4" y="637.96">BRCA-EW-A3M0-TP</text><text x="-665.4" y="638.89">BRCA-AQ-A37U-TP</text><text x="-667.4" y="639.81">BRCA-GM-A0GH-TP</text><text x="-666.4" y="640.74">BRCA-E2-A3ST-TP</text>
<text x="-666.4" y="641.67">BRCA-LL-A066-TP</text><text x="-665.4" y="642.59">BRCA-AC-A27B-TP</text><text x="-666.4" y="643.52">BRCA-AR-A13Z-TP</text><text x="-666.4" y="644.44">BRCA-PE-A3KW-TP</text><text x="-665.4" y="645.37">BRCA-E2-A1LS-TP</text><text x="-666.4" y="647.22">BRCA-EW-A0EM-TP</text><text x="-666.4" y="648.15">BRCA-D8-A11C-TP</text><text x="-666.4" y="649.07">BRCA-B6-A0XG-TP</text>
<text x="-667.4" y="650.00">BRCA-OL-A2P6-TP</text><text x="-666.4" y="650.93">BRCA-S3-A06T-TP</text><text x="-666.4" y="651.85">BRCA-A7-A1CL-TP</text><text x="-666.4" y="652.78">BRCA-OL-A3EG-TP</text><text x="-666.4" y="653.70">BRCA-GM-A0T6-TP</text><text x="-666.4" y="654.63">BRCA-PE-A24W-TP</text><text x="-666.4" y="655.56">BRCA-BH-A221-TP</text><text x="-666.4" y="657.41">BRCA-GM-A0ZJ-TP</text>
<text x="-667.4" y="658.33">BRCA-AR-A1FS-TP</text><text x="-666.4" y="659.26">BRCA-AN-A3R9-TP</text><text x="-667.4" y="660.19">BRCA-OL-A2HL-TP</text><text x="-666.4" y="661.11">BRCA-C8-A18B-TP</text><text x="-666.4" y="662.04">BRCA-A5-A118-TP</text><text x="-666.4" y="662.96">BRCA-AR-A25E-TP</text><text x="-667.4" y="663.89">BRCA-E9-A2X7-TP</text><text x="-666.4" y="664.81">BRCA-AR-A2HQ-TP</text>
<text x="-666.4" y="665.74">BRCA-A7-A0P8-TP</text><text x="-666.4" y="666.67">BRCA-A8-A1RM-TP</text><text x="-666.4" y="668.52">BRCA-LL-A1VE-TP</text><text x="-667.4" y="669.44">BRCA-C8-A14Z-TP</text><text x="-666.4" y="670.37">BRCA-A2-A1Y4-TP</text><text x="-666.4" y="671.30">BRCA-OL-A208-TP</text><text x="-666.4" y="672.22">BRCA-S3-A0YA-TP</text><text x="-666.4" y="673.15">BRCA-A7-A1LK-TP</text>
<text x="-666.4" y="674.07">BRCA-BH-A0GM-TP</text><text x="-666.4" y="675.00">BRCA-LL-A3GC-TP</text><text x="-666.4" y="675.93">BRCA-GM-A2CR-TP</text><text x="-666.4" y="676.85">BRCA-PE-A35M-TP</text><text x="-666.4" y="677.78">BRCA-AQ-A1N1-TP</text><text x="-666.4" y="679.63">BRCA-S3-A089-TP</text><text x="-667.4" y="680.56">BRCA-AO-A1Q6-TP</text><text x="-666.4" y="681.48">BRCA-AR-A0MQ-TP</text>
<text x="-666.4" y="682.41">BRCA-D8-A2UQ-TP</text><text x="-666.4" y="683.33">BRCA-AR-A2Z8-TP</text><text x="-666.4" y="684.26">BRCA-EW-A3WQ-TP</text><text x="-666.4" y="685.19">BRCA-E9-A1YK-TP</text><text x="-666.4" y="686.11">BRCA-S3-A2ES-TP</text><text x="-666.4" y="687.04">BRCA-GM-A0HP-TP</text><text x="-666.4" y="687.96">BRCA-OL-A2NP-TP</text><text x="-666.4" y="688.89">BRCA-PE-A2VP-TP</text>
<text x="-666.4" y="690.74">BRCA-E9-A1CV-TP</text><text x="-666.4" y="691.67">BRCA-AO-A3Z8-TP</text><text x="-666.4" y="692.59">BRCA-S3-A1MS-TP</text><text x="-666.4" y="693.52">BRCA-A5-A2Z3-TP</text><text x="-666.4" y="694.44">BRCA-E9-A2XL-TP</text><text x="-666.4" y="695.37">BRCA-A5-A20E-TP</text><text x="-666.4" y="696.30">BRCA-GM-A0EL-TP</text><text x="-666.4" y="697.22">BRCA-C8-A1KU-TP</text>
<text x="-666.4" y="698.15">BRCA-C8-A1UZ-TP</text><text x="-666.4" y="699.07">BRCA-E2-A0XL-TP</text><text x="-667.4" y="700.93">BRCA-D8-A2C6-TP</text><text x="-666.4" y="701.85">BRCA-AQ-A3UG-TP</text><text x="-666.4" y="702.78">BRCA-A2-A3L7-TP</text><text x="-666.4" y="703.70">BRCA-E9-A2HQ-TP</text><text x="-666.4" y="704.63">BRCA-B6-A2F1-TP</text><text x="-666.4" y="705.56">BRCA-BH-A19N-TP</text>
<text x="-666.4" y="706.48">BRCA-OL-A27G-TP</text><text x="-666.4" y="707.41">BRCA-BH-A0QK-TP</text><text x="-666.4" y="708.33">BRCA-EW-A0US-TP</text><text x="-666.4" y="709.26">BRCA-AN-A2BQ-TP</text><text x="-666.4" y="710.19">BRCA-A5-A3DK-TP</text><text x="-666.4" y="712.04">BRCA-LL-A3F3-TP</text><text x="-666.4" y="712.96">BRCA-A8-A3RQ-TP</text><text x="-666.4" y="713.89">BRCA-S3-A1GA-TP</text>
<text x="-666.4" y="714.81">BRCA-A7-A0W4-TP</text><text x="-666.4" y="715.74">BRCA-AN-A1VK-TP</text><text x="-667.4" y="716.67">BRCA-LL-A1JN-TP</text><text x="-666.4" y="717.59">BRCA-A2-A02R-TP</text><text x="-666.4" y="718.52">BRCA-A7-A3KQ-TP</text><text x="-666.4" y="719.44">BRCA-AN-A0V3-TP</text><text x="-666.4" y="720.37">BRCA-LL-A0CR-TP</text><text x="-667.4" y="721.30">BRCA-S3-A2AH-TP</text>
<text x="-666.4" y="723.15">BRCA-A5-A3HR-TP</text><text x="-666.4" y="724.07">BRCA-E9-A0M1-TP</text><text x="-666.4" y="725.00">BRCA-A7-A38D-TP</text><text x="-667.4" y="725.93">BRCA-BH-A2RU-TP</text><text x="-666.4" y="726.85">BRCA-A5-A2W4-TP</text><text x="-666.4" y="727.78">BRCA-AQ-A036-TP</text><text x="-666.4" y="728.70">BRCA-GM-A3VE-TP</text><text x="-666.4" y="729.63">BRCA-E2-A12N-TP</text>
<text x="-666.4" y="730.56">BRCA-A5-A2S4-TP</text><text x="-666.4" y="731.48">BRCA-A5-A3AB-TP</text><text x="-666.4" y="732.41">BRCA-E2-A3KB-TP</text><text x="-666.4" y="734.26">BRCA-AO-A1HQ-TP</text><text x="-666.4" y="735.19">BRCA-C8-A1B7-TP</text><text x="-666.4" y="736.11">BRCA-B6-A0D8-TP</text><text x="-666.4" y="737.04">BRCA-B6-A1MW-TP</text><text x="-666.4" y="737.96">BRCA-A1-A0HV-TP</text>
<text x="-667.4" y="738.89">BRCA-AC-A2JS-TP</text><text x="-666.4" y="739.81">BRCA-GM-A214-TP</text><text x="-666.4" y="740.74">BRCA-B6-A3BM-TP</text><text x="-666.4" y="741.67">BRCA-A5-A1H8-TP</text><text x="-666.4" y="742.59">BRCA-AQ-A36F-TP</text><text x="-666.4" y="744.44">BRCA-A5-A03E-TP</text><text x="-666.4" y="745.37">BRCA-EW-A0M2-TP</text><text x="-666.4" y="746.30">BRCA-AO-A021-TP</text>
<text x="-666.4" y="747.22">BRCA-E2-A2PX-TP</text><text x="-666.4" y="748.15">BRCA-E2-A3FA-TP</text><text x="-666.4" y="749.07">BRCA-AO-A34H-TP</text><text x="-666.4" y="750.00">BRCA-AN-A2E5-TP</text><text x="-666.4" y="750.93">BRCA-GM-A2BV-TP</text><text x="-666.4" y="751.85">BRCA-BH-A2T3-TP</text><text x="-666.4" y="752.78">BRCA-GM-A14A-TP</text><text x="-665.4" y="753.70">BRCA-E2-A18S-TP</text>
<text x="-666.4" y="755.56">BRCA-BH-A12B-TP</text><text x="-666.4" y="756.48">BRCA-GM-A2GQ-TP</text><text x="-666.4" y="757.41">BRCA-AQ-A2B9-TP</text><text x="-666.4" y="758.33">BRCA-S3-A1ZB-TP</text><text x="-666.4" y="759.26">BRCA-S3-A1MN-TP</text><text x="-666.4" y="760.19">BRCA-LL-A3CF-TP</text><text x="-666.4" y="761.11">BRCA-PE-A0CC-TP</text><text x="-666.4" y="762.04">BRCA-S3-A34F-TP</text>
<text x="-666.4" y="762.96">BRCA-PE-A264-TP</text><text x="-666.4" y="763.89">BRCA-C8-A38P-TP</text><text x="-666.4" y="764.81">BRCA-GM-A0T6-TP</text><text x="-666.4" y="766.67">BRCA-GM-A0J2-TP</text><text x="-666.4" y="767.59">BRCA-GM-A2ZT-TP</text><text x="-666.4" y="768.52">BRCA-B6-A2NP-TP</text><text x="-666.4" y="769.44">BRCA-A5-A0Y8-TP</text><text x="-665.4" y="770.37">BRCA-C8-A0RC-TP</text>
<text x="-666.4" y="771.30">BRCA-EW-A28Y-TP</text><text x="-666.4" y="772.22">BRCA-C8-A230-TP</text><text x="-666.4" y="773.15">BRCA-AO-A2AQ-TP</text><text x="-666.4" y="774.07">BRCA-OL-A2B6-TP</text><text x="-666.4" y="775.00">BRCA-A7-A33L-TP</text><text x="-666.4" y="775.93">BRCA-AN-A37X-TP</text><text x="-666.4" y="777.78">BRCA-AR-A2HZ-TP</text><text x="-666.4" y="778.70">BRCA-EW-A1BS-TP</text>
<text x="-666.4" y="779.63">BRCA-B6-A22Z-TP</text><text x="-666.4" y="780.56">BRCA-B6-A01R-TP</text><text x="-666.4" y="781.48">BRCA-A2-A1L3-TP</text><text x="-666.4" y="782.41">BRCA-AQ-A2EA-TP</text><text x="-666.4" y="783.33">BRCA-BH-A1E8-TP</text><text x="-666.4" y="784.26">BRCA-EW-A1QY-TP</text><text x="-666.4" y="785.19">BRCA-A1-A0RC-TP</text><text x="-666.4" y="786.11">BRCA-A5-A1TH-TP</text>
<text x="-666.4" y="787.96">BRCA-A5-A0YF-TP</text><text x="-666.4" y="788.89">BRCA-A7-A0WA-TP</text><text x="-666.4" y="789.81">BRCA-S3-A0YJ-TP</text><text x="-666.4" y="790.74">BRCA-C8-A2P2-TP</text><text x="-666.4" y="791.67">BRCA-D8-A286-TP</text><text x="-666.4" y="792.59">BRCA-B6-A0K2-TP</text><text x="-666.4" y="793.52">BRCA-A7-A1ZC-TP</text><text x="-667.4" y="794.44">BRCA-AO-A1CR-TP</text>
<text x="-666.4" y="795.37">BRCA-BH-A0JM-TP</text><text x="-666.4" y="796.30">BRCA-S3-A004-TP</text><text x="-666.4" y="797.22">BRCA-D8-A2E5-TP</text><text x="-666.4" y="799.07">BRCA-S3-A2AK-TP</text><text x="-666.4" y="800.00">BRCA-A7-A0HS-TP</text><text x="-666.4" y="800.93">BRCA-A5-A1ED-TP</text><text x="-666.4" y="801.85">BRCA-AO-A0UK-TP</text><text x="-666.4" y="802.78">BRCA-EW-A0V8-TP</text>
<text x="-666.4" y="803.70">BRCA-EW-A37W-TP</text><text x="-666.4" y="804.63">BRCA-GM-A2LB-TP</text><text x="-666.4" y="805.56">BRCA-A8-A22M-TP</text><text x="-666.4" y="806.48">BRCA-LL-A2UL-TP</text><text x="-666.4" y="807.41">BRCA-EW-A2H8-TP</text><text x="-666.4" y="808.33">BRCA-AN-A2AY-TP</text><text x="-666.4" y="810.19">BRCA-AR-A22Q-TP</text><text x="-666.4" y="811.11">BRCA-AO-A0U8-TP</text>
<text x="-666.4" y="812.04">BRCA-S3-A00D-TP</text><text x="-666.4" y="812.96">BRCA-A8-A3EA-TP</text><text x="-666.4" y="813.89">BRCA-D8-A1DV-TP</text><text x="-666.4" y="814.81">BRCA-EW-A3GH-TP</text><text x="-666.4" y="815.74">BRCA-AR-A3UJ-TP</text><text x="-666.4" y="816.67">BRCA-C8-A1ER-TP</text><text x="-666.4" y="817.59">BRCA-A2-A0NA-TP</text><text x="-666.4" y="818.52">BRCA-BH-A3QW-TP</text>
<text x="-666.4" y="819.44">BRCA-D8-A0YT-TP</text><text x="-666.4" y="821.30">BRCA-A5-A307-TP</text><text x="-667.4" y="822.22">BRCA-C8-A3WE-TP</text><text x="-666.4" y="823.15">BRCA-AN-A3DU-TP</text><text x="-666.4" y="824.07">BRCA-C8-A2YT-TP</text><text x="-666.4" y="825.00">BRCA-A7-A3ST-TP</text><text x="-666.4" y="825.93">BRCA-A1-A28W-TP</text><text x="-666.4" y="826.85">BRCA-AQ-A1VN-TP</text>
<text x="-666.4" y="827.78">BRCA-E9-A0SA-TP</text><text x="-666.4" y="828.70">BRCA-S3-A3X0-TP</text><text x="-666.4" y="829.63">BRCA-E2-A322-TP</text><text x="-666.4" y="831.48">BRCA-EW-A1G0-TP</text><text x="-666.4" y="832.41">BRCA-GM-A1JP-TP</text><text x="-666.4" y="833.33">BRCA-A8-A070-TP</text><text x="-666.4" y="834.26">BRCA-AC-A29Q-TP</text><text x="-666.4" y="835.19">BRCA-AN-A3TW-TP</text>
<text x="-666.4" y="836.11">BRCA-AN-A0TS-TP</text><text x="-666.4" y="837.04">BRCA-B6-A2UZ-TP</text><text x="-666.4" y="837.96">BRCA-B6-A0N0-TP</text><text x="-666.4" y="838.89">BRCA-A8-A167-TP</text><text x="-666.4" y="839.81">BRCA-E9-A36R-TP</text><text x="-666.4" y="840.74">BRCA-AR-A2QZ-TP</text><text x="-666.4" y="842.59">BRCA-AN-A0VT-TP</text><text x="-666.4" y="843.52">BRCA-A2-A0TW-TP</text>
<text x="-666.4" y="844.44">BRCA-B6-A1EW-TP</text><text x="-666.4" y="845.37">BRCA-EW-A2JG-TP</text><text x="-665.4" y="846.30">BRCA-AQ-A0VV-TP</text><text x="-666.4" y="847.22">BRCA-E9-A2ZQ-TP</text><text x="-666.4" y="848.15">BRCA-EW-A11Q-TP</text><text x="-666.4" y="849.07">BRCA-B6-A294-TP</text><text x="-666.4" y="850.00">BRCA-A7-A1XA-TP</text><text x="-666.4" y="850.93">BRCA-E2-A2RQ-TP</text>
<text x="-667.4" y="851.85">BRCA-A2-A2E6-TP</text><text x="-666.4" y="853.70">BRCA-AR-A2JG-TP</text><text x="-666.4" y="854.63">BRCA-GM-A1VE-TP</text><text x="-666.4" y="855.56">BRCA-GM-A3QY-TP</text><text x="-666.4" y="856.48">BRCA-LL-A18F-TP</text><text x="-666.4" y="857.41">BRCA-AR-A1A0-TP</text><text x="-667.4" y="858.33">BRCA-A8-A08S-TP</text><text x="-666.4" y="859.26">BRCA-A7-A3CA-TP</text>
<text x="-666.4" y="860.19">BRCA-BH-A2L0-TP</text><text x="-666.4" y="861.11">BRCA-A7-A2VP-TP</text><text x="-666.4" y="862.04">BRCA-A5-A321-TP</text><text x="-666.4" y="862.96">BRCA-A7-A14B-TP</text><text x="-666.4" y="864.81">BRCA-A5-A2JG-TP</text><text x="-666.4" y="865.74">BRCA-EW-A0NW-TP</text><text x="-665.4" y="866.67">BRCA-OL-A2LQ-TP</text><text x="-666.4" y="867.59">BRCA-A7-A27W-TP</text>
<text x="-667.4" y="868.52">BRCA-OL-A383-TP</text><text x="-666.4" y="869.44">BRCA-C8-A2RN-TP</text><text x="-666.4" y="870.37">BRCA-A8-A3J5-TP</text><text x="-666.4" y="871.30">BRCA-EW-A0VT-TP</text><text x="-666.4" y="872.22">BRCA-BH-A16X-TP</text><text x="-666.4" y="873.15">BRCA-AQ-A1KF-TP</text><text x="-666.4" y="875.00">BRCA-AN-A0ZA-TP</text><text x="-667.4" y="875.93">BRCA-S3-A18C-TP</text>
</g>
</svg>
</body></html>
